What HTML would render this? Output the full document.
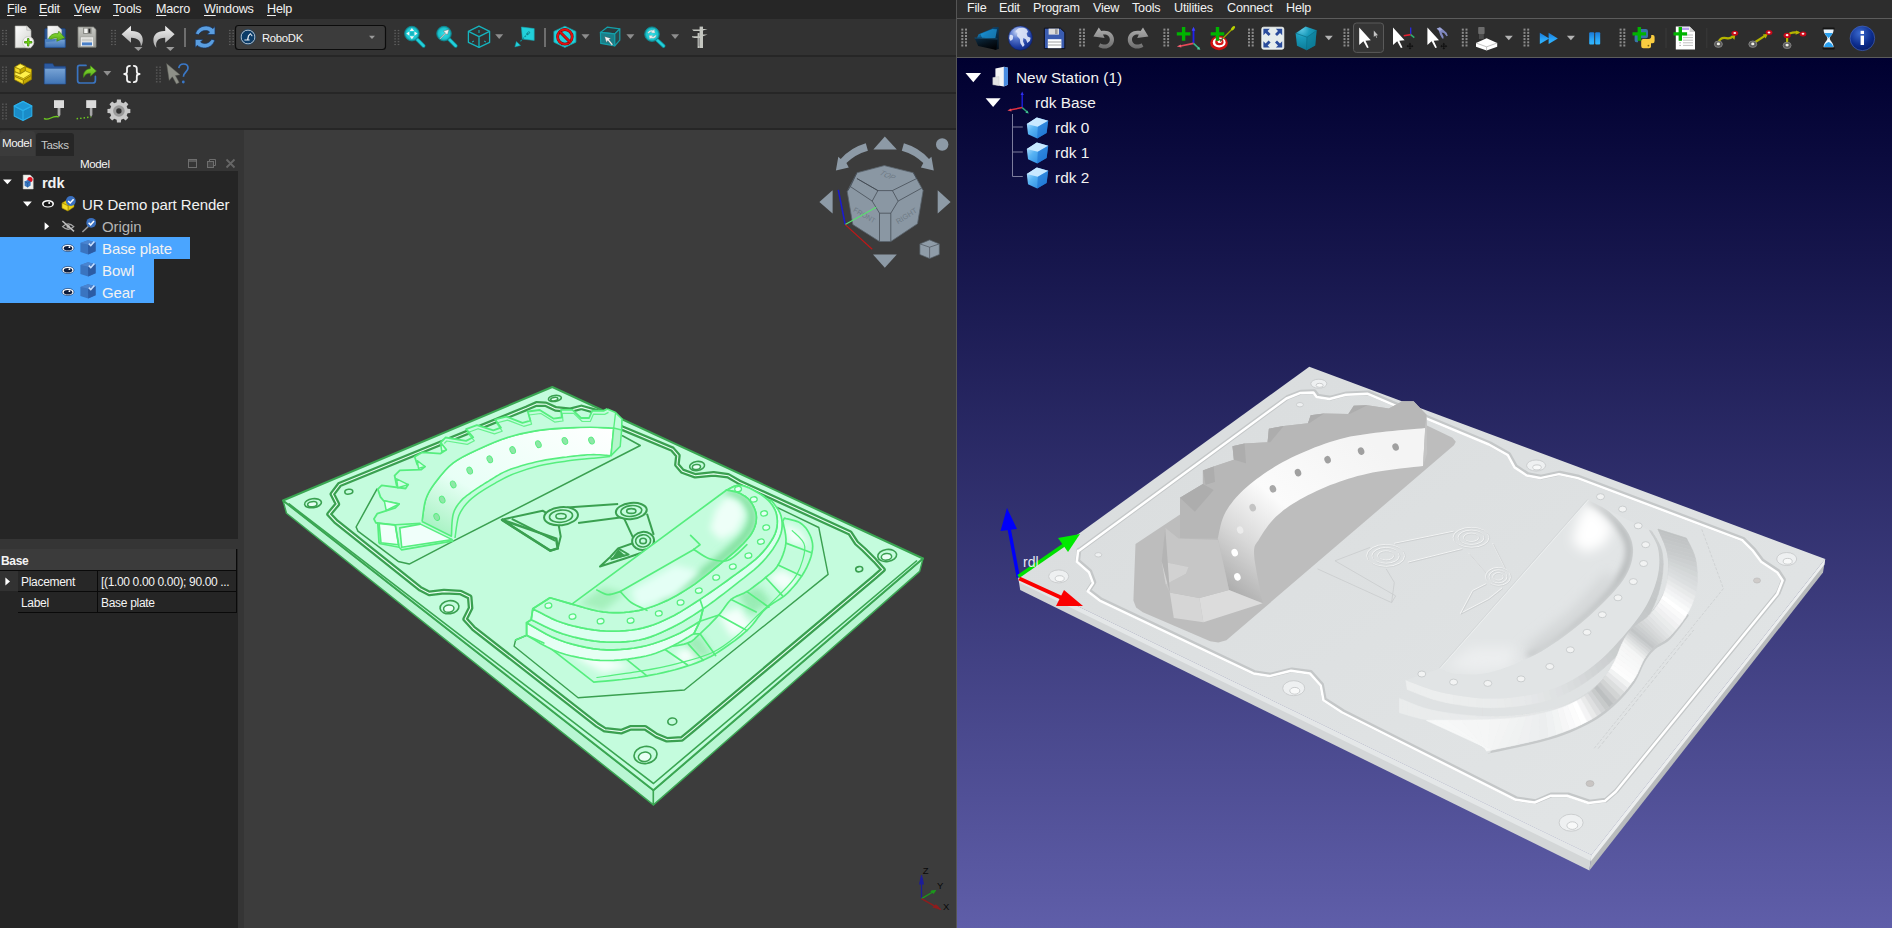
<!DOCTYPE html>
<html>
<head>
<meta charset="utf-8">
<title>FreeCAD / RoboDK</title>
<style>
html,body{margin:0;padding:0;}
body{width:1892px;height:928px;position:relative;overflow:hidden;background:#3c3c3c;font-family:"Liberation Sans",sans-serif;font-size:12.5px;color:#f0f0f0;}
.abs{position:absolute;}
.t{position:absolute;white-space:nowrap;line-height:1;}
svg{position:absolute;overflow:visible;}
/* LEFT WINDOW */
#L{position:absolute;left:0;top:0;width:957px;height:928px;background:#3c3c3c;overflow:hidden;}
#Lmenu{left:0;top:0;width:957px;height:19px;background:#262626;}
#Ltb1{left:0;top:19px;width:957px;height:36px;background:#323232;}
#Ltb2{left:0;top:57px;width:957px;height:35px;background:#323232;}
#Ltb3{left:0;top:94px;width:957px;height:34px;background:#323232;}
.sepd{position:absolute;left:0;width:957px;height:2px;background:#262626;}
#Lpanel{left:0;top:130px;width:244px;height:798px;background:#353535;}
#Ltree{left:0;top:171px;width:238px;height:368px;background:#252525;}
#Lprop{left:0;top:549px;width:238px;height:379px;background:#252525;}
.m{position:absolute;top:3px;letter-spacing:-0.2px;font-size:12.6px;line-height:13px;color:#f2f2f2;white-space:nowrap;}
.m u{text-decoration:underline;text-underline-offset:1.5px;text-decoration-thickness:1px;}
/* RIGHT WINDOW */
#R{position:absolute;left:957px;top:0;width:935px;height:928px;overflow:hidden;background:linear-gradient(#000030 58px,#5f5ea9 928px);}
#Rmenu{left:0;top:0;width:935px;height:18px;background:#2d2d2d;}
#Rtb{left:0;top:19px;width:935px;height:38px;background:#2d2d2d;}
.rm{position:absolute;top:2px;letter-spacing:-0.2px;font-size:12.6px;line-height:13px;color:#f2f2f2;white-space:nowrap;}
.rt{position:absolute;margin-top:1px;font-size:15.4px;line-height:16px;color:#f2f2f2;white-space:nowrap;}
.lt{position:absolute;font-size:15px;letter-spacing:-0.1px;line-height:16px;color:#f2f2f2;white-space:nowrap;}
.grip{position:absolute;width:4px;background-image:radial-gradient(circle,#6a6a6a 0.6px,transparent 0.8px);background-size:2px 2px;}
</style>
</head>
<body>
<div id="L">
  <div class="abs" id="Lmenu"></div>
  <div class="abs" id="Ltb1"></div>
  <div class="sepd" style="top:55px"></div>
  <div class="abs" id="Ltb2"></div>
  <div class="sepd" style="top:92px"></div>
  <div class="abs" id="Ltb3"></div>
  <div class="sepd" style="top:128px"></div>
  <div class="abs" id="Lpanel"></div>
  <div class="abs" id="Ltree"></div>
  <div class="abs" id="Lprop"></div>

  <!-- menu -->
  <div class="m" style="left:7px"><u>F</u>ile</div>
  <div class="m" style="left:39px"><u>E</u>dit</div>
  <div class="m" style="left:74px"><u>V</u>iew</div>
  <div class="m" style="left:113px"><u>T</u>ools</div>
  <div class="m" style="left:156px"><u>M</u>acro</div>
  <div class="m" style="left:204px"><u>W</u>indows</div>
  <div class="m" style="left:267px"><u>H</u>elp</div>
<!-- tabs -->
<div class="abs" style="left:0;top:131px;width:35px;height:25px;background:#3b3b3b;border-radius:3px 3px 0 0"></div>
<div class="abs" style="left:36px;top:133px;width:38px;height:23px;background:#262626;border-radius:3px 3px 0 0"></div>
<div class="t" style="left:2px;top:137px;font-size:11.6px;letter-spacing:-0.4px;color:#f4f4f4">Model</div>
<div class="t" style="left:41px;top:139px;font-size:11.6px;letter-spacing:-0.4px;color:#c8c8c8">Tasks</div>
<div class="t" style="left:80px;top:158px;font-size:11.6px;letter-spacing:-0.4px;color:#f4f4f4">Model</div>
<!-- selection -->
<div class="abs" style="left:0;top:237px;width:190px;height:22px;background:#4aa5ff"></div>
<div class="abs" style="left:0;top:259px;width:154px;height:44px;background:#4aa5ff"></div>
<!-- tree text -->
<div class="lt" style="left:42px;top:175px;font-weight:bold;font-size:14.6px">rdk</div>
<div class="lt" style="left:82px;top:197px">UR Demo part Render</div>
<div class="lt" style="left:102px;top:219px;color:#b4b4b4">Origin</div>
<div class="lt" style="left:102px;top:241px">Base plate</div>
<div class="lt" style="left:102px;top:263px">Bowl</div>
<div class="lt" style="left:102px;top:285px">Gear</div>
<!-- property table -->
<div class="abs" style="left:0;top:549px;width:237px;height:21px;background:#3b3b3b"></div>
<div class="abs" style="left:0;top:570px;width:237px;height:1px;background:#0a0a0a"></div>
<div class="abs" style="left:0;top:571px;width:18px;height:20px;background:#323232"></div>
<div class="abs" style="left:18px;top:571px;width:218px;height:20px;background:#272727"></div>
<div class="abs" style="left:18px;top:591px;width:219px;height:1px;background:#0a0a0a"></div>
<div class="abs" style="left:18px;top:612px;width:219px;height:1px;background:#0a0a0a"></div>
<div class="abs" style="left:97px;top:571px;width:1px;height:41px;background:#0a0a0a"></div>
<div class="abs" style="left:236px;top:549px;width:1px;height:64px;background:#0a0a0a"></div>
<div class="t" style="left:1px;top:555px;font-size:12px;font-weight:bold;letter-spacing:-0.3px;color:#f4f4f4">Base</div>
<div class="t" style="left:21px;top:576px;font-size:12px;letter-spacing:-0.3px;color:#f4f4f4">Placement</div>
<div class="t" style="left:101px;top:576px;font-size:12px;letter-spacing:-0.35px;color:#f4f4f4">[(1.00 0.00 0.00); 90.00 ...</div>
<div class="t" style="left:21px;top:597px;font-size:12px;letter-spacing:-0.3px;color:#f4f4f4">Label</div>
<div class="t" style="left:101px;top:597px;font-size:12px;letter-spacing:-0.3px;color:#f4f4f4">Base plate</div>
<div class="t" style="z-index:9;left:262px;top:32.5px;font-size:11.3px;letter-spacing:-0.3px;color:#f4f4f4">RoboDK</div>

<svg id="Licons" width="957" height="928" viewBox="0 0 957 928" style="left:0;top:0">
<defs>
<linearGradient id="gPaper" x1="0" y1="0" x2="1" y2="1"><stop offset="0" stop-color="#fdfdfd"/><stop offset="1" stop-color="#d2d4d0"/></linearGradient>
<linearGradient id="gBlue" x1="0" y1="0" x2="0" y2="1"><stop offset="0" stop-color="#78a4d6"/><stop offset="1" stop-color="#3f73b4"/></linearGradient>
<linearGradient id="gGreen" x1="0" y1="0" x2="0" y2="1"><stop offset="0" stop-color="#8ae234"/><stop offset="1" stop-color="#58a81c"/></linearGradient>
<linearGradient id="gGray" x1="0" y1="0" x2="0" y2="1"><stop offset="0" stop-color="#f2f2f2"/><stop offset="1" stop-color="#a8a8a8"/></linearGradient>
<linearGradient id="gSave" x1="0" y1="0" x2="0" y2="1"><stop offset="0" stop-color="#c8c9c4"/><stop offset="1" stop-color="#9a9b96"/></linearGradient>
<radialGradient id="gLens" cx="0.5" cy="0.5" r="0.5"><stop offset="0" stop-color="#34e0e8"/><stop offset="0.75" stop-color="#1bc4ce"/><stop offset="1" stop-color="#0e8e98"/></radialGradient>
<linearGradient id="gYel" x1="0" y1="0" x2="1" y2="1"><stop offset="0" stop-color="#fff04a"/><stop offset="1" stop-color="#d8b800"/></linearGradient>
</defs>
<rect x="2.0" y="29.9" width="1.6" height="1.2" fill="#5e5e5e"/><rect x="5.4" y="29.9" width="1.6" height="1.2" fill="#5e5e5e"/><rect x="2.0" y="32.7" width="1.6" height="1.2" fill="#5e5e5e"/><rect x="5.4" y="32.7" width="1.6" height="1.2" fill="#5e5e5e"/><rect x="2.0" y="35.5" width="1.6" height="1.2" fill="#5e5e5e"/><rect x="5.4" y="35.5" width="1.6" height="1.2" fill="#5e5e5e"/><rect x="2.0" y="38.3" width="1.6" height="1.2" fill="#5e5e5e"/><rect x="5.4" y="38.3" width="1.6" height="1.2" fill="#5e5e5e"/><rect x="2.0" y="41.1" width="1.6" height="1.2" fill="#5e5e5e"/><rect x="5.4" y="41.1" width="1.6" height="1.2" fill="#5e5e5e"/><rect x="2.0" y="43.9" width="1.6" height="1.2" fill="#5e5e5e"/><rect x="5.4" y="43.9" width="1.6" height="1.2" fill="#5e5e5e"/>
<rect x="111.0" y="29.9" width="1.6" height="1.2" fill="#5e5e5e"/><rect x="114.4" y="29.9" width="1.6" height="1.2" fill="#5e5e5e"/><rect x="111.0" y="32.7" width="1.6" height="1.2" fill="#5e5e5e"/><rect x="114.4" y="32.7" width="1.6" height="1.2" fill="#5e5e5e"/><rect x="111.0" y="35.5" width="1.6" height="1.2" fill="#5e5e5e"/><rect x="114.4" y="35.5" width="1.6" height="1.2" fill="#5e5e5e"/><rect x="111.0" y="38.3" width="1.6" height="1.2" fill="#5e5e5e"/><rect x="114.4" y="38.3" width="1.6" height="1.2" fill="#5e5e5e"/><rect x="111.0" y="41.1" width="1.6" height="1.2" fill="#5e5e5e"/><rect x="114.4" y="41.1" width="1.6" height="1.2" fill="#5e5e5e"/><rect x="111.0" y="43.9" width="1.6" height="1.2" fill="#5e5e5e"/><rect x="114.4" y="43.9" width="1.6" height="1.2" fill="#5e5e5e"/>
<rect x="229.0" y="29.9" width="1.6" height="1.2" fill="#5e5e5e"/><rect x="232.4" y="29.9" width="1.6" height="1.2" fill="#5e5e5e"/><rect x="229.0" y="32.7" width="1.6" height="1.2" fill="#5e5e5e"/><rect x="232.4" y="32.7" width="1.6" height="1.2" fill="#5e5e5e"/><rect x="229.0" y="35.5" width="1.6" height="1.2" fill="#5e5e5e"/><rect x="232.4" y="35.5" width="1.6" height="1.2" fill="#5e5e5e"/><rect x="229.0" y="38.3" width="1.6" height="1.2" fill="#5e5e5e"/><rect x="232.4" y="38.3" width="1.6" height="1.2" fill="#5e5e5e"/><rect x="229.0" y="41.1" width="1.6" height="1.2" fill="#5e5e5e"/><rect x="232.4" y="41.1" width="1.6" height="1.2" fill="#5e5e5e"/><rect x="229.0" y="43.9" width="1.6" height="1.2" fill="#5e5e5e"/><rect x="232.4" y="43.9" width="1.6" height="1.2" fill="#5e5e5e"/>
<rect x="394.3" y="29.9" width="1.6" height="1.2" fill="#5e5e5e"/><rect x="397.7" y="29.9" width="1.6" height="1.2" fill="#5e5e5e"/><rect x="394.3" y="32.7" width="1.6" height="1.2" fill="#5e5e5e"/><rect x="397.7" y="32.7" width="1.6" height="1.2" fill="#5e5e5e"/><rect x="394.3" y="35.5" width="1.6" height="1.2" fill="#5e5e5e"/><rect x="397.7" y="35.5" width="1.6" height="1.2" fill="#5e5e5e"/><rect x="394.3" y="38.3" width="1.6" height="1.2" fill="#5e5e5e"/><rect x="397.7" y="38.3" width="1.6" height="1.2" fill="#5e5e5e"/><rect x="394.3" y="41.1" width="1.6" height="1.2" fill="#5e5e5e"/><rect x="397.7" y="41.1" width="1.6" height="1.2" fill="#5e5e5e"/><rect x="394.3" y="43.9" width="1.6" height="1.2" fill="#5e5e5e"/><rect x="397.7" y="43.9" width="1.6" height="1.2" fill="#5e5e5e"/>
<path d="M15.2 26h11.6l4.2 4.2V47.8H15.2z" fill="url(#gPaper)" stroke="#b9bab6" stroke-width="0.6"/>
<path d="M26.8 26v4.2h4.2z" fill="#e8e8e6" stroke="#9a9a98" stroke-width="0.5"/>
<circle cx="28.2" cy="42.2" r="5.6" fill="#f4f4f2" stroke="#c4c4c0" stroke-width="0.8"/>
<path d="M28.2 39.2v6M25.2 42.2h6" stroke="#3f8a10" stroke-width="2.4" stroke-linecap="round"/><path d="M28.2 39.4v5.600M25.400 42.2h5.600" stroke="#73d216" stroke-width="1.300" stroke-linecap="round"/>
<rect x="44.8" y="28.6" width="20.6" height="18.9" rx="1" fill="#2c5898" stroke="#1c3c70" stroke-width="0.8"/>
<path d="M47.6 26h10l4 3.8V42H47.6z" fill="url(#gPaper)" stroke="#b9bab6" stroke-width="0.5"/>
<path d="M45 39.4h20.2v8H45z" fill="url(#gBlue)" stroke="#2a5490" stroke-width="0.6"/>
<path transform="translate(0,2.600)" d="M48 38.6c1-6 5.5-8.4 10-7.4l0.8-2.6 6 6.6-8 3.4 0.6-3c-3.6-0.8-6.8 0.6-9.4 3z" fill="url(#gGreen)" stroke="#3f8a10" stroke-width="0.7" stroke-linejoin="round"/>
<path d="M45 39.4c2.5-1.2 5-0.4 6.4 0.4 1.2 0.7 2.6 0 3.6-1.2l0.6 2.6-10.6 1z" fill="#4a80c0"/>
<path d="M78 27h15.4l2.6 2.6V47.2H78z" fill="url(#gSave)" stroke="#80817c" stroke-width="0.8" stroke-linejoin="round"/>
<rect x="83" y="27.6" width="8.6" height="6.4" fill="#8c8d88"/><rect x="84.2" y="28.6" width="3.4" height="4.4" fill="#f4f4f2"/><rect x="88.6" y="28.8" width="1.6" height="4" fill="#2c2c2c"/>
<rect x="80.6" y="37" width="12.8" height="9.4" fill="#f0f0ee" stroke="#a0a19c" stroke-width="0.6"/><path d="M81.6 39.2h10.8M81.6 40.8h10.8" stroke="#b4b5b0" stroke-width="0.8"/><rect x="82" y="42.4" width="10" height="3" fill="#4a80c8"/>
<path d="M121.6 34.2l9.4-8.4v5.2c7.6-0.4 11.8 3.6 11.8 9.2 0 2.6-0.8 4.6-2 6.2 0.4-5.2-3-8.8-9.8-8.6v5z" fill="url(#gGray)"/>
<path d="M134.10000000000002 47.0h8.4l-4.2 4z" fill="#9a9a9a"/>
<path d="M174.6 34.2l-9.4-8.4v5.2c-7.6-0.4-11.8 3.6-11.8 9.2 0 3 1.2 5.6 3 7.6-1.4-6.200 1.800-10.200 8.800-10v5z" fill="url(#gGray)"/>
<path d="M166.10000000000002 47.0h8.4l-4.2 4z" fill="#9a9a9a"/>
<rect x="184" y="28" width="2" height="19" fill="#6e6e6e"/>
<path d="M195.4 33.800c1.600-5.200 6.400-8.200 11.200-7.800 2.600 0.200 4.800 1.200 6.400 2.600l2-2v8h-8l2.600-2.600c-1.200-1-2.400-1.400-4-1.400-3.400 0-5.600 1.600-7 4.200z" fill="#5a9ee0" stroke="#15305a" stroke-width="0.7" stroke-linejoin="round"/>
<path d="M214.800 40.200c-1.600 5.200-6.400 8.200-11.200 7.800-2.600-0.200-4.800-1.200-6.400-2.600l-2 2v-8h8l-2.600 2.600c1.200 1 2.400 1.400 4 1.400 3.400 0 5.600-1.600 7-4.200z" fill="#5a9ee0" stroke="#15305a" stroke-width="0.7" stroke-linejoin="round"/>
<rect x="235.500" y="25.500" width="150" height="24" rx="3" fill="#3c3c3c" stroke="#0c0c0c" stroke-width="1.2"/>
<circle cx="248" cy="37" r="7" fill="#0c3c68" stroke="#e8eef4" stroke-width="0.9"/><circle cx="248" cy="37" r="7.700" fill="none" stroke="#0c3c68" stroke-width="0.6"/>
<path d="M244.400 40.400h5.200v-1h-1.200l0.600-3.200 1.400-1.600 1.600 1.800 0.600-0.600-2.200-2.800-2.400 2.400-1 4h-2.600z" fill="#e8eef4"/>
<path d="M369.0 35.699999999999996h6l-3.0 3.4z" fill="#9a9a9a"/>
<path d="M416.9 39.2L423.6 45.8" stroke="#0e8e98" stroke-width="3.800" stroke-linecap="round"/><path d="M416.9 39.2L423.6 45.8" stroke="#22d0da" stroke-width="2.400" stroke-linecap="round"/><circle cx="411.9" cy="33.6" r="7.300" fill="url(#gLens)" stroke="#0e8e98" stroke-width="0.800"/>
<path d="M411.900 28l2.200 3h-4.400zM411.900 39.200l2.200-3h-4.400zM406.300 33.600l3-2.200v4.400zM417.500 33.600l-3-2.200v4.400z" fill="#f4f4f4"/><rect x="410.100" y="31.800" width="3.600" height="3.600" fill="#16b4be"/>
<path d="M449 39.2L455.7 45.8" stroke="#0e8e98" stroke-width="3.800" stroke-linecap="round"/><path d="M449 39.2L455.7 45.8" stroke="#22d0da" stroke-width="2.400" stroke-linecap="round"/><circle cx="444" cy="33.6" r="7.300" fill="url(#gLens)" stroke="#0e8e98" stroke-width="0.800"/>
<path d="M439.600 38.400l5.600-5.600-1.800-1.800 5.600-1.600-1.600 5.600-1.600-1.600-5.400 5.600z" fill="#f4f4f4" stroke="#555" stroke-width="0.400"/>
<g fill="none" stroke="#16b4be" stroke-width="1.300" stroke-linejoin="round"><path d="M479 26.200l10.600 5.200v11l-10.600 5-10.600-5v-11z"/><path d="M468.400 31.400l10.600 5.200 10.600-5.200M479 36.600v10.800"/></g><path d="M479 30v3M474 41l-2 1M484 41l2 1" stroke="#16b4be" stroke-width="1"/>
<path d="M495.2 34.300000000000004h8l-4.0 4.6z" fill="#8e8e8e"/>
<path d="M521.400 27l12.800 1.600v11.800l-11.800-1.300z" fill="#22d0da" stroke="#14a8b2" stroke-width="0.600"/>
<path d="M528 33.400l-8 8.400" stroke="#0e8e98" stroke-width="1.200" stroke-dasharray="2 1"/><path d="M514.800 47l1.600-5.600 4.200 4z" fill="#22d0da" stroke="#0e8e98" stroke-width="0.500"/><ellipse cx="528.200" cy="33.200" rx="1.800" ry="0.900" transform="rotate(-45 528.200 33.200)" fill="none" stroke="#0e6e78" stroke-width="0.700"/>
<rect x="544" y="28" width="2" height="19" fill="#6e6e6e"/>
<path d="M564.900 26.200l11 5.200v10.800l-11 5.200-11-5.200V31.400z" fill="#22d0da" stroke="#12a0aa" stroke-width="0.800"/>
<circle cx="564.900" cy="36.800" r="7.300" fill="none" stroke="#7a0000" stroke-width="2.800"/><circle cx="564.900" cy="36.800" r="7.300" fill="none" stroke="#e01010" stroke-width="1.900"/><path d="M559.800 31.700l10.200 10.200" stroke="#7a0000" stroke-width="2.800"/><path d="M559.800 31.700l10.200 10.200" stroke="#e01010" stroke-width="1.900"/>
<path d="M581.5 34.300000000000004h8l-4.0 4.6z" fill="#8e8e8e"/>
<g stroke="#14a0aa" stroke-width="1.200" stroke-linejoin="round"><path d="M600.400 32.400l6.800-5.200 12.600 1.600-5 5z" fill="#2a3c3e"/><path d="M600.400 32.400l14.400 1.400v12l-14-2.400z" fill="#1a7e88"/><path d="M614.800 33.800l5-5v11.400l-5 5.600z" fill="#2a4a4e"/></g>
<path d="M604.600 36.400l6.400 2-2 1.200 4 4.800-1.200 1-4-4.800-1.400 1.800z" fill="#f4f4f4" stroke="#444" stroke-width="0.300"/>
<path d="M626.4 34.300000000000004h8l-4.0 4.6z" fill="#8e8e8e"/>
<path d="M657 39.800000000000004L663.6 46" stroke="#0e8e98" stroke-width="3.800" stroke-linecap="round"/><path d="M657 39.800000000000004L663.6 46" stroke="#22d0da" stroke-width="2.400" stroke-linecap="round"/><circle cx="652" cy="34.2" r="7.300" fill="url(#gLens)" stroke="#0e8e98" stroke-width="0.800"/>
<path d="M647.600 33c0.800-2.400 3.400-3.400 5.600-2.600l1-1.200 0.800 3.800-3.800-0.200 0.900-1c-1.400-0.400-2.600 0.200-3.200 1.400zM656.400 35.400c-0.800 2.400-3.400 3.400-5.600 2.600l-1 1.200-0.800-3.800 3.800 0.200-0.900 1c1.400 0.400 2.600-0.200 3.200-1.400z" fill="#f0f0f0" stroke="#999" stroke-width="0.300"/>
<path d="M671.1 34.300000000000004h8l-4.0 4.6z" fill="#8e8e8e"/>
<g fill="#c4c6c0"><rect x="699.600" y="26.600" width="3.400" height="21.400"/><path d="M692 29.400h9v1.600h-7.400zM692 36.200h9v1.800h-6.600l-2.400-0.800z"/><path d="M703 29h4.600l-4.600 1.600zM703 34.600h4.600l-4.600 1.600z"/><rect x="697.600" y="33" width="2" height="15"/></g><path d="M698 39h2M698 41h2M698 43h2M698 45h2" stroke="#666" stroke-width="0.600"/>
<rect x="2.0" y="66.6" width="1.6" height="1.2" fill="#5e5e5e"/><rect x="5.4" y="66.6" width="1.6" height="1.2" fill="#5e5e5e"/><rect x="2.0" y="69.5" width="1.6" height="1.2" fill="#5e5e5e"/><rect x="5.4" y="69.5" width="1.6" height="1.2" fill="#5e5e5e"/><rect x="2.0" y="72.4" width="1.6" height="1.2" fill="#5e5e5e"/><rect x="5.4" y="72.4" width="1.6" height="1.2" fill="#5e5e5e"/><rect x="2.0" y="75.4" width="1.6" height="1.2" fill="#5e5e5e"/><rect x="5.4" y="75.4" width="1.6" height="1.2" fill="#5e5e5e"/><rect x="2.0" y="78.3" width="1.6" height="1.2" fill="#5e5e5e"/><rect x="5.4" y="78.3" width="1.6" height="1.2" fill="#5e5e5e"/><rect x="2.0" y="81.2" width="1.6" height="1.2" fill="#5e5e5e"/><rect x="5.4" y="81.2" width="1.6" height="1.2" fill="#5e5e5e"/>
<rect x="155.9" y="66.6" width="1.6" height="1.2" fill="#5e5e5e"/><rect x="159.3" y="66.6" width="1.6" height="1.2" fill="#5e5e5e"/><rect x="155.9" y="69.5" width="1.6" height="1.2" fill="#5e5e5e"/><rect x="159.3" y="69.5" width="1.6" height="1.2" fill="#5e5e5e"/><rect x="155.9" y="72.4" width="1.6" height="1.2" fill="#5e5e5e"/><rect x="159.3" y="72.4" width="1.6" height="1.2" fill="#5e5e5e"/><rect x="155.9" y="75.4" width="1.6" height="1.2" fill="#5e5e5e"/><rect x="159.3" y="75.4" width="1.6" height="1.2" fill="#5e5e5e"/><rect x="155.9" y="78.3" width="1.6" height="1.2" fill="#5e5e5e"/><rect x="159.3" y="78.3" width="1.6" height="1.2" fill="#5e5e5e"/><rect x="155.9" y="81.2" width="1.6" height="1.2" fill="#5e5e5e"/><rect x="159.3" y="81.2" width="1.6" height="1.2" fill="#5e5e5e"/>
<g stroke="#8a7400" stroke-width="0.700" stroke-linejoin="round"><path d="M14.600 76.400l8.800 4 8.200-5v-6.200l-6-2.400v-0.600l-5.400-2.200-5.400 3.200v4.600l-0.200 0.200z" fill="#e8cc10"/><path d="M14.800 67l5.400 2.400v4.400l-5.400-2.200zM14.600 76.400l8.800 3.800v4l-8.800-4.400z" fill="#f4dc28"/><path d="M20.200 69.400l5.200-3v4.400l-5.200 3zM23.400 80.200l8.200-5v4.200l-8.200 5z" fill="#c4a800"/><path d="M14.800 67l5.400-3.200 5.200 2.600-5.200 3zM15 72l5.200 2 5.200-3.200 6.200 2.800-8.200 5-8.800-3.800z" fill="#fff04a"/></g>
<path d="M44.200 84V64.600q0-1 1-1h7.400l1.800 2.600h10.400q1 0 1 1V84z" fill="#2c5aa0" stroke="#1c3c70" stroke-width="0.600"/><path d="M44.600 68.400h20.800V84H44.600z" fill="url(#gBlue)" stroke="#2a5490" stroke-width="0.500"/>
<path d="M86 65.400h-6.400q-2 0-2 2v13q0 2.600 2.600 2.600h12.600q2.600 0 2.600-2.600v-4" fill="none" stroke="#3a74c0" stroke-width="1.700" stroke-linecap="round"/>
<path d="M83.600 77.400c-0.600-5.200 2.400-8.400 6.800-8.600v-3l6 5.200-6 5.200v-3c-3.200-0.200-5.400 1.400-6.800 4.200z" fill="url(#gGreen)" stroke="#3f8a10" stroke-width="0.600" stroke-linejoin="round"/>
<path d="M103.3 71.10000000000001h8l-4.0 4.6z" fill="#8e8e8e"/>
<g fill="none" stroke="#f4f4f4" stroke-width="1.800" stroke-linecap="round" stroke-linejoin="round"><path d="M130 65.800q-3 0-3 2.600v3.200q0 2.400-2.800 2.400 2.800 0 2.800 2.400v3.200q0 2.600 3 2.600"/><path d="M133.800 65.800q3 0 3 2.600v3.200q0 2.400 2.800 2.400-2.800 0-2.800 2.400v3.200q0 2.600-3 2.600"/></g>
<path d="M166.600 63.600l2.600 16.800 3.200-3.600 4 7.200 2.800-1.600-3.800-6.800 4.600-0.800z" fill="#8e9088" stroke="#5a5c56" stroke-width="0.500" stroke-linejoin="round"/>
<path d="M178.800 68.200c0.400-3 2.600-4.200 4.800-4.200 2.600 0 4.400 1.600 4.400 4 0 3.600-4.600 4.200-4.600 8.800" fill="none" stroke="#3a78c8" stroke-width="1.700"/><circle cx="183.300" cy="82" r="1.400" fill="#3a78c8"/>
<rect x="2.0" y="103.6" width="1.6" height="1.2" fill="#5e5e5e"/><rect x="5.4" y="103.6" width="1.6" height="1.2" fill="#5e5e5e"/><rect x="2.0" y="106.5" width="1.6" height="1.2" fill="#5e5e5e"/><rect x="5.4" y="106.5" width="1.6" height="1.2" fill="#5e5e5e"/><rect x="2.0" y="109.4" width="1.6" height="1.2" fill="#5e5e5e"/><rect x="5.4" y="109.4" width="1.6" height="1.2" fill="#5e5e5e"/><rect x="2.0" y="112.4" width="1.6" height="1.2" fill="#5e5e5e"/><rect x="5.4" y="112.4" width="1.6" height="1.2" fill="#5e5e5e"/><rect x="2.0" y="115.3" width="1.6" height="1.2" fill="#5e5e5e"/><rect x="5.4" y="115.3" width="1.6" height="1.2" fill="#5e5e5e"/><rect x="2.0" y="118.2" width="1.6" height="1.2" fill="#5e5e5e"/><rect x="5.4" y="118.2" width="1.6" height="1.2" fill="#5e5e5e"/>
<g stroke="#2ab0ea" stroke-width="1.100" stroke-linejoin="round"><path d="M23 101.400l8.800 4.600v10l-8.800 4.600-8.800-4.600v-10z" fill="#1a8cc8"/><path d="M14.200 106l8.800 4.600 8.800-4.600M23 110.600v10" fill="none"/><path d="M23 101.400l8.800 4.600-8.800 4.600-8.800-4.600z" fill="#1e98d6"/></g>
<rect x="54" y="100.200" width="10" height="7.800" fill="#dcdcdc"/><path d="M57.600 108h2.800v7l-1.400 2-1.400-2z" fill="#a8a8a8"/><path d="M44 118.400c2 1.400 4.400 0.800 6.800-0.400 2.600-1.300 5-2 8-1.200" fill="none" stroke="#6cc820" stroke-width="1.300"/>
<rect x="86.200" y="100.200" width="10" height="7.800" fill="#dcdcdc"/><path d="M89.800 108h2.600v7l-1.300 2-1.300-2z" fill="#a8a8a8"/><path d="M76.600 118.800l14.600-1.800" fill="none" stroke="#6cc820" stroke-width="1.500" stroke-dasharray="1.500 2"/>
<path d="M116.67 102.28 L116.94 99.57 L120.86 99.57 L121.13 102.28 L123.49 103.26 L125.60 101.53 L128.37 104.30 L126.64 106.41 L127.62 108.77 L130.33 109.04 L130.33 112.96 L127.62 113.23 L126.64 115.59 L128.37 117.70 L125.60 120.47 L123.49 118.74 L121.13 119.72 L120.86 122.43 L116.94 122.43 L116.67 119.72 L114.31 118.74 L112.20 120.47 L109.43 117.70 L111.16 115.59 L110.18 113.23 L107.47 112.96 L107.47 109.04 L110.18 108.77 L111.16 106.41 L109.43 104.30 L112.20 101.53 L114.31 103.26z" fill="#c8c8c8"/><circle cx="118.9" cy="111" r="5.800" fill="#989898"/><circle cx="118.9" cy="111" r="2.700" fill="#323232"/>
</svg>
<svg id="Lmodel" width="957" height="928" viewBox="0 0 957 928" style="left:0;top:0">
<defs>
<linearGradient id="lgBand" x1="0" y1="1" x2="1" y2="0"><stop offset="0" stop-color="#9af0b8"/><stop offset="0.35" stop-color="#e8fff6"/><stop offset="1" stop-color="#ffffff"/></linearGradient>
<radialGradient id="lgBowl" cx="0.55" cy="0.35" r="0.6"><stop offset="0" stop-color="#e4fff4"/><stop offset="0.7" stop-color="#c4fcdd"/><stop offset="1" stop-color="#9ceeb8"/></radialGradient>
<linearGradient id="lgTrough" x1="0" y1="0" x2="1" y2="0.3"><stop offset="0" stop-color="#c4fcdd"/><stop offset="0.4" stop-color="#eafff8"/><stop offset="1" stop-color="#c4fcdd"/></linearGradient>
</defs>
<path d="M283.0 500.5 L653.4 790.2 L653.4 804.9 L286.5 513.3z" fill="#b9f6d3" stroke="#3aa652" stroke-width="1.4" stroke-linejoin="round"/>
<path d="M653.4 790.2 L923.0 558.5 L919.7 571.4 L653.4 804.9z" fill="#b9f6d3" stroke="#3aa652" stroke-width="1.4" stroke-linejoin="round"/>
<path d="M552.3 387.0 L923.0 558.5 L653.4 790.2 L283.0 500.5z" fill="#c4fcdd" stroke="#3aa652" stroke-width="2" stroke-linejoin="round"/>
<path d="M288.5 503.5 L653.4 783.5 L917.0 560.5" fill="none" stroke="#3aa652" stroke-width="1.6"/>
<path d="M339.6 484.5 L526.5 408.3 L536.5 403.9 L545.7 404.3 L555.8 408.9 L570.4 410.2 L581.4 407.4 L597.9 412.0 L622.0 428.1 L672.4 449.2 L677.9 455.6 L676.9 464.8 L682.4 471.2 L695.3 475.8 L713.6 473.9 L728.2 475.8 L739.2 482.2 L850.0 533.0 L856.5 543.0 L863.8 549.5 L874.8 560.5 L883.0 569.6 L874.8 576.9 L691.9 730.7 L681.8 738.9 L667.1 739.8 L656.2 735.3 L645.2 727.9 L630.5 727.9 L621.4 731.6 L604.9 729.8 L597.5 725.2 L473.3 628.2 L465.1 619.1 L470.6 608.1 L469.7 597.1 L460.5 592.5 L444.0 591.6 L429.4 593.4 L420.2 588.8 L335.9 521.5 L329.0 514.2 L337.4 504.1 L332.3 494.1z" fill="none" stroke="#3aa050" stroke-width="5.6" stroke-linejoin="round"/>
<path d="M339.6 484.5 L526.5 408.3 L536.5 403.9 L545.7 404.3 L555.8 408.9 L570.4 410.2 L581.4 407.4 L597.9 412.0 L622.0 428.1 L672.4 449.2 L677.9 455.6 L676.9 464.8 L682.4 471.2 L695.3 475.8 L713.6 473.9 L728.2 475.8 L739.2 482.2 L850.0 533.0 L856.5 543.0 L863.8 549.5 L874.8 560.5 L883.0 569.6 L874.8 576.9 L691.9 730.7 L681.8 738.9 L667.1 739.8 L656.2 735.3 L645.2 727.9 L630.5 727.9 L621.4 731.6 L604.9 729.8 L597.5 725.2 L473.3 628.2 L465.1 619.1 L470.6 608.1 L469.7 597.1 L460.5 592.5 L444.0 591.6 L429.4 593.4 L420.2 588.8 L335.9 521.5 L329.0 514.2 L337.4 504.1 L332.3 494.1z" fill="none" stroke="#e6fff2" stroke-width="1.1" stroke-linejoin="round"/>
<ellipse cx="554.9" cy="398.4" rx="6.5" ry="3" transform="rotate(-8 554.9 398.4)" fill="#c4fcdd" stroke="#3aa050" stroke-width="1.6"/><ellipse cx="554.2" cy="399.0" rx="3.6" ry="1.7" transform="rotate(-8 554.9 398.4)" fill="#e8fff4" stroke="#3aa050" stroke-width="1.5"/>
<ellipse cx="313.0" cy="503.2" rx="8.5" ry="4.5" transform="rotate(-8 313.0 503.2)" fill="#c4fcdd" stroke="#3aa050" stroke-width="1.6"/><ellipse cx="312.2" cy="504.1" rx="4.7" ry="2.5" transform="rotate(-8 313.0 503.2)" fill="#e8fff4" stroke="#3aa050" stroke-width="1.5"/>
<ellipse cx="449.5" cy="607.2" rx="9.5" ry="6.5" transform="rotate(-8 449.5 607.2)" fill="#c4fcdd" stroke="#3aa050" stroke-width="1.6"/><ellipse cx="448.6" cy="608.5" rx="5.2" ry="3.6" transform="rotate(-8 449.5 607.2)" fill="#e8fff4" stroke="#3aa050" stroke-width="1.5"/>
<ellipse cx="645.5" cy="755.0" rx="11.5" ry="8.5" transform="rotate(-8 645.5 755.0)" fill="#c4fcdd" stroke="#3aa050" stroke-width="1.6"/><ellipse cx="644.4" cy="756.7" rx="6.3" ry="4.7" transform="rotate(-8 645.5 755.0)" fill="#e8fff4" stroke="#3aa050" stroke-width="1.5"/>
<ellipse cx="887.2" cy="555.5" rx="9.5" ry="6" transform="rotate(-8 887.2 555.5)" fill="#c4fcdd" stroke="#3aa050" stroke-width="1.6"/><ellipse cx="886.3" cy="556.7" rx="5.2" ry="3.3" transform="rotate(-8 887.2 555.5)" fill="#e8fff4" stroke="#3aa050" stroke-width="1.5"/>
<ellipse cx="697.1" cy="466.0" rx="7.5" ry="4.5" transform="rotate(-8 697.1 466.0)" fill="#c4fcdd" stroke="#3aa050" stroke-width="1.6"/><ellipse cx="696.3" cy="466.9" rx="4.1" ry="2.5" transform="rotate(-8 697.1 466.0)" fill="#e8fff4" stroke="#3aa050" stroke-width="1.5"/>
<ellipse cx="348.8" cy="491.7" rx="4" ry="2.4" transform="rotate(-8 348.8 491.7)" fill="#c4fcdd" stroke="#3aa050" stroke-width="1.6"/>
<ellipse cx="672.3" cy="721.5" rx="4.5" ry="3.5" transform="rotate(-8 672.3 721.5)" fill="#c4fcdd" stroke="#3aa050" stroke-width="1.6"/>
<ellipse cx="859.2" cy="569.2" rx="3.5" ry="2.6" transform="rotate(-8 859.2 569.2)" fill="#c4fcdd" stroke="#3aa050" stroke-width="1.6"/>
<path d="M377.2 488.6 L356.1 527.0 L357.9 531.1 L398.2 561.4 L409.2 564.1 L453.2 541.2 L640.3 445.5 L622.0 435.5" fill="none" stroke="#3aa050" stroke-width="1.5" stroke-linejoin="round"/>
<path d="M422.0 521.5 C422.7 517.9 423.6 506.0 425.7 499.6 C427.8 493.2 430.3 489.2 434.9 483.1 C439.4 477.0 445.6 468.7 453.2 462.9 C460.8 457.1 471.5 452.5 480.7 448.3 C489.8 444.0 499.0 440.2 508.1 437.3 C517.3 434.4 526.5 432.4 535.6 430.9 C544.8 429.3 553.9 428.7 563.1 428.1 C572.3 427.5 582.1 427.2 590.6 427.2 C599.0 427.2 609.9 428.0 613.7 428.1 L611.0 455.6 " fill="none"/>
<path d="M422.0 521.5 L422.3 519.8 L422.6 517.5 L422.9 514.7 L423.3 511.6 L423.8 508.4 L424.3 505.2 L425.0 502.2 L425.7 499.6 L426.5 497.3 L427.4 495.1 L428.3 493.1 L429.4 491.2 L430.5 489.3 L431.8 487.3 L433.2 485.3 L434.9 483.1 L436.7 480.7 L438.6 478.2 L440.7 475.5 L442.9 472.9 L445.2 470.2 L447.7 467.7 L450.4 465.2 L453.2 462.9 L456.2 460.8 L459.4 458.8 L462.8 456.9 L466.4 455.0 L470.0 453.3 L473.6 451.6 L477.2 449.9 L480.7 448.3 L484.1 446.7 L487.5 445.2 L491.0 443.7 L494.4 442.3 L497.8 440.9 L501.3 439.6 L504.7 438.4 L508.1 437.3 L511.6 436.2 L515.0 435.3 L518.4 434.4 L521.9 433.6 L525.3 432.8 L528.7 432.1 L532.2 431.5 L535.6 430.9 L539.1 430.3 L542.5 429.9 L545.9 429.5 L549.4 429.2 L552.8 428.9 L556.2 428.6 L559.7 428.4 L563.1 428.1 L566.6 427.9 L570.1 427.7 L573.6 427.6 L577.1 427.4 L580.6 427.3 L584.0 427.3 L587.3 427.2 L590.6 427.2 L593.8 427.2 L597.2 427.3 L600.6 427.5 L603.9 427.6 L606.9 427.8 L609.7 427.9 L612.0 428.0 L613.7 428.1 L611.0 455.6 L609.5 455.5 L607.5 455.4 L605.1 455.2 L602.5 455.0 L599.6 454.8 L596.7 454.7 L593.6 454.6 L590.6 454.7 L587.5 454.8 L584.2 455.1 L580.8 455.4 L577.3 455.7 L573.7 456.1 L570.1 456.5 L566.6 457.0 L563.1 457.4 L559.7 457.9 L556.2 458.4 L552.8 458.9 L549.4 459.4 L545.9 459.9 L542.5 460.6 L539.1 461.3 L535.6 462.0 L532.1 462.9 L528.5 463.8 L524.9 464.8 L521.3 465.8 L517.8 466.9 L514.4 468.0 L511.1 469.1 L508.1 470.3 L505.4 471.4 L502.9 472.6 L500.6 473.8 L498.4 475.1 L496.3 476.3 L494.2 477.6 L492.0 479.0 L489.8 480.3 L487.5 481.8 L485.1 483.2 L482.6 484.8 L480.2 486.3 L477.8 487.9 L475.6 489.4 L473.4 490.9 L471.5 492.2 L469.8 493.5 L468.2 494.6 L466.7 495.7 L465.3 496.8 L464.0 497.8 L462.8 498.9 L461.7 500.1 L460.5 501.4 L459.4 502.8 L458.3 504.1 L457.3 505.5 L456.3 507.0 L455.4 508.6 L454.5 510.3 L453.8 512.2 L453.2 514.2 L452.7 516.7 L452.3 519.6 L452.0 522.8 L451.8 526.0 L451.7 529.2 L451.6 532.0 L451.5 534.4 L451.4 536.2z" fill="url(#lgBand)" stroke="#56ee7e" stroke-width="1.6" stroke-linejoin="round"/>
<path d="M455.0 538.0 C455.6 534.4 456.7 521.9 458.7 516.1 C460.7 510.3 463.6 507.0 466.9 503.2 C470.3 499.4 474.1 496.5 478.8 493.2 C483.6 489.8 489.5 486.3 495.3 483.1 C501.1 479.9 506.3 476.8 513.6 473.9 C521.0 471.0 530.4 467.8 539.3 465.7 C548.1 463.5 557.9 462.3 566.8 461.1 C575.6 459.9 585.2 459.1 592.4 458.3 C599.6 457.6 607.1 456.8 610.0 456.5" fill="none" stroke="#56ee7e" stroke-width="1.5"/>
<ellipse cx="436.7" cy="517.0" rx="2.6" ry="3.6" transform="rotate(-25 436.7 517.0)" fill="#8fe6a8" stroke="#56ee7e" stroke-width="0.9"/>
<ellipse cx="442.2" cy="499.6" rx="2.6" ry="3.6" transform="rotate(-25 442.2 499.6)" fill="#8fe6a8" stroke="#56ee7e" stroke-width="0.9"/>
<ellipse cx="453.2" cy="484.4" rx="2.6" ry="3.6" transform="rotate(-25 453.2 484.4)" fill="#8fe6a8" stroke="#56ee7e" stroke-width="0.9"/>
<ellipse cx="469.7" cy="470.6" rx="2.6" ry="3.6" transform="rotate(-25 469.7 470.6)" fill="#8fe6a8" stroke="#56ee7e" stroke-width="0.9"/>
<ellipse cx="489.8" cy="459.3" rx="2.6" ry="3.6" transform="rotate(-25 489.8 459.3)" fill="#8fe6a8" stroke="#56ee7e" stroke-width="0.9"/>
<ellipse cx="512.7" cy="450.1" rx="2.6" ry="3.6" transform="rotate(-25 512.7 450.1)" fill="#8fe6a8" stroke="#56ee7e" stroke-width="0.9"/>
<ellipse cx="538.4" cy="444.2" rx="2.6" ry="3.6" transform="rotate(-25 538.4 444.2)" fill="#8fe6a8" stroke="#56ee7e" stroke-width="0.9"/>
<ellipse cx="564.9" cy="440.9" rx="2.6" ry="3.6" transform="rotate(-25 564.9 440.9)" fill="#8fe6a8" stroke="#56ee7e" stroke-width="0.9"/>
<ellipse cx="591.5" cy="440.6" rx="2.6" ry="3.6" transform="rotate(-25 591.5 440.6)" fill="#8fe6a8" stroke="#56ee7e" stroke-width="0.9"/>
<path d="M379.1 543.5 L377.8 522.8 L375.9 522.8 L373.9 518.9 L377.2 513.7 L395.3 507.9 L399.1 504.0 L383.6 500.8 L380.4 496.9 L377.8 489.1 L381.7 485.3 L405.6 488.5 L408.2 484.6 L396.6 485.3 L394.6 475.6 L399.8 470.4 L421.1 469.7 L425.0 466.5 L417.2 464.6 L414.7 456.8 L422.4 452.3 L440.5 453.6 L446.3 449.7 L440.5 442.6 L443.1 440.0 L445.5 437.5 L466.1 440.9 L473.2 437.3 L466.1 429.2 L476.9 425.2 L493.3 430.4 L501.0 427.7 L495.2 419.5 L506.4 416.6 L522.5 422.8 L530.4 420.7 L527.8 411.5 L539.7 410.0 L553.4 418.6 L561.8 417.5 L561.0 409.8 L572.5 409.8 L581.0 418.0 L589.1 418.0 L592.3 410.6 L603.5 410.9 L607.3 408.9 L615.6 412.6 L622.0 419.0 L621.6 430.0 L613.7 428.1 L612.0 428.0 L609.7 427.9 L606.9 427.8 L603.9 427.6 L600.6 427.5 L597.2 427.3 L593.8 427.2 L590.6 427.2 L587.3 427.2 L584.0 427.3 L580.6 427.3 L577.1 427.4 L573.6 427.6 L570.1 427.7 L566.6 427.9 L563.1 428.1 L559.7 428.4 L556.2 428.6 L552.8 428.9 L549.4 429.2 L545.9 429.5 L542.5 429.9 L539.1 430.3 L535.6 430.9 L532.2 431.5 L528.7 432.1 L525.3 432.8 L521.9 433.6 L518.4 434.4 L515.0 435.3 L511.6 436.2 L508.1 437.3 L504.7 438.4 L501.3 439.6 L497.8 440.9 L494.4 442.3 L491.0 443.7 L487.5 445.2 L484.1 446.7 L480.7 448.3 L477.2 449.9 L473.6 451.6 L470.0 453.3 L466.4 455.0 L462.8 456.9 L459.4 458.8 L456.2 460.8 L453.2 462.9 L450.4 465.2 L447.7 467.7 L445.2 470.2 L442.9 472.9 L440.7 475.5 L438.6 478.2 L436.7 480.7 L434.9 483.1 L433.2 485.3 L431.8 487.3 L430.5 489.3 L429.4 491.2 L428.3 493.1 L427.4 495.1 L426.5 497.3 L425.7 499.6 L425.0 502.2 L424.3 505.2 L423.8 508.4 L423.3 511.6 L422.9 514.7 L422.6 517.5 L422.3 519.8 L422.0 521.5z" fill="#c4fcdd"/>
<path d="M422.0 521.5 C422.7 517.9 423.6 506.0 425.7 499.6 C427.8 493.2 430.3 489.2 434.9 483.1 C439.4 477.0 445.6 468.7 453.2 462.9 C460.8 457.1 471.5 452.5 480.7 448.3 C489.8 444.0 499.0 440.2 508.1 437.3 C517.3 434.4 526.5 432.4 535.6 430.9 C544.8 429.3 553.9 428.7 563.1 428.1 C572.3 427.5 582.1 427.2 590.6 427.2 C599.0 427.2 609.9 428.0 613.7 428.1" fill="none" stroke="#56ee7e" stroke-width="1.6"/>
<path d="M379.1 543.5 L377.8 522.8 L375.9 522.8 L373.9 518.9 L377.2 513.7 L395.3 507.9 L399.1 504.0 L383.6 500.8 L380.4 496.9 L377.8 489.1 L381.7 485.3 L405.6 488.5 L408.2 484.6 L396.6 485.3 L394.6 475.6 L399.8 470.4 L421.1 469.7 L425.0 466.5 L417.2 464.6 L414.7 456.8 L422.4 452.3 L440.5 453.6 L446.3 449.7 L440.5 442.6 L443.1 440.0 L445.5 437.5 L466.1 440.9 L473.2 437.3 L466.1 429.2 L476.9 425.2 L493.3 430.4 L501.0 427.7 L495.2 419.5 L506.4 416.6 L522.5 422.8 L530.4 420.7 L527.8 411.5 L539.7 410.0 L553.4 418.6 L561.8 417.5 L561.0 409.8 L572.5 409.8 L581.0 418.0 L589.1 418.0 L592.3 410.6 L603.5 410.9 L607.3 408.9" fill="none" stroke="#56ee7e" stroke-width="1.8" stroke-linejoin="round"/>
<path d="M444.3 443.5 L446.7 441.0 L467.3 444.4 L474.4 440.8 L467.3 432.7 L478.1 428.7 L494.5 433.9 L502.2 431.2 L496.4 423.0 L507.6 420.1 L523.7 426.3 L531.6 424.2 L529.0 415.0 L540.9 413.5 L554.6 422.1 L563.0 421.0 L562.2 413.3 L573.7 413.3 L582.2 421.5 L590.3 421.5 L593.5 414.1 L604.7 414.4 L608.5 412.4" fill="none" stroke="#56ee7e" stroke-width="1.2" stroke-linejoin="round" opacity="0.85"/>
<path d="M440.5 442.6 L446.3 449.7 L441.8 451.6z" fill="#d4fde8" stroke="#56ee7e" stroke-width="1.5" stroke-linejoin="round"/>
<path d="M417.2 460.7 L425.0 466.5 L418.5 468.4z" fill="#d4fde8" stroke="#56ee7e" stroke-width="1.5" stroke-linejoin="round"/>
<path d="M396.6 478.8 L408.2 484.6 L397.8 487.8z" fill="#d4fde8" stroke="#56ee7e" stroke-width="1.5" stroke-linejoin="round"/>
<path d="M384.3 500.8 L399.1 504.0 L386.2 510.5z" fill="#e8fff8" stroke="#56ee7e" stroke-width="1.5" stroke-linejoin="round"/>
<path d="M613.7 428.1 L621.6 430.0 L620.2 446.4 L611.0 455.6z" fill="#b4f6cc" stroke="#56ee7e" stroke-width="1.5" stroke-linejoin="round"/>
<path d="M607.3 408.9 L615.6 412.6 L622.0 419.0 L621.6 430.0" fill="none" stroke="#56ee7e" stroke-width="1.6" stroke-linejoin="round"/>
<path d="M615.6 412.6 L613.7 428.1" fill="none" stroke="#56ee7e" stroke-width="1.3"/>
<path d="M379.1 523.4 L395.3 525.3 L398.5 544.7 L381.0 542.8z" fill="#f0fffa" stroke="#56ee7e" stroke-width="1.6" stroke-linejoin="round"/>
<path d="M399.8 527.9 L420.5 524.1 L452.2 539.6 L401.7 547.3z" fill="#f0fffa" stroke="#56ee7e" stroke-width="1.6" stroke-linejoin="round"/>
<path d="M375.9 522.8 L395.3 524.7 L420.5 523.4" fill="none" stroke="#56ee7e" stroke-width="1.6" stroke-linejoin="round"/>
<path d="M395.3 524.7 L399.1 547.3 L401.7 549.9 L453.5 540.9" fill="none" stroke="#56ee7e" stroke-width="1.6" stroke-linejoin="round"/>
<path d="M379.1 543.5 L399.1 547.3" fill="none" stroke="#56ee7e" stroke-width="1.6"/>
<path d="M501.7 519.7 L542.6 510.7 L557.7 519.8 L560.7 536.4 L557.7 548.4 L550.2 550.7z" fill="none" stroke="#3aa050" stroke-width="2" stroke-linejoin="round"/>
<path d="M511.8 518.8 L555.5 540.9" fill="none" stroke="#3aa050" stroke-width="2" stroke-linejoin="round"/>
<path d="M566.8 507.4 L618.1 504.1" fill="none" stroke="#3aa050" stroke-width="2" stroke-linejoin="round"/>
<path d="M578.1 523.1 L624.1 517.1" fill="none" stroke="#3aa050" stroke-width="2" stroke-linejoin="round"/>
<path d="M624.1 518.3 L632.8 537.1" fill="none" stroke="#3aa050" stroke-width="2" stroke-linejoin="round"/>
<path d="M647.0 513.7 L653.7 534.9" fill="none" stroke="#3aa050" stroke-width="2" stroke-linejoin="round"/>
<path d="M632.8 543.2 L618.1 548.4 L610.5 556.7 L600.0 566.5 L625.6 558.2 L645.2 551.5" fill="none" stroke="#3aa050" stroke-width="2" stroke-linejoin="round"/>
<path d="M618.1 548.4 L628.6 554.5 L610.5 559.0" fill="none" stroke="#3aa050" stroke-width="2" stroke-linejoin="round"/>
<path d="M501.7 519.7 L556.2 538.6 L557.7 548.4 L550.2 550.7z" fill="none" stroke="#3aa050" stroke-width="2.6"/>
<path d="M618.1 549.2 L610.5 560.5 L625.6 556.0z" fill="#3aa050"/>
<ellipse cx="561.0" cy="516.2" rx="17" ry="9" transform="rotate(-6 561.0 516.2)" fill="#c4fcdd" stroke="#3aa050" stroke-width="2"/>
<ellipse cx="561.0" cy="516.2" rx="11.6" ry="6.1" transform="rotate(-6 561.0 516.2)" fill="none" stroke="#3aa050" stroke-width="1.6"/>
<ellipse cx="561.0" cy="516.2" rx="5.1" ry="2.7" fill="none" stroke="#3aa050" stroke-width="1.6"/>
<ellipse cx="631.3" cy="511.0" rx="15.5" ry="8" transform="rotate(-6 631.3 511.0)" fill="#c4fcdd" stroke="#3aa050" stroke-width="2"/>
<ellipse cx="631.3" cy="511.0" rx="10.5" ry="5.4" transform="rotate(-6 631.3 511.0)" fill="none" stroke="#3aa050" stroke-width="1.6"/>
<ellipse cx="631.3" cy="511.0" rx="4.6" ry="2.4" fill="none" stroke="#3aa050" stroke-width="1.6"/>
<ellipse cx="643.1" cy="540.9" rx="11" ry="9" transform="rotate(-6 643.1 540.9)" fill="#c4fcdd" stroke="#3aa050" stroke-width="2"/>
<ellipse cx="643.1" cy="540.9" rx="7.5" ry="6.1" transform="rotate(-6 643.1 540.9)" fill="none" stroke="#3aa050" stroke-width="1.6"/>
<ellipse cx="643.1" cy="540.9" rx="3.3" ry="2.7" fill="none" stroke="#3aa050" stroke-width="1.6"/>
<path d="M776.6 507.2 L818.8 527.5 L828.1 574.4 L684.4 690.0 L578.1 697.8 L514.1 646.2 L515.6 640.0 L526.6 635.3" fill="none" stroke="#3aa050" stroke-width="1.4" stroke-linejoin="round" stroke-linecap="round"/>
<defs><filter id="lb4" x="-30%" y="-30%" width="160%" height="160%"><feGaussianBlur stdDeviation="3.5"/></filter><clipPath id="lbowl"><path d="M571.9 604.1 L575.3 605.0 L580.0 606.4 L585.5 608.0 L591.6 609.6 L597.6 611.0 L603.1 611.9 L608.4 612.4 L613.7 612.6 L618.9 612.6 L624.2 612.4 L629.3 611.9 L634.4 611.2 L639.2 610.3 L644.0 609.2 L648.6 607.8 L653.2 606.2 L657.8 604.5 L662.5 602.5 L667.2 600.4 L671.9 598.0 L676.6 595.5 L681.2 592.8 L685.9 589.9 L690.6 586.9 L695.4 583.6 L700.2 579.9 L705.1 576.1 L709.8 572.3 L714.4 568.5 L718.8 565.0 L722.9 561.7 L726.9 558.4 L730.7 555.2 L734.3 552.2 L737.6 549.2 L740.6 546.2 L743.4 543.5 L745.8 540.8 L748.0 538.2 L750.0 535.7 L751.7 533.2 L753.1 530.6 L754.3 528.0 L755.2 525.4 L755.9 522.7 L756.2 520.1 L756.4 517.5 L756.2 515.0 L755.8 512.5 L755.0 510.0 L754.0 507.5 L752.8 505.1 L751.4 502.9 L750.0 500.9 L748.5 499.2 L746.8 497.7 L744.9 496.3 L743.0 495.2 L741.0 494.1 L739.1 493.1 L736.9 492.3 L734.5 491.6 L732.1 491.1 L729.9 490.6 L727.9 490.3 L726.6 490.0z"/></clipPath><clipPath id="lrib"><path d="M784.4 518.1 L786.1 518.6 L788.7 519.1 L791.6 519.8 L794.7 520.6 L797.6 521.6 L800.0 522.8 L802.0 524.2 L803.8 525.8 L805.5 527.6 L806.9 529.5 L808.2 531.6 L809.4 533.8 L810.4 536.0 L811.3 538.4 L812.0 540.9 L812.5 543.5 L812.7 546.4 L812.5 549.4 L811.9 552.7 L811.1 556.2 L809.9 559.9 L808.4 563.7 L806.7 567.5 L804.7 571.2 L802.4 575.0 L799.8 578.8 L797.0 582.6 L793.9 586.3 L790.7 589.8 L787.5 593.1 L784.1 596.1 L780.3 598.7 L776.5 601.1 L772.6 603.5 L769.0 606.0 L765.6 608.8 L762.7 611.7 L760.1 614.9 L757.6 618.1 L755.2 621.4 L752.7 624.5 L750.0 627.5 L747.1 630.3 L744.2 632.9 L741.2 635.5 L738.1 638.0 L734.8 640.6 L731.2 643.1 L727.5 645.8 L723.6 648.5 L719.5 651.2 L715.3 653.9 L710.9 656.4 L706.2 658.8 L701.5 660.9 L696.5 662.9 L691.4 664.7 L686.1 666.4 L680.6 668.1 L675.0 669.7 L669.2 671.2 L663.2 672.6 L657.0 674.0 L650.7 675.2 L644.2 676.4 L637.5 677.5 L630.1 678.5 L621.8 679.5 L613.3 680.3 L605.3 681.1 L598.6 681.7 L593.8 682.2 L543.8 643.1 L547.3 644.6 L552.2 646.8 L558.0 649.4 L564.5 651.9 L571.3 654.1 L578.1 655.6 L585.3 656.4 L593.2 656.8 L601.4 656.9 L609.6 656.7 L617.6 656.2 L625.0 655.6 L631.9 654.7 L638.7 653.5 L645.1 652.0 L651.3 650.5 L657.1 649.0 L662.5 647.8 L667.5 646.9 L672.2 646.2 L676.6 645.6 L680.6 644.9 L684.2 644.1 L687.5 643.1 L690.2 641.9 L692.4 640.7 L694.1 639.3 L695.8 637.7 L697.7 635.9 L700.0 633.8 L702.8 631.1 L706.0 628.1 L709.4 624.8 L712.7 621.4 L715.9 618.1 L718.8 615.0 L721.2 612.1 L723.3 609.3 L725.2 606.5 L727.1 603.9 L729.1 601.5 L731.2 599.4 L733.6 597.7 L736.1 596.4 L738.7 595.4 L741.3 594.3 L744.1 593.1 L746.9 591.6 L749.9 589.6 L753.1 587.3 L756.4 584.8 L759.7 582.3 L762.8 579.8 L765.6 577.5 L768.1 575.4 L770.4 573.6 L772.6 571.7 L774.5 569.8 L776.4 567.6 L778.1 565.0 L779.8 561.9 L781.5 558.4 L783.0 554.6 L784.3 550.8 L785.3 546.9 L785.9 543.1 L786.0 539.2 L785.6 535.0 L784.9 530.8 L784.0 526.9 L783.3 523.6 L782.8 521.2z"/></clipPath></defs>
<path d="M784.4 518.1 L786.1 518.6 L788.7 519.1 L791.6 519.8 L794.7 520.6 L797.6 521.6 L800.0 522.8 L802.0 524.2 L803.8 525.8 L805.5 527.6 L806.9 529.5 L808.2 531.6 L809.4 533.8 L810.4 536.0 L811.3 538.4 L812.0 540.9 L812.5 543.5 L812.7 546.4 L812.5 549.4 L811.9 552.7 L811.1 556.2 L809.9 559.9 L808.4 563.7 L806.7 567.5 L804.7 571.2 L802.4 575.0 L799.8 578.8 L797.0 582.6 L793.9 586.3 L790.7 589.8 L787.5 593.1 L784.1 596.1 L780.3 598.7 L776.5 601.1 L772.6 603.5 L769.0 606.0 L765.6 608.8 L762.7 611.7 L760.1 614.9 L757.6 618.1 L755.2 621.4 L752.7 624.5 L750.0 627.5 L747.1 630.3 L744.2 632.9 L741.2 635.5 L738.1 638.0 L734.8 640.6 L731.2 643.1 L727.5 645.8 L723.6 648.5 L719.5 651.2 L715.3 653.9 L710.9 656.4 L706.2 658.8 L701.5 660.9 L696.5 662.9 L691.4 664.7 L686.1 666.4 L680.6 668.1 L675.0 669.7 L669.2 671.2 L663.2 672.6 L657.0 674.0 L650.7 675.2 L644.2 676.4 L637.5 677.5 L630.1 678.5 L621.8 679.5 L613.3 680.3 L605.3 681.1 L598.6 681.7 L593.8 682.2 L543.8 643.1 L547.3 644.6 L552.2 646.8 L558.0 649.4 L564.5 651.9 L571.3 654.1 L578.1 655.6 L585.3 656.4 L593.2 656.8 L601.4 656.9 L609.6 656.7 L617.6 656.2 L625.0 655.6 L631.9 654.7 L638.7 653.5 L645.1 652.0 L651.3 650.5 L657.1 649.0 L662.5 647.8 L667.5 646.9 L672.2 646.2 L676.6 645.6 L680.6 644.9 L684.2 644.1 L687.5 643.1 L690.2 641.9 L692.4 640.7 L694.1 639.3 L695.8 637.7 L697.7 635.9 L700.0 633.8 L702.8 631.1 L706.0 628.1 L709.4 624.8 L712.7 621.4 L715.9 618.1 L718.8 615.0 L721.2 612.1 L723.3 609.3 L725.2 606.5 L727.1 603.9 L729.1 601.5 L731.2 599.4 L733.6 597.7 L736.1 596.4 L738.7 595.4 L741.3 594.3 L744.1 593.1 L746.9 591.6 L749.9 589.6 L753.1 587.3 L756.4 584.8 L759.7 582.3 L762.8 579.8 L765.6 577.5 L768.1 575.4 L770.4 573.6 L772.6 571.7 L774.5 569.8 L776.4 567.6 L778.1 565.0 L779.8 561.9 L781.5 558.4 L783.0 554.6 L784.3 550.8 L785.3 546.9 L785.9 543.1 L786.0 539.2 L785.6 535.0 L784.9 530.8 L784.0 526.9 L783.3 523.6 L782.8 521.2z" fill="#c4fcdd"/>
<g clip-path="url(#lrib)">
<path d="M718.8 615.0 L739.1 607.2 L753.1 627.5 L731.2 636.9z" fill="#f4fffb" filter="url(#lb4)"/>
<path d="M767.2 577.5 L782.8 569.7 L798.4 580.6 L784.4 591.6z" fill="#f4fffb" filter="url(#lb4)"/>
<path d="M571.9 655.6 L603.1 672.8 L631.2 666.6 L593.8 652.5z" fill="#f4fffb" filter="url(#lb4)"/>
<path d="M782.8 522.8 L800.0 530.6 L807.8 544.7 L789.1 543.1z" fill="#f4fffb" filter="url(#lb4)"/>
<path d="M675.0 652.5 L700.0 643.1 L706.2 655.6 L681.2 665.0z" fill="#f4fffb" filter="url(#lb4)"/>
<path d="M737.5 593.1 L759.4 586.9 L771.9 602.5 L750.0 615.0z" fill="#8ee8aa" filter="url(#lb4)" opacity="0.8"/>
<path d="M684.4 640.0 L700.0 635.3 L712.5 655.6 L696.9 658.8z" fill="#8ee8aa" filter="url(#lb4)" opacity="0.8"/>
</g>
<path d="M784.4 518.1 L786.1 518.6 L788.7 519.1 L791.6 519.8 L794.7 520.6 L797.6 521.6 L800.0 522.8 L802.0 524.2 L803.8 525.8 L805.5 527.6 L806.9 529.5 L808.2 531.6 L809.4 533.8 L810.4 536.0 L811.3 538.4 L812.0 540.9 L812.5 543.5 L812.7 546.4 L812.5 549.4 L811.9 552.7 L811.1 556.2 L809.9 559.9 L808.4 563.7 L806.7 567.5 L804.7 571.2 L802.4 575.0 L799.8 578.8 L797.0 582.6 L793.9 586.3 L790.7 589.8 L787.5 593.1 L784.1 596.1 L780.3 598.7 L776.5 601.1 L772.6 603.5 L769.0 606.0 L765.6 608.8 L762.7 611.7 L760.1 614.9 L757.6 618.1 L755.2 621.4 L752.7 624.5 L750.0 627.5 L747.1 630.3 L744.2 632.9 L741.2 635.5 L738.1 638.0 L734.8 640.6 L731.2 643.1 L727.5 645.8 L723.6 648.5 L719.5 651.2 L715.3 653.9 L710.9 656.4 L706.2 658.8 L701.5 660.9 L696.5 662.9 L691.4 664.7 L686.1 666.4 L680.6 668.1 L675.0 669.7 L669.2 671.2 L663.2 672.6 L657.0 674.0 L650.7 675.2 L644.2 676.4 L637.5 677.5 L630.1 678.5 L621.8 679.5 L613.3 680.3 L605.3 681.1 L598.6 681.7 L593.8 682.2 L543.8 643.1 L547.3 644.6 L552.2 646.8 L558.0 649.4 L564.5 651.9 L571.3 654.1 L578.1 655.6 L585.3 656.4 L593.2 656.8 L601.4 656.9 L609.6 656.7 L617.6 656.2 L625.0 655.6 L631.9 654.7 L638.7 653.5 L645.1 652.0 L651.3 650.5 L657.1 649.0 L662.5 647.8 L667.5 646.9 L672.2 646.2 L676.6 645.6 L680.6 644.9 L684.2 644.1 L687.5 643.1 L690.2 641.9 L692.4 640.7 L694.1 639.3 L695.8 637.7 L697.7 635.9 L700.0 633.8 L702.8 631.1 L706.0 628.1 L709.4 624.8 L712.7 621.4 L715.9 618.1 L718.8 615.0 L721.2 612.1 L723.3 609.3 L725.2 606.5 L727.1 603.9 L729.1 601.5 L731.2 599.4 L733.6 597.7 L736.1 596.4 L738.7 595.4 L741.3 594.3 L744.1 593.1 L746.9 591.6 L749.9 589.6 L753.1 587.3 L756.4 584.8 L759.7 582.3 L762.8 579.8 L765.6 577.5 L768.1 575.4 L770.4 573.6 L772.6 571.7 L774.5 569.8 L776.4 567.6 L778.1 565.0 L779.8 561.9 L781.5 558.4 L783.0 554.6 L784.3 550.8 L785.3 546.9 L785.9 543.1 L786.0 539.2 L785.6 535.0 L784.9 530.8 L784.0 526.9 L783.3 523.6 L782.8 521.2z" fill="none" stroke="#56ee7e" stroke-width="1.7" stroke-linejoin="round"/>
<path d="M785.9 543.1 L810.9 552.5" fill="none" stroke="#56ee7e" stroke-width="1.7" stroke-linejoin="round" stroke-linecap="round"/>
<path d="M778.1 565.0 L801.6 575.9" fill="none" stroke="#56ee7e" stroke-width="1.7" stroke-linejoin="round" stroke-linecap="round"/>
<path d="M765.6 577.5 L782.8 596.2" fill="none" stroke="#56ee7e" stroke-width="1.7" stroke-linejoin="round" stroke-linecap="round"/>
<path d="M746.9 591.6 L768.8 607.2" fill="none" stroke="#56ee7e" stroke-width="1.7" stroke-linejoin="round" stroke-linecap="round"/>
<path d="M731.2 599.4 L756.2 611.9" fill="none" stroke="#56ee7e" stroke-width="1.7" stroke-linejoin="round" stroke-linecap="round"/>
<path d="M718.8 615.0 L746.9 630.6" fill="none" stroke="#56ee7e" stroke-width="1.7" stroke-linejoin="round" stroke-linecap="round"/>
<path d="M700.0 633.8 L715.6 655.6" fill="none" stroke="#56ee7e" stroke-width="1.7" stroke-linejoin="round" stroke-linecap="round"/>
<path d="M687.5 643.1 L703.1 660.3" fill="none" stroke="#56ee7e" stroke-width="1.7" stroke-linejoin="round" stroke-linecap="round"/>
<path d="M662.5 647.8 L687.5 665.0" fill="none" stroke="#56ee7e" stroke-width="1.7" stroke-linejoin="round" stroke-linecap="round"/>
<path d="M621.9 655.6 L646.9 675.9" fill="none" stroke="#56ee7e" stroke-width="1.7" stroke-linejoin="round" stroke-linecap="round"/>
<path d="M792.2 530.6 C794.3 533.2 803.9 539.0 804.7 546.2 C805.5 553.5 801.3 566.0 796.9 574.4 C792.4 582.7 784.9 589.2 778.1 596.2 C771.4 603.3 763.0 610.1 756.2 616.6 C749.5 623.1 744.8 629.3 737.5 635.3 C730.2 641.3 722.4 647.8 712.5 652.5 C702.6 657.2 690.1 660.3 678.1 663.4 C666.1 666.6 654.2 668.9 640.6 671.2 C627.1 673.6 604.2 676.5 596.9 677.5" fill="none" stroke="#56ee7e" stroke-width="1.2" stroke-linejoin="round" stroke-linecap="round"/>
<path d="M526.6 622.8 L530.0 624.8 L534.8 627.6 L540.4 630.8 L546.6 634.2 L553.1 637.4 L559.4 640.0 L565.7 642.2 L572.3 644.1 L579.2 645.9 L586.2 647.4 L593.1 648.6 L600.0 649.4 L606.8 649.8 L613.8 649.8 L620.7 649.4 L627.5 648.8 L634.2 648.0 L640.6 646.9 L646.8 645.5 L652.9 643.8 L658.8 641.8 L664.5 639.7 L669.9 637.5 L675.0 635.3 L680.0 633.0 L685.0 630.3 L689.6 627.6 L693.9 625.0 L697.4 622.8 L700.0 621.2 L693.8 633.8 L691.1 635.3 L687.4 637.6 L683.0 640.2 L678.2 643.0 L673.4 645.6 L668.8 647.8 L664.4 649.7 L660.1 651.5 L655.7 653.2 L651.0 654.7 L646.1 656.0 L640.6 657.2 L634.6 658.2 L628.0 659.1 L621.1 659.8 L614.0 660.3 L606.9 660.5 L600.0 660.3 L593.1 659.8 L586.2 658.9 L579.2 657.7 L572.3 656.2 L565.7 654.5 L559.4 652.5 L553.1 650.0 L546.6 646.8 L540.4 643.4 L534.8 640.1 L530.0 637.3 L526.6 635.3z" fill="#e6fff4" stroke="#56ee7e" stroke-width="1.7" stroke-linejoin="round"/>
<path d="M531.2 619.7 L534.6 621.3 L539.1 623.6 L544.5 626.2 L550.5 629.0 L556.6 631.6 L562.5 633.8 L568.4 635.5 L574.5 637.2 L580.8 638.6 L587.2 639.9 L593.6 640.9 L600.0 641.6 L606.5 642.0 L613.1 642.1 L619.8 642.1 L626.4 641.7 L632.9 641.0 L639.1 640.0 L644.9 638.6 L650.5 636.9 L656.0 634.8 L661.3 632.5 L666.6 630.1 L671.9 627.5 L677.5 624.5 L683.6 621.0 L689.6 617.3 L695.1 613.8 L699.7 610.9 L703.1 608.8 L700.0 621.2 L697.4 622.8 L693.9 625.0 L689.6 627.6 L685.0 630.3 L680.0 633.0 L675.0 635.3 L669.9 637.5 L664.5 639.7 L658.8 641.8 L652.9 643.8 L646.8 645.5 L640.6 646.9 L634.2 648.0 L627.5 648.8 L620.7 649.4 L613.8 649.8 L606.8 649.8 L600.0 649.4 L593.1 648.6 L586.2 647.4 L579.2 645.9 L572.3 644.1 L565.7 642.2 L559.4 640.0 L553.1 637.4 L546.6 634.2 L540.4 630.8 L534.8 627.6 L530.0 624.8 L526.6 622.8z" fill="#c4fcdd" stroke="#56ee7e" stroke-width="1.7" stroke-linejoin="round"/>
<path d="M532.8 608.8 L536.0 610.4 L540.2 612.6 L545.3 615.3 L550.9 618.1 L556.8 620.7 L562.5 622.8 L568.3 624.6 L574.4 626.2 L580.8 627.7 L587.2 628.9 L593.7 629.9 L600.0 630.6 L606.3 631.0 L612.7 631.1 L619.1 631.0 L625.5 630.6 L631.6 630.0 L637.5 629.1 L643.1 627.9 L648.4 626.4 L653.5 624.7 L658.6 622.7 L663.6 620.5 L668.8 618.1 L674.0 615.5 L679.2 612.6 L684.4 609.4 L689.6 606.1 L694.8 602.8 L700.0 599.4 L705.2 595.9 L710.5 592.3 L715.8 588.6 L721.1 584.9 L726.2 581.2 L731.2 577.5 L736.3 573.9 L741.3 570.2 L746.3 566.6 L751.0 562.9 L755.4 559.3 L759.4 555.6 L762.9 551.9 L766.0 548.2 L768.8 544.5 L771.3 540.8 L773.4 537.2 L775.0 533.8 L776.2 530.4 L776.9 527.1 L777.2 523.9 L777.3 520.8 L777.0 517.8 L776.6 515.0 L775.9 512.3 L774.9 509.8 L773.7 507.5 L772.3 505.2 L770.6 503.0 L768.8 500.9 L766.6 498.9 L764.1 496.8 L761.3 494.9 L758.5 493.1 L755.7 491.4 L753.1 490.0 L750.7 488.7 L748.3 487.6 L745.9 486.7 L743.6 485.9 L741.3 485.5 L739.1 485.3 L736.7 485.6 L734.3 486.4 L731.9 487.4 L729.7 488.4 L727.9 489.4 L726.6 490.0 L771.9 500.9 L773.0 502.6 L774.7 504.8 L776.7 507.5 L778.6 510.4 L780.2 513.5 L781.2 516.6 L781.8 519.6 L782.1 522.8 L782.1 526.1 L781.8 529.6 L781.0 533.2 L779.7 536.9 L777.9 540.8 L775.5 544.9 L772.8 549.2 L769.6 553.5 L766.2 557.7 L762.5 561.9 L758.5 565.9 L754.1 569.8 L749.3 573.7 L744.4 577.6 L739.4 581.4 L734.4 585.3 L729.3 589.3 L724.2 593.3 L718.9 597.3 L713.7 601.3 L708.4 605.1 L703.1 608.8 L697.9 612.2 L692.8 615.6 L687.6 618.8 L682.4 621.9 L677.2 624.8 L671.9 627.5 L666.6 630.1 L661.3 632.5 L656.0 634.8 L650.5 636.9 L644.9 638.6 L639.1 640.0 L632.9 641.0 L626.4 641.7 L619.8 642.1 L613.1 642.1 L606.5 642.0 L600.0 641.6 L593.6 640.9 L587.2 639.9 L580.8 638.6 L574.5 637.2 L568.4 635.5 L562.5 633.8 L556.6 631.6 L550.5 629.0 L544.5 626.2 L539.1 623.6 L534.6 621.3 L531.2 619.7z" fill="#dcfff0" stroke="#56ee7e" stroke-width="1.7" stroke-linejoin="round"/>
<path d="M532.8 608.8 L531.2 619.7 L526.6 622.8 L526.6 635.3 L515.6 640.0" fill="none" stroke="#56ee7e" stroke-width="1.7" stroke-linejoin="round" stroke-linecap="round"/>
<path d="M543.8 643.1 L526.6 635.3" fill="none" stroke="#56ee7e" stroke-width="1.7" stroke-linejoin="round" stroke-linecap="round"/>
<path d="M700.0 621.2 L718.8 615.0" fill="none" stroke="#56ee7e" stroke-width="1.7" stroke-linejoin="round" stroke-linecap="round"/>
<path d="M693.8 633.8 L700.0 633.8" fill="none" stroke="#56ee7e" stroke-width="1.7" stroke-linejoin="round" stroke-linecap="round"/>
<path d="M700.0 599.4 L703.1 608.8 L700.0 621.2 L693.8 633.8" fill="none" stroke="#56ee7e" stroke-width="1.7" stroke-linejoin="round" stroke-linecap="round"/>
<path d="M532.8 608.8 L536.0 610.4 L540.2 612.6 L545.3 615.3 L550.9 618.1 L556.8 620.7 L562.5 622.8 L568.3 624.6 L574.4 626.2 L580.8 627.7 L587.2 628.9 L593.7 629.9 L600.0 630.6 L606.3 631.0 L612.7 631.1 L619.1 631.0 L625.5 630.6 L631.6 630.0 L637.5 629.1 L643.1 627.9 L648.4 626.4 L653.5 624.7 L658.6 622.7 L663.6 620.5 L668.8 618.1 L674.0 615.5 L679.2 612.6 L684.4 609.4 L689.6 606.1 L694.8 602.8 L700.0 599.4 L705.2 595.9 L710.5 592.3 L715.8 588.6 L721.1 584.9 L726.2 581.2 L731.2 577.5 L736.3 573.9 L741.3 570.2 L746.3 566.6 L751.0 562.9 L755.4 559.3 L759.4 555.6 L762.9 551.9 L766.0 548.2 L768.8 544.5 L771.3 540.8 L773.4 537.2 L775.0 533.8 L776.2 530.4 L776.9 527.1 L777.2 523.9 L777.3 520.8 L777.0 517.8 L776.6 515.0 L775.9 512.3 L774.9 509.8 L773.7 507.5 L772.3 505.2 L770.6 503.0 L768.8 500.9 L766.6 498.9 L764.1 496.8 L761.3 494.9 L758.5 493.1 L755.7 491.4 L753.1 490.0 L750.7 488.7 L748.3 487.6 L745.9 486.7 L743.6 485.9 L741.3 485.5 L739.1 485.3 L736.7 485.6 L734.3 486.4 L731.9 487.4 L729.7 488.4 L727.9 489.4 L726.6 490.0 L726.6 490.0 L727.9 490.3 L729.9 490.6 L732.1 491.1 L734.5 491.6 L736.9 492.3 L739.1 493.1 L741.0 494.1 L743.0 495.2 L744.9 496.3 L746.8 497.7 L748.5 499.2 L750.0 500.9 L751.4 502.9 L752.8 505.1 L754.0 507.5 L755.0 510.0 L755.8 512.5 L756.2 515.0 L756.4 517.5 L756.2 520.1 L755.9 522.7 L755.2 525.4 L754.3 528.0 L753.1 530.6 L751.7 533.2 L750.0 535.7 L748.0 538.2 L745.8 540.8 L743.4 543.5 L740.6 546.2 L737.6 549.2 L734.3 552.2 L730.7 555.2 L726.9 558.4 L722.9 561.7 L718.8 565.0 L714.4 568.5 L709.8 572.3 L705.1 576.1 L700.2 579.9 L695.4 583.6 L690.6 586.9 L685.9 589.9 L681.2 592.8 L676.6 595.5 L671.9 598.0 L667.2 600.4 L662.5 602.5 L657.8 604.5 L653.2 606.2 L648.6 607.8 L644.0 609.2 L639.2 610.3 L634.4 611.2 L629.3 611.9 L624.2 612.4 L618.9 612.6 L613.7 612.6 L608.4 612.4 L603.1 611.9 L597.6 611.0 L591.6 609.6 L585.5 608.0 L580.0 606.4 L575.3 605.0 L571.9 604.1 L550.0 597.8z" fill="#c4fcdd" stroke="#56ee7e" stroke-width="1.7" stroke-linejoin="round"/>
<path d="M571.9 604.1 L575.3 605.0 L580.0 606.4 L585.5 608.0 L591.6 609.6 L597.6 611.0 L603.1 611.9 L608.4 612.4 L613.7 612.6 L618.9 612.6 L624.2 612.4 L629.3 611.9 L634.4 611.2 L639.2 610.3 L644.0 609.2 L648.6 607.8 L653.2 606.2 L657.8 604.5 L662.5 602.5 L667.2 600.4 L671.9 598.0 L676.6 595.5 L681.2 592.8 L685.9 589.9 L690.6 586.9 L695.4 583.6 L700.2 579.9 L705.1 576.1 L709.8 572.3 L714.4 568.5 L718.8 565.0 L722.9 561.7 L726.9 558.4 L730.7 555.2 L734.3 552.2 L737.6 549.2 L740.6 546.2 L743.4 543.5 L745.8 540.8 L748.0 538.2 L750.0 535.7 L751.7 533.2 L753.1 530.6 L754.3 528.0 L755.2 525.4 L755.9 522.7 L756.2 520.1 L756.4 517.5 L756.2 515.0 L755.8 512.5 L755.0 510.0 L754.0 507.5 L752.8 505.1 L751.4 502.9 L750.0 500.9 L748.5 499.2 L746.8 497.7 L744.9 496.3 L743.0 495.2 L741.0 494.1 L739.1 493.1 L736.9 492.3 L734.5 491.6 L732.1 491.1 L729.9 490.6 L727.9 490.3 L726.6 490.0z" fill="#c4fcdd"/>
<g clip-path="url(#lbowl)">
<path d="M726.6 490.0 L727.9 490.3 L729.9 490.6 L732.1 491.1 L734.5 491.6 L736.9 492.3 L739.1 493.1 L741.0 494.1 L743.0 495.2 L744.9 496.3 L746.8 497.7 L748.5 499.2 L750.0 500.9 L751.4 502.9 L752.8 505.1 L754.0 507.5 L755.0 510.0 L755.8 512.5 L756.2 515.0 L756.4 517.5 L756.2 520.1 L755.9 522.7 L755.2 525.4 L754.3 528.0 L753.1 530.6 L751.7 533.2 L750.0 535.7 L748.0 538.2 L745.8 540.8 L743.4 543.5 L740.6 546.2 L737.6 549.2 L734.3 552.2 L730.7 555.2 L726.9 558.4 L722.9 561.7 L718.8 565.0 L714.4 568.5 L709.8 572.3 L705.1 576.1 L700.2 579.9 L695.4 583.6 L690.6 586.9 L685.6 590.0 L680.2 593.1 L674.8 596.1 L669.8 598.7 L665.6 600.9 L662.5 602.5 L656.2 597.8 L659.3 596.2 L663.5 594.0 L668.6 591.4 L674.0 588.4 L679.4 585.3 L684.4 582.2 L689.1 578.9 L694.0 575.2 L698.9 571.4 L703.6 567.6 L708.2 563.8 L712.5 560.3 L716.6 557.0 L720.5 553.7 L724.2 550.4 L727.6 547.3 L730.8 544.4 L733.8 541.6 L736.3 538.9 L738.6 536.5 L740.7 534.1 L742.4 531.9 L744.0 529.7 L745.3 527.5 L746.4 525.3 L747.3 523.2 L747.9 521.1 L748.3 519.0 L748.5 517.0 L748.4 515.0 L748.1 513.0 L747.4 511.1 L746.6 509.1 L745.5 507.3 L744.3 505.6 L743.1 504.1 L741.8 502.7 L740.3 501.5 L738.7 500.4 L737.0 499.4 L735.3 498.6 L733.8 497.8 L732.2 497.2 L730.5 496.7 L728.8 496.3 L727.2 496.0 L725.9 495.8 L725.0 495.6z" fill="#7ade98" filter="url(#lb4)"/>
<path d="M726.6 496.2 L739.1 501.9 L744.4 515.0 L735.9 532.2 L720.3 540.0 L710.0 529.1 L715.6 510.3z" fill="#eefff8" filter="url(#lb4)"/>
<path d="M631.2 590.0 L675.0 565.0 L700.0 571.2 L675.0 596.2 L637.5 608.8z" fill="#e4fff5" filter="url(#lb4)"/>
<path d="M578.1 604.1 L603.1 586.9 L625.0 593.1 L603.1 611.2z" fill="#a4f0bc" filter="url(#lb4)"/>
</g>
<path d="M571.9 604.1 L575.3 605.0 L580.0 606.4 L585.5 608.0 L591.6 609.6 L597.6 611.0 L603.1 611.9 L608.4 612.4 L613.7 612.6 L618.9 612.6 L624.2 612.4 L629.3 611.9 L634.4 611.2 L639.2 610.3 L644.0 609.2 L648.6 607.8 L653.2 606.2 L657.8 604.5 L662.5 602.5 L667.2 600.4 L671.9 598.0 L676.6 595.5 L681.2 592.8 L685.9 589.9 L690.6 586.9 L695.4 583.6 L700.2 579.9 L705.1 576.1 L709.8 572.3 L714.4 568.5 L718.8 565.0 L722.9 561.7 L726.9 558.4 L730.7 555.2 L734.3 552.2 L737.6 549.2 L740.6 546.2 L743.4 543.5 L745.8 540.8 L748.0 538.2 L750.0 535.7 L751.7 533.2 L753.1 530.6 L754.3 528.0 L755.2 525.4 L755.9 522.7 L756.2 520.1 L756.4 517.5 L756.2 515.0 L755.8 512.5 L755.0 510.0 L754.0 507.5 L752.8 505.1 L751.4 502.9 L750.0 500.9 L748.5 499.2 L746.8 497.7 L744.9 496.3 L743.0 495.2 L741.0 494.1 L739.1 493.1 L736.9 492.3 L734.5 491.6 L732.1 491.1 L729.9 490.6 L727.9 490.3 L726.6 490.0z" fill="none" stroke="#56ee7e" stroke-width="1.7" stroke-linejoin="round"/>
<path d="M550.0 597.8 L571.9 604.1" fill="none" stroke="#56ee7e" stroke-width="1.7" stroke-linejoin="round" stroke-linecap="round"/>
<path d="M550.0 597.8 L532.8 608.8" fill="none" stroke="#56ee7e" stroke-width="1.7" stroke-linejoin="round" stroke-linecap="round"/>
<path d="M690.6 535.3 L700.0 544.7 L693.8 549.4" fill="none" stroke="#56ee7e" stroke-width="1.7" stroke-linejoin="round" stroke-linecap="round"/>
<path d="M693.8 549.4 C696.4 550.9 703.6 556.9 709.4 558.8 C715.1 560.6 721.9 562.7 728.1 560.3 C734.4 558.0 743.8 547.3 746.9 544.7" fill="none" stroke="#56ee7e" stroke-width="1.7" stroke-linejoin="round" stroke-linecap="round"/>
<path d="M693.8 549.4 L620.3 591.6" fill="none" stroke="#56ee7e" stroke-width="1.7" stroke-linejoin="round" stroke-linecap="round"/>
<path d="M596.9 590.0 C598.7 590.8 603.9 594.4 607.8 594.7 C611.7 594.9 618.2 592.1 620.3 591.6" fill="none" stroke="#56ee7e" stroke-width="1.7" stroke-linejoin="round" stroke-linecap="round"/>
<path d="M620.3 591.6 C622.1 593.4 626.8 599.4 631.2 602.5 C635.7 605.6 644.3 609.0 646.9 610.3" fill="none" stroke="#56ee7e" stroke-width="1.7" stroke-linejoin="round" stroke-linecap="round"/>
<ellipse cx="548.4" cy="605.6" rx="3.4" ry="2.6" transform="rotate(-10 548.4 605.6)" fill="#e4fff4" stroke="#56ee7e" stroke-width="1.3"/>
<ellipse cx="572.5" cy="616.6" rx="3.4" ry="2.6" transform="rotate(-10 572.5 616.6)" fill="#e4fff4" stroke="#56ee7e" stroke-width="1.3"/>
<ellipse cx="600.6" cy="621.2" rx="3.4" ry="2.6" transform="rotate(-10 600.6 621.2)" fill="#e4fff4" stroke="#56ee7e" stroke-width="1.3"/>
<ellipse cx="630.6" cy="620.6" rx="3.4" ry="2.6" transform="rotate(-10 630.6 620.6)" fill="#e4fff4" stroke="#56ee7e" stroke-width="1.3"/>
<ellipse cx="658.8" cy="613.4" rx="3.4" ry="2.6" transform="rotate(-10 658.8 613.4)" fill="#e4fff4" stroke="#56ee7e" stroke-width="1.3"/>
<ellipse cx="680.6" cy="602.5" rx="3.4" ry="2.6" transform="rotate(-10 680.6 602.5)" fill="#e4fff4" stroke="#56ee7e" stroke-width="1.3"/>
<ellipse cx="698.8" cy="590.6" rx="3.4" ry="2.6" transform="rotate(-10 698.8 590.6)" fill="#e4fff4" stroke="#56ee7e" stroke-width="1.3"/>
<ellipse cx="716.2" cy="577.5" rx="3.4" ry="2.6" transform="rotate(-10 716.2 577.5)" fill="#e4fff4" stroke="#56ee7e" stroke-width="1.3"/>
<ellipse cx="732.8" cy="566.6" rx="3.4" ry="2.6" transform="rotate(-10 732.8 566.6)" fill="#e4fff4" stroke="#56ee7e" stroke-width="1.3"/>
<ellipse cx="748.4" cy="555.6" rx="3.4" ry="2.6" transform="rotate(-10 748.4 555.6)" fill="#e4fff4" stroke="#56ee7e" stroke-width="1.3"/>
<ellipse cx="760.9" cy="541.6" rx="3.4" ry="2.6" transform="rotate(-10 760.9 541.6)" fill="#e4fff4" stroke="#56ee7e" stroke-width="1.3"/>
<ellipse cx="766.2" cy="527.5" rx="3.4" ry="2.6" transform="rotate(-10 766.2 527.5)" fill="#e4fff4" stroke="#56ee7e" stroke-width="1.3"/>
<ellipse cx="764.1" cy="513.4" rx="3.4" ry="2.6" transform="rotate(-10 764.1 513.4)" fill="#e4fff4" stroke="#56ee7e" stroke-width="1.3"/>
<ellipse cx="753.8" cy="499.4" rx="3.4" ry="2.6" transform="rotate(-10 753.8 499.4)" fill="#e4fff4" stroke="#56ee7e" stroke-width="1.3"/>
<ellipse cx="738.1" cy="489.1" rx="3.4" ry="2.6" transform="rotate(-10 738.1 489.1)" fill="#e4fff4" stroke="#56ee7e" stroke-width="1.3"/>
</svg>
<svg id="Lnav" width="957" height="928" viewBox="0 0 957 928" style="left:0;top:0">
<path d="M884.8 136.5 L873.4 149.4 L896.8 149.4z" fill="#8d9aa6"/>
<path d="M884.8 267.7 L873.0 254.5 L896.8 254.5z" fill="#8d9aa6"/>
<path d="M819.4 201.9 L832.6 190.3 L832.6 213.6z" fill="#8d9aa6"/>
<path d="M950.6 201.9 L937.7 190.3 L937.7 213.6z" fill="#8d9aa6"/>
<circle cx="942.2" cy="144.5" r="6.2" fill="#8d9aa6"/>
<path d="M865.8 143.3 L867.9 150.7 Q855.3 154.2 846.4 163.1 L848.8 167.5 L835.9 170.4 L838.3 156.7 L840.7 159.1 Q850.4 147.8 865.8 143.3z" fill="#8d9aa6"/>
<path d="M903.9 143.3 L901.8 150.7 Q914.4 154.2 923.3 163.1 L920.9 167.5 L933.8 170.4 L931.4 156.7 L929.0 159.1 Q919.3 147.8 903.9 143.3z" fill="#8d9aa6"/>
<path d="M856.9 172.8 L884.3 165.6 L913.4 172.8 L923.1 190.6 L917.5 223.7 L890.8 241.5 L879.5 241.5 L852.8 224.6 L847.2 191.4z" fill="#8a97a3" stroke="#59636c" stroke-width="0.8" stroke-linejoin="round"/>
<path d="M856.9 172.8 L850.4 186.6 L872.2 201.1 L877.9 190.6 L856.9 178.5" fill="none" stroke="#3c444c" stroke-width="0.7" stroke-linejoin="round"/>
<path d="M913.4 172.8 L916.7 178.5 L892.4 190.6" fill="none" stroke="#3c444c" stroke-width="0.7" stroke-linejoin="round"/>
<path d="M877.9 190.6 L892.4 190.6 L898.1 201.1 L890.8 213.2 L879.5 213.2 L872.2 201.1" fill="none" stroke="#3c444c" stroke-width="0.7" stroke-linejoin="round"/>
<path d="M898.1 201.1 L921.5 188.2" fill="none" stroke="#3c444c" stroke-width="0.7" stroke-linejoin="round"/>
<path d="M850.4 186.6 L847.2 191.4" fill="none" stroke="#3c444c" stroke-width="0.7" stroke-linejoin="round"/>
<path d="M879.5 213.2 L879.5 241.5" fill="none" stroke="#3c444c" stroke-width="0.7" stroke-linejoin="round"/>
<path d="M890.8 213.2 L890.8 241.5" fill="none" stroke="#3c444c" stroke-width="0.7" stroke-linejoin="round"/>
<path d="M856.9 178.5 L877.9 190.6" fill="none" stroke="#3c444c" stroke-width="0.7" stroke-linejoin="round"/>
<text x="0" y="0" font-family="Liberation Sans, sans-serif" font-size="7.5" fill="#6f7b86" text-anchor="middle" transform="translate(885.6 177.2) rotate(22) skewX(-25)">TOP</text>
<text x="863.3" y="217.3" font-family="Liberation Sans, sans-serif" font-size="7" fill="#6f7b86" text-anchor="middle" transform="rotate(30 863.3 217.3)">FRONT</text>
<text x="907.8" y="218.1" font-family="Liberation Sans, sans-serif" font-size="7.5" fill="#6f7b86" text-anchor="middle" transform="rotate(-32 907.8 218.1)">RIGHT</text>
<path d="M838.3 189.8 L845.2 224.6" stroke="#1a1ad0" stroke-width="1.6"/>
<path d="M845.2 224.6 L876.3 207.3" stroke="#5ae070" stroke-width="1.2"/>
<path d="M845.2 224.6 L872.2 249.3" stroke="#c01818" stroke-width="1.2"/>
<path d="M929.6 239.9 L939.3 243.9 L939.3 254.5 L929.6 258.5 L919.9 254.5 L919.9 243.9z" fill="#8f9ca8" stroke="#59636c" stroke-width="0.7"/>
<path d="M919.9 243.9 L929.6 247.2 L939.3 243.9 M929.6 247.2L929.6 258.5" fill="none" stroke="#4a525a" stroke-width="0.7"/>
<path d="M921.5 898.6 L921.5 875.2" stroke="#1c1c98" stroke-width="1.3"/><path d="M919.0 884.5 L924.0 884.5 L922.8 878.2 L921.5 875.2 L920.3 878.2z" fill="#1c1c98"/>
<path d="M921.5 898.6 L935.8 890.3" stroke="#1c981c" stroke-width="1.3"/><path d="M930.3 891.2 L933.7 894.1 L936.1 890.2 L932.0 890.2z" fill="#1c981c"/>
<path d="M921.5 898.6 L940.8 909.7" stroke="#901c1c" stroke-width="1.4"/><path d="M932.4 907.6 L935.8 904.2 L938.3 906.3 L940.8 909.8 L937.1 908.8z" fill="#901c1c"/>
<text x="922.8" y="873.7" font-family="Liberation Sans, sans-serif" font-size="9.5" fill="#0a0a0a">Z</text>
<text x="937.1" y="888.7" font-family="Liberation Sans, sans-serif" font-size="9.5" fill="#0a0a0a">Y</text>
<text x="942.9" y="909.7" font-family="Liberation Sans, sans-serif" font-size="9.5" fill="#0a0a0a">X</text>
</svg>
<svg id="Ltreei" width="244" height="928" viewBox="0 0 244 928" style="left:0;top:0">
<rect x="188.500" y="159.500" width="8" height="8" fill="none" stroke="#6e6e6e" stroke-width="1"/><rect x="189" y="160" width="7" height="2" fill="#5a5a5a"/>
<rect x="207.500" y="161.500" width="6" height="6" fill="#444" stroke="#6e6e6e" stroke-width="1"/><path d="M209.500 161.500v-2h6v6h-2" fill="none" stroke="#6e6e6e" stroke-width="1"/>
<path d="M226.500 159.500l8 8M234.500 159.500l-8 8" stroke="#666" stroke-width="1.800"/>
<path d="M3 179.400h8.800l-4.400 4.800z" fill="#ffffff"/><path d="M23 201.600h8.800l-4.400 4.800z" fill="#ffffff"/><path d="M44.600 222.200l4.600 4-4.600 4z" fill="#ffffff"/>
<path d="M5.400 577.400l4.600 4-4.600 4z" fill="#ffffff"/>
<path d="M23.200 175h7l3 3v11h-10z" fill="#f2f2ee" stroke="#c8c8c4" stroke-width="0.500"/><circle cx="30" cy="179.600" r="2.600" fill="#e01020"/><path d="M24.600 181.600l3-1.600 3 1.400v4.200l-3 1.800-3-1.600z" fill="#3a78c0"/><path d="M24.600 181.600l3 1.400 3-1.600M27.600 183v4.400" fill="none" stroke="#1c4c8c" stroke-width="0.500"/>
<ellipse cx="48" cy="203.800" rx="6" ry="3.800" fill="#ffffff"/><ellipse cx="48" cy="204" rx="4.400" ry="2.500" fill="#141414"/><path d="M47 203.400h2.400v1.200h-2.400z" fill="#141414"/><circle cx="49.200" cy="203" r="1" fill="#fff"/>
<g stroke="#8a7400" stroke-width="0.500" stroke-linejoin="round"><path d="M62 203l5-3 7 2.400v4.600l-6 4-6-3z" fill="#e8cc10"/><path d="M62 203l6 2.800 6-3.400M68 205.800v5.200" fill="none"/><path d="M62 203l6 2.800v5.200l-6-3z" fill="#f4dc28"/></g>
<circle cx="70.800" cy="201" r="4.900" fill="#3a70c0"/><path d="M68.200 201l2 2 3.400-3.800" fill="none" stroke="#ffffff" stroke-width="1.500"/>
<path d="M62.600 226.600q5.600-5.600 11.200 0q-5.600 5.400-11.200 0z" fill="none" stroke="#a8a8a8" stroke-width="1.300"/><circle cx="68.200" cy="226.400" r="1.700" fill="#a8a8a8"/><path d="M62.400 221l11.600 10.400" stroke="#c0c0c0" stroke-width="1.500"/>
<path d="M82.400 232l7-6.600" stroke="#9a9a9a" stroke-width="1.500"/><circle cx="91.200" cy="222.800" r="4.900" fill="#3a70c0"/><path d="M88.600 222.800l2 2 3.400-3.800" fill="none" stroke="#ffffff" stroke-width="1.500"/>
<ellipse cx="68" cy="248" rx="6" ry="3.600" fill="#ffffff" stroke="#0c2c5c" stroke-width="0.600"/><ellipse cx="68" cy="248.2" rx="4.200" ry="2.300" fill="#0c1c3c"/><circle cx="69.400" cy="247.2" r="0.900" fill="#fff"/>
<path d="M80.400 243l7.600-2.800 7.600 2v9l-7.400 3.400-7.800-2.600z" fill="#3a74c0"/><path d="M88 244.6l7.600-2.400v9l-7.400 3.400z" fill="#2c5ca4"/><path d="M80.400 243l7.600-2.800 7.600 2-7.600 2.400z" fill="#4a84d0"/><path d="M88.800 243.6l2 2 3.600-4" fill="none" stroke="#c8e0ff" stroke-width="1.500"/>
<ellipse cx="68" cy="270" rx="6" ry="3.600" fill="#ffffff" stroke="#0c2c5c" stroke-width="0.600"/><ellipse cx="68" cy="270.2" rx="4.200" ry="2.300" fill="#0c1c3c"/><circle cx="69.400" cy="269.2" r="0.900" fill="#fff"/>
<path d="M80.400 265l7.600-2.800 7.600 2v9l-7.400 3.400-7.800-2.600z" fill="#3a74c0"/><path d="M88 266.6l7.600-2.400v9l-7.400 3.400z" fill="#2c5ca4"/><path d="M80.400 265l7.600-2.800 7.600 2-7.600 2.400z" fill="#4a84d0"/><path d="M88.800 265.6l2 2 3.600-4" fill="none" stroke="#c8e0ff" stroke-width="1.500"/>
<ellipse cx="68" cy="292" rx="6" ry="3.600" fill="#ffffff" stroke="#0c2c5c" stroke-width="0.600"/><ellipse cx="68" cy="292.2" rx="4.200" ry="2.300" fill="#0c1c3c"/><circle cx="69.400" cy="291.2" r="0.900" fill="#fff"/>
<path d="M80.400 287l7.600-2.800 7.600 2v9l-7.400 3.400-7.800-2.600z" fill="#3a74c0"/><path d="M88 288.6l7.600-2.400v9l-7.400 3.400z" fill="#2c5ca4"/><path d="M80.400 287l7.600-2.800 7.600 2-7.600 2.400z" fill="#4a84d0"/><path d="M88.800 287.6l2 2 3.600-4" fill="none" stroke="#c8e0ff" stroke-width="1.500"/>
</svg>
</div>

<div class="abs" style="left:956px;top:0;width:1px;height:928px;background:#555555;z-index:5"></div>
<div id="R">
  <div class="abs" id="Rmenu"></div>
  <div class="abs" style="left:0;top:18px;width:935px;height:1px;background:#5c5c5c"></div>
  <div class="abs" id="Rtb"></div>
  <div class="abs" style="left:0;top:57px;width:935px;height:1px;background:#5c5c5c"></div>
  

  <div class="rm" style="left:10px">File</div>
  <div class="rm" style="left:42px">Edit</div>
  <div class="rm" style="left:76px">Program</div>
  <div class="rm" style="left:136px">View</div>
  <div class="rm" style="left:175px">Tools</div>
  <div class="rm" style="left:217px">Utilities</div>
  <div class="rm" style="left:270px">Connect</div>
  <div class="rm" style="left:329px">Help</div>
<div class="rt" style="left:59px;top:69px">New Station (1)</div>
<div class="rt" style="left:78px;top:94px">rdk Base</div>
<div class="rt" style="left:98px;top:119px">rdk 0</div>
<div class="rt" style="left:98px;top:144px">rdk 1</div>
<div class="rt" style="left:98px;top:169px">rdk 2</div>

<svg id="Ricons" width="935" height="928" viewBox="0 0 935 928" style="left:0;top:0">
<defs>
<radialGradient id="rGlobe" cx="0.35" cy="0.25" r="0.9"><stop offset="0" stop-color="#c8d6f4"/><stop offset="0.3" stop-color="#5a7ad0"/><stop offset="0.7" stop-color="#1c3a9c"/><stop offset="1" stop-color="#0c2070"/></radialGradient>
<radialGradient id="rInfo" cx="0.4" cy="0.3" r="0.8"><stop offset="0" stop-color="#3a6ad0"/><stop offset="0.6" stop-color="#0c2c8c"/><stop offset="1" stop-color="#06185c"/></radialGradient>
<linearGradient id="rFold" x1="0" y1="0" x2="1" y2="1"><stop offset="0" stop-color="#1a9ee0"/><stop offset="0.4" stop-color="#0a4470"/><stop offset="1" stop-color="#020a12"/></linearGradient>
<linearGradient id="rFold2" x1="0" y1="0" x2="0.6" y2="1"><stop offset="0" stop-color="#0e3048"/><stop offset="0.6" stop-color="#06121c"/><stop offset="1" stop-color="#010306"/></linearGradient>
<linearGradient id="rUndo" x1="0" y1="0" x2="0" y2="1"><stop offset="0" stop-color="#b0b0b0"/><stop offset="1" stop-color="#6c6c6c"/></linearGradient>
<linearGradient id="rFF" x1="0" y1="0" x2="0" y2="1"><stop offset="0" stop-color="#1a7ad8"/><stop offset="0.6" stop-color="#2aa6f8"/><stop offset="1" stop-color="#30b8ff"/></linearGradient>
<radialGradient id="rCube" cx="0.3" cy="0.1" r="0.9"><stop offset="0" stop-color="#5cc8e4"/><stop offset="0.4" stop-color="#1a9cbc"/><stop offset="1" stop-color="#0c7c98"/></radialGradient>
<linearGradient id="rTcube" x1="0" y1="0" x2="1" y2="1"><stop offset="0" stop-color="#d8f0ff"/><stop offset="0.4" stop-color="#58b4f4"/><stop offset="1" stop-color="#1a78d8"/></linearGradient>
</defs>
<rect x="4.3" y="28.6" width="2" height="2" fill="#8c8c8c"/><rect x="8.0" y="28.6" width="2" height="2" fill="#8c8c8c"/><rect x="4.3" y="31.8" width="2" height="2" fill="#8c8c8c"/><rect x="8.0" y="31.8" width="2" height="2" fill="#8c8c8c"/><rect x="4.3" y="35.0" width="2" height="2" fill="#8c8c8c"/><rect x="8.0" y="35.0" width="2" height="2" fill="#8c8c8c"/><rect x="4.3" y="38.1" width="2" height="2" fill="#8c8c8c"/><rect x="8.0" y="38.1" width="2" height="2" fill="#8c8c8c"/><rect x="4.3" y="41.3" width="2" height="2" fill="#8c8c8c"/><rect x="8.0" y="41.3" width="2" height="2" fill="#8c8c8c"/><rect x="4.3" y="44.5" width="2" height="2" fill="#8c8c8c"/><rect x="8.0" y="44.5" width="2" height="2" fill="#8c8c8c"/>
<rect x="122.2" y="28.6" width="2" height="2" fill="#8c8c8c"/><rect x="125.9" y="28.6" width="2" height="2" fill="#8c8c8c"/><rect x="122.2" y="31.8" width="2" height="2" fill="#8c8c8c"/><rect x="125.9" y="31.8" width="2" height="2" fill="#8c8c8c"/><rect x="122.2" y="35.0" width="2" height="2" fill="#8c8c8c"/><rect x="125.9" y="35.0" width="2" height="2" fill="#8c8c8c"/><rect x="122.2" y="38.1" width="2" height="2" fill="#8c8c8c"/><rect x="125.9" y="38.1" width="2" height="2" fill="#8c8c8c"/><rect x="122.2" y="41.3" width="2" height="2" fill="#8c8c8c"/><rect x="125.9" y="41.3" width="2" height="2" fill="#8c8c8c"/><rect x="122.2" y="44.5" width="2" height="2" fill="#8c8c8c"/><rect x="125.9" y="44.5" width="2" height="2" fill="#8c8c8c"/>
<rect x="206.4" y="28.6" width="2" height="2" fill="#8c8c8c"/><rect x="210.1" y="28.6" width="2" height="2" fill="#8c8c8c"/><rect x="206.4" y="31.8" width="2" height="2" fill="#8c8c8c"/><rect x="210.1" y="31.8" width="2" height="2" fill="#8c8c8c"/><rect x="206.4" y="35.0" width="2" height="2" fill="#8c8c8c"/><rect x="210.1" y="35.0" width="2" height="2" fill="#8c8c8c"/><rect x="206.4" y="38.1" width="2" height="2" fill="#8c8c8c"/><rect x="210.1" y="38.1" width="2" height="2" fill="#8c8c8c"/><rect x="206.4" y="41.3" width="2" height="2" fill="#8c8c8c"/><rect x="210.1" y="41.3" width="2" height="2" fill="#8c8c8c"/><rect x="206.4" y="44.5" width="2" height="2" fill="#8c8c8c"/><rect x="210.1" y="44.5" width="2" height="2" fill="#8c8c8c"/>
<rect x="291.0" y="28.6" width="2" height="2" fill="#8c8c8c"/><rect x="294.7" y="28.6" width="2" height="2" fill="#8c8c8c"/><rect x="291.0" y="31.8" width="2" height="2" fill="#8c8c8c"/><rect x="294.7" y="31.8" width="2" height="2" fill="#8c8c8c"/><rect x="291.0" y="35.0" width="2" height="2" fill="#8c8c8c"/><rect x="294.7" y="35.0" width="2" height="2" fill="#8c8c8c"/><rect x="291.0" y="38.1" width="2" height="2" fill="#8c8c8c"/><rect x="294.7" y="38.1" width="2" height="2" fill="#8c8c8c"/><rect x="291.0" y="41.3" width="2" height="2" fill="#8c8c8c"/><rect x="294.7" y="41.3" width="2" height="2" fill="#8c8c8c"/><rect x="291.0" y="44.5" width="2" height="2" fill="#8c8c8c"/><rect x="294.7" y="44.5" width="2" height="2" fill="#8c8c8c"/>
<rect x="386.5" y="28.6" width="2" height="2" fill="#8c8c8c"/><rect x="390.2" y="28.6" width="2" height="2" fill="#8c8c8c"/><rect x="386.5" y="31.8" width="2" height="2" fill="#8c8c8c"/><rect x="390.2" y="31.8" width="2" height="2" fill="#8c8c8c"/><rect x="386.5" y="35.0" width="2" height="2" fill="#8c8c8c"/><rect x="390.2" y="35.0" width="2" height="2" fill="#8c8c8c"/><rect x="386.5" y="38.1" width="2" height="2" fill="#8c8c8c"/><rect x="390.2" y="38.1" width="2" height="2" fill="#8c8c8c"/><rect x="386.5" y="41.3" width="2" height="2" fill="#8c8c8c"/><rect x="390.2" y="41.3" width="2" height="2" fill="#8c8c8c"/><rect x="386.5" y="44.5" width="2" height="2" fill="#8c8c8c"/><rect x="390.2" y="44.5" width="2" height="2" fill="#8c8c8c"/>
<rect x="504.8" y="28.6" width="2" height="2" fill="#8c8c8c"/><rect x="508.5" y="28.6" width="2" height="2" fill="#8c8c8c"/><rect x="504.8" y="31.8" width="2" height="2" fill="#8c8c8c"/><rect x="508.5" y="31.8" width="2" height="2" fill="#8c8c8c"/><rect x="504.8" y="35.0" width="2" height="2" fill="#8c8c8c"/><rect x="508.5" y="35.0" width="2" height="2" fill="#8c8c8c"/><rect x="504.8" y="38.1" width="2" height="2" fill="#8c8c8c"/><rect x="508.5" y="38.1" width="2" height="2" fill="#8c8c8c"/><rect x="504.8" y="41.3" width="2" height="2" fill="#8c8c8c"/><rect x="508.5" y="41.3" width="2" height="2" fill="#8c8c8c"/><rect x="504.8" y="44.5" width="2" height="2" fill="#8c8c8c"/><rect x="508.5" y="44.5" width="2" height="2" fill="#8c8c8c"/>
<rect x="566.5" y="28.6" width="2" height="2" fill="#8c8c8c"/><rect x="570.2" y="28.6" width="2" height="2" fill="#8c8c8c"/><rect x="566.5" y="31.8" width="2" height="2" fill="#8c8c8c"/><rect x="570.2" y="31.8" width="2" height="2" fill="#8c8c8c"/><rect x="566.5" y="35.0" width="2" height="2" fill="#8c8c8c"/><rect x="570.2" y="35.0" width="2" height="2" fill="#8c8c8c"/><rect x="566.5" y="38.1" width="2" height="2" fill="#8c8c8c"/><rect x="570.2" y="38.1" width="2" height="2" fill="#8c8c8c"/><rect x="566.5" y="41.3" width="2" height="2" fill="#8c8c8c"/><rect x="570.2" y="41.3" width="2" height="2" fill="#8c8c8c"/><rect x="566.5" y="44.5" width="2" height="2" fill="#8c8c8c"/><rect x="570.2" y="44.5" width="2" height="2" fill="#8c8c8c"/>
<rect x="662.6" y="28.6" width="2" height="2" fill="#8c8c8c"/><rect x="666.3" y="28.6" width="2" height="2" fill="#8c8c8c"/><rect x="662.6" y="31.8" width="2" height="2" fill="#8c8c8c"/><rect x="666.3" y="31.8" width="2" height="2" fill="#8c8c8c"/><rect x="662.6" y="35.0" width="2" height="2" fill="#8c8c8c"/><rect x="666.3" y="35.0" width="2" height="2" fill="#8c8c8c"/><rect x="662.6" y="38.1" width="2" height="2" fill="#8c8c8c"/><rect x="666.3" y="38.1" width="2" height="2" fill="#8c8c8c"/><rect x="662.6" y="41.3" width="2" height="2" fill="#8c8c8c"/><rect x="666.3" y="41.3" width="2" height="2" fill="#8c8c8c"/><rect x="662.6" y="44.5" width="2" height="2" fill="#8c8c8c"/><rect x="666.3" y="44.5" width="2" height="2" fill="#8c8c8c"/>
<path d="M21.600 34.200l13-5.400 1.400-1.400 5.600-0.400 0.200 22-3.800 0.800-18-12z" fill="url(#rFold)"/><path d="M23.400 34l12-5 4.600 0.200-1.600 8.800-13 1z" fill="#20a8f0" opacity="0.600"/><path d="M17.400 37.600l23.200 0.800-1.200 11.600-18.200-4z" fill="url(#rFold2)"/><path d="M17.400 37.600l23.200 0.800-0.100 1-22.700-1z" fill="#1c5c84" opacity="0.700"/>
<circle cx="63.400" cy="38.100" r="12.100" fill="url(#rGlobe)" stroke="#0a1a5c" stroke-width="0.5"/>
<path d="M61 28.500c2.800-1.200 6.400-0.800 8.400 0.600l1.600 2.400-1.400 2.200 1 2.800 3 1.200-0.600 3-2.600 2.400-1.400-3.600-2.600-1.600-0.400 3.400 1.600 3.600-1.800 2.200-2.400-3.800-0.600-4.400-2.800-2.800 0.400-3.200-2-1.600zM52.800 35c1.200-0.400 2.600 0 3.400 1.200l-0.400 3-2.200 1.800-1.400-2.400z" fill="#dfe6f8" opacity="0.92"/>
<path d="M87.400 28.200h16l4.400 4.200v16.200h-20.400z" fill="#3a5cb0" stroke="#0a0a14" stroke-width="0.9" stroke-linejoin="round"/><rect x="91.600" y="28.600" width="10.400" height="6" fill="#dcdcdc"/><rect x="98" y="29.200" width="2.600" height="4.800" fill="#9c9c9c"/><rect x="90.800" y="39.200" width="13.600" height="9" fill="#ffffff"/><path d="M90.800 42h13.600M90.800 45h13.600" stroke="#8c8c8c" stroke-width="0.8"/>
<path d="M136.400 36.600l5.400-9.200 2.400 3.600c6.800-1.600 12.400 2.200 12.800 8 0.400 5.400-4 9.600-9.400 9.600-2.400 0-4.600-0.800-6.200-2.200l2-3.200c1.200 1 2.600 1.400 4.200 1.400 3 0 5.400-2.400 5.200-5.400-0.200-3.400-3.400-5.400-6.800-4.600l1.600 3.400z" fill="url(#rUndo)"/>
<path d="M191.400 36.600l-5.400-9.200-2.400 3.600c-6.800-1.600-12.400 2.200-12.800 8-0.400 5.400 4 9.600 9.400 9.600 2.400 0 4.600-0.800 6.200-2.200l-2-3.200c-1.200 1-2.600 1.400-4.200 1.400-3 0-5.400-2.400-5.200-5.400 0.200-3.400 3.400-5.400 6.800-4.600l-1.600 3.400z" fill="url(#rUndo)"/>
<path d="M236.500 28.500v15" stroke="#2020f0" stroke-width="1.800"/><path d="M236.500 26.800l1.800 4h-3.600z" fill="#4040ff"/><path d="M236.500 43.400l-14 2.800" stroke="#e84858" stroke-width="1.600"/><path d="M219.800 46.600l4-2 0.600 2.800z" fill="#f06070"/><path d="M236.500 43.400l5.400 5" stroke="#38b888" stroke-width="1.500"/><path d="M243.400 49.800l-3.600-0.600 2.200-2.400z" fill="#50d0a0"/>
<path d="M224.9 27.099999999999998h3.4v5.1h5.1v3.4h-5.1v5.1h-3.4v-5.1h-5.1v-3.4h5.1z" fill="#00b400"/>
<ellipse cx="262" cy="43" rx="8.800" ry="7.200" fill="#d01010"/><ellipse cx="262.200" cy="42.400" rx="6.400" ry="5" fill="#ffffff"/><ellipse cx="262.400" cy="42" rx="4.200" ry="3.200" fill="#d81818"/><ellipse cx="262.600" cy="41.600" rx="2" ry="1.500" fill="#ffffff"/><path d="M263 41.200l13-13" stroke="#9aa800" stroke-width="1.300"/><ellipse cx="276" cy="28.200" rx="2.600" ry="1.400" transform="rotate(-45 276 28.200)" fill="#b8d000"/><path d="M263 41.200l3-3" stroke="#555" stroke-width="1.300"/>
<path d="M258.8 27.099999999999998h3.4v5.1h5.1v3.4h-5.1v5.1h-3.4v-5.1h-5.1v-3.4h5.1z" fill="#00b400"/>
<rect x="304.800" y="27.200" width="22" height="22" rx="1.800" fill="#e6eded" stroke="#f8fbfb" stroke-width="0.800"/>
<path d="M306.4 28.8h6.4l-2.2 2.2l3 3l-2 2l-3 -3l-2.2 2.2z" fill="#2a4c9c"/>
<path d="M325.2 28.8h-6.4l2.2 2.2l-3 3l2 2l3 -3l2.2 2.2z" fill="#2a4c9c"/>
<path d="M306.4 47.6h6.4l-2.2 -2.2l3 -3l-2 -2l-3 3l-2.2 -2.2z" fill="#2a4c9c"/>
<path d="M325.2 47.6h-6.4l2.2 -2.2l-3 -3l2 -2l3 3l2.2 -2.2z" fill="#2a4c9c"/>
<path d="M338.600 33.200l10-6.600 11 3.600-1.400 15.200-8.600 4.800-9.600-4.400z" fill="url(#rCube)"/><path d="M338.600 33.200l11.400 4 10-7M350 37.200l-0.400 13" fill="none" stroke="#0a6c84" stroke-width="0.700"/><path d="M350 37.200l9.600-6.800-1.400 15-8.600 4.800z" fill="#0c7c98" opacity="0.55"/>
<path d="M367.8 35.65h8l-4.0 4.5z" fill="#b4b4b4"/>
<rect x="396.500" y="23" width="30" height="29.400" rx="3" fill="#353535" stroke="#5a5a5a" stroke-width="1"/>
<path d="M402.2 27.5 L402.2 44.9 L406.4 41.2 L410.1 48.1 L411.7 47.5 L408.5 40.7 L413.8 40.2z" fill="#ffffff"/>
<path d="M416.8 30.6 L416.8 36.9 L418.3 35.5 L419.6 38.0 L420.2 37.8 L419.1 35.4 L421.0 35.2z" fill="#c4c4c4"/>
<path d="M436.0 27.5 L436.0 44.9 L440.2 41.2 L443.9 48.1 L445.5 47.5 L442.3 40.7 L447.6 40.2z" fill="#ffffff"/>
<path d="M453.700 27.600v7" stroke="#2828e8" stroke-width="1.300"/><path d="M453.700 34.600l-7 1.200" stroke="#e02030" stroke-width="1.600"/><path d="M453.700 34.600l3.600 3" stroke="#30b070" stroke-width="1.400"/>
<path d="M453 42.800000000000004l1.4 1.6h-2.800zM453 49.6l1.4-1.6h-2.800zM449.6 46.2l1.6-1.4v2.800zM456.4 46.2l-1.6-1.4v2.800z" fill="#111"/><path d="M453 43.800000000000004v4.800M450.6 46.2h4.800" stroke="#111" stroke-width="1"/>
<path d="M470.4 27.5 L470.4 44.9 L474.6 41.2 L478.3 48.1 L479.9 47.5 L476.7 40.7 L482.0 40.2z" fill="#ffffff"/>
<path d="M479.600 28.400l3.400-1.200 3 2.200 3.600 3.400 1.200 3-1.200 0.400-2.600-3.200-2.400-0.600 1.800 3.800 0.200 2.200-1.400 0.200-2-3.600-1.400-4.200z" fill="#8088c0"/><path d="M480 28.600l3-1 2.400 1.800-2.600 1.600z" fill="#a0a8d8"/>
<path d="M486.8 42.800000000000004l1.4 1.6h-2.800zM486.8 49.6l1.4-1.6h-2.800zM483.40000000000003 46.2l1.6-1.4v2.800zM490.2 46.2l-1.6-1.4v2.800z" fill="#111"/><path d="M486.8 43.800000000000004v4.800M484.40000000000003 46.2h4.800" stroke="#111" stroke-width="1"/>
<rect x="521.200" y="27" width="6.400" height="7" rx="0.800" fill="#6c6c6c"/><rect x="522" y="34" width="4.800" height="5" fill="#4c4c4c"/><path d="M519 43l10.600-4.800 10.600 4.800v3.800l-10.600 3.600-10.600-3.600z" fill="#ffffff"/><path d="M519 43l10.600 3.800 10.600-3.800M529.600 46.800v3.600" fill="none" stroke="#9c9c9c" stroke-width="0.600"/>
<path d="M547.8 35.65h8l-4.0 4.5z" fill="#b4b4b4"/>
<path d="M582.800 32.800l9.400 5.600-9.400 5.600z" fill="url(#rFF)"/><path d="M591.600 32.800l9.200 5.600-9.200 5.600z" fill="url(#rFF)"/>
<path d="M609.9 35.65h8l-4.0 4.5z" fill="#b4b4b4"/>
<rect x="632.200" y="32.300" width="5" height="12.200" rx="1" fill="url(#rFF)"/><rect x="638.200" y="32.300" width="5" height="12.200" rx="1" fill="url(#rFF)"/>
<path d="M681.200 30.800q0-1.800 2-1.800h5.600q2.200 0 2.200 2.200v5q0 2-2 2h-5.400q-2.600 0-2.600 2.400v1.600h-1.600q-1.800 0-1.800-2v-4q0-2.200 2-2.200h1.600z" fill="#3874a8"/><path d="M694 46.400q0 1.800-2 1.800h-5.600q-2.200 0-2.200-2.200v-5q0-2 2-2h5.400q2.600 0 2.600-2.400v-1.600h1.600q1.800 0 1.800 2v4q0 2.200-2 2.200h-1.600z" fill="#f8cc40"/><circle cx="691.400" cy="45.600" r="0.900" fill="#7a6410"/>
<path d="M680.5999999999999 27.099999999999998h3.4v5.1h5.1v3.4h-5.1v5.1h-3.4v-5.1h-5.1v-3.4h5.1z" fill="#00b400"/>
<rect x="708.600" y="28" width="0.800" height="20" fill="#3c3c3c"/><rect x="749.400" y="28" width="0.800" height="20" fill="#3c3c3c"/>
<path d="M718.800 26.600h13.800l5.400 5.400v17.600h-19.200z" fill="#ffffff"/><path d="M732.600 26.600v5.400h5.400z" fill="#d0d0d0"/><rect x="722" y="27.600" width="10" height="2.400" fill="#b8a0f0"/><path d="M726 35h10M726 37.600h10M726 40.200h10M726 42.800h10M726 45.400h10" stroke="#b0b0b0" stroke-width="0.800"/><path d="M722.400 42.800h1.400M722.400 45.400h1.400M722.400 40.200h1.400" stroke="#909090" stroke-width="0.900"/>
<path d="M721.5999999999999 27.099999999999998h3.4v5.1h5.1v3.4h-5.1v5.1h-3.4v-5.1h-5.1v-3.4h5.1z" fill="#00b400"/>
<path d="M761.400 42.400c1.600-4.400 5-4.800 8-4.200 2.600 0.500 4.600 0 6.400-1.800" fill="none" stroke="#b4b400" stroke-width="2.200"/><path d="M778.400 34.600l-1 5.200-3.600-3.600z" fill="#b4b400"/>
<ellipse cx="761.4" cy="44.2" rx="4" ry="3.2" fill="#5c5c5c" stroke="#8a8a8a" stroke-width="0.800"/><ellipse cx="761.4" cy="43.900000000000006" rx="1.6" ry="1.3" fill="#f0f0e8"/><ellipse cx="777.8" cy="33.3" rx="3.4" ry="2.5" fill="#c80818"/><ellipse cx="777.8" cy="33.099999999999994" rx="1.4" ry="1.0" fill="#fff0f0"/>
<path d="M796.800 43l11-7.200" fill="none" stroke="#b4b400" stroke-width="2.200"/><path d="M811 33.800l-2.400 4.800-2.800-4.200z" fill="#b4b400"/>
<ellipse cx="795.8" cy="44.2" rx="4" ry="3.2" fill="#5c5c5c" stroke="#8a8a8a" stroke-width="0.800"/><ellipse cx="795.8" cy="43.900000000000006" rx="1.6" ry="1.3" fill="#f0f0e8"/><ellipse cx="812" cy="32.6" rx="3.4" ry="2.5" fill="#c80818"/><ellipse cx="812" cy="32.4" rx="1.4" ry="1.0" fill="#fff0f0"/>
<path d="M830.100 44v-6c0-4.400 5-6.400 11.400-5.400" fill="none" stroke="#b4b400" stroke-width="2.200"/><path d="M843.400 32.600l-4.800 2.200 0.400-4.400z" fill="#b4b400"/>
<ellipse cx="830.1" cy="45.4" rx="4" ry="3.2" fill="#5c5c5c" stroke="#8a8a8a" stroke-width="0.800"/><ellipse cx="830.1" cy="45.1" rx="1.6" ry="1.3" fill="#f0f0e8"/><ellipse cx="830.1" cy="35.4" rx="3.6" ry="2.7" fill="#c80818"/><ellipse cx="830.1" cy="35.199999999999996" rx="1.4" ry="1.1" fill="#fff0f0"/><ellipse cx="846" cy="33.9" rx="3.4" ry="2.5" fill="#c80818"/><ellipse cx="846" cy="33.699999999999996" rx="1.4" ry="1.0" fill="#fff0f0"/>
<rect x="865.600" y="27.400" width="12" height="2.200" rx="0.600" fill="#141414"/><rect x="865.600" y="47.200" width="12" height="2.200" rx="0.600" fill="#141414"/><path d="M866.600 29.600h10c0 5-3.800 6.400-3.800 8.800s3.800 3.800 3.800 8.800h-10c0-5 3.800-6.400 3.800-8.800s-3.800-3.800-3.800-8.800z" fill="#e8f4fc"/><path d="M867.600 33h8c-0.800 2.600-3 3.600-4 5.200-1-1.600-3.200-2.600-4-5.200zM867 47c0.400-2.800 2.400-4.200 4.600-5 2.200 0.800 4.200 2.200 4.600 5z" fill="#28a0f0"/>
<circle cx="905.400" cy="38.300" r="12.300" fill="url(#rInfo)" stroke="#4a6cc8" stroke-width="0.600"/><rect x="903.600" y="35.600" width="3.400" height="9.400" fill="#ffffff"/><rect x="903.600" y="30.800" width="3.400" height="3.200" fill="#ffffff"/>
<path d="M8.500 73h15.600l-7.800 9.200z" fill="#ffffff"/><path d="M28.600 98.300h15l-7.500 8.800z" fill="#ffffff"/>
<path d="M38.400 68.400l8.600-1.600 4 1v17l-4.200 1.800-8.400-1.600z" fill="#f4f4f4"/><path d="M46.800 66.800l4.200 1v17l-4.200 1.800z" fill="#4a8ce0"/><path d="M35.800 77.600l6.200-1v9l-6.200-0.800z" fill="#e4e4e4" stroke="#c0c0c0" stroke-width="0.400"/>
<path d="M65.200 93.600v14" stroke="#2020e0" stroke-width="1.400"/><path d="M65.200 91.400l1.600 3.600h-3.200z" fill="#3030f0"/><path d="M65.200 107.600l-12.400 2.400" stroke="#e03040" stroke-width="1.500"/><path d="M50.400 110.600l3.600-2 0.600 2.800z" fill="#e84858"/><path d="M65.200 107.600l5 4.400" stroke="#30a878" stroke-width="1.400"/><path d="M71.800 113.400l-3.400-0.600 2-2.400z" fill="#40c090"/>
<path d="M55.500 114v62.500h10.300M55.500 127h10.300M55.500 152h10.300" fill="none" stroke="#7c7c9c" stroke-width="1"/>
<path d="M69.800 124l10-6.400 11.400 3.200-1.600 12.200-9.400 5.600-9.200-4.400z" fill="url(#rTcube)"/><path d="M69.800 124l10-6.400 11.400 3.200-10.400 6z" fill="#c8e8ff"/><path d="M80.800 126.8l10.400-6-1.600 12.200-9.400 5.600z" fill="#1a70d0" opacity="0.600"/>
<path d="M69.800 149l10-6.400 11.400 3.200-1.600 12.200-9.400 5.600-9.200-4.400z" fill="url(#rTcube)"/><path d="M69.800 149l10-6.400 11.400 3.200-10.400 6z" fill="#c8e8ff"/><path d="M80.800 151.8l10.400-6-1.600 12.200-9.400 5.600z" fill="#1a70d0" opacity="0.600"/>
<path d="M69.800 174l10-6.400 11.400 3.200-1.600 12.200-9.400 5.600-9.200-4.400z" fill="url(#rTcube)"/><path d="M69.800 174l10-6.400 11.400 3.200-10.400 6z" fill="#c8e8ff"/><path d="M80.800 176.8l10.400-6-1.600 12.200-9.400 5.600z" fill="#1a70d0" opacity="0.600"/>
</svg>
<svg id="Rmodel" width="935" height="928" viewBox="0 0 935 928" style="left:0;top:0">
<defs>
<linearGradient id="rgTop" x1="0" y1="0" x2="1" y2="1"><stop offset="0" stop-color="#d9dcdd"/><stop offset="1" stop-color="#e3e6e7"/></linearGradient>
<linearGradient id="rgBand" gradientUnits="userSpaceOnUse" x1="265" y1="590" x2="400" y2="430"><stop offset="0" stop-color="#a9a9a9"/><stop offset="0.25" stop-color="#d8d8d8"/><stop offset="0.5" stop-color="#fbfbfb"/><stop offset="1" stop-color="#f4f4f4"/></linearGradient>
<linearGradient id="rgBowl" gradientUnits="userSpaceOnUse" x1="520" y1="640" x2="660" y2="520"><stop offset="0" stop-color="#e4e7e8"/><stop offset="0.55" stop-color="#dcdfe0"/><stop offset="0.8" stop-color="#eceeef"/><stop offset="1" stop-color="#c4c7c8"/></linearGradient>
<radialGradient id="rgBowlHi" gradientUnits="userSpaceOnUse" cx="640" cy="525" r="45"><stop offset="0" stop-color="#ffffff" stop-opacity="0.95"/><stop offset="1" stop-color="#ffffff" stop-opacity="0"/></radialGradient>
<linearGradient id="rgSideL" x1="0" y1="0" x2="0" y2="1"><stop offset="0" stop-color="#e2e5e6"/><stop offset="1" stop-color="#cfd2d3"/></linearGradient>
<linearGradient id="rgTr" x1="0" y1="0" x2="1" y2="0"><stop offset="0" stop-color="#d0d3d4"/><stop offset="0.35" stop-color="#ffffff"/><stop offset="0.7" stop-color="#f4f5f5"/><stop offset="1" stop-color="#b8bbbc"/></linearGradient>
<filter id="bl3" x="-20%" y="-20%" width="140%" height="140%"><feGaussianBlur stdDeviation="3"/></filter><filter id="bl6" x="-30%" y="-30%" width="160%" height="160%"><feGaussianBlur stdDeviation="6"/></filter><clipPath id="bowlclip"><path d="M483.1 668.6 L484.7 669.3 L486.7 670.3 L489.2 671.4 L492.1 672.5 L495.5 673.4 L499.3 674.0 L503.7 674.3 L508.6 674.6 L513.9 674.6 L519.7 674.4 L525.6 673.8 L531.6 672.7 L538.0 671.1 L544.7 669.0 L551.7 666.5 L558.7 663.8 L565.5 660.9 L572.0 657.8 L578.2 654.7 L584.2 651.4 L590.1 647.8 L595.8 644.1 L601.5 640.3 L607.1 636.3 L612.7 632.1 L618.3 627.8 L623.8 623.3 L629.1 618.7 L634.4 614.1 L639.4 609.3 L644.4 604.5 L649.4 599.5 L654.3 594.4 L658.9 589.3 L662.9 584.4 L666.4 579.7 L669.1 575.3 L671.3 571.1 L673.0 567.1 L674.3 563.1 L675.2 559.3 L675.8 555.5 L676.1 551.7 L676.0 548.1 L675.5 544.5 L674.7 541.0 L673.4 537.5 L671.8 533.9 L669.5 530.2 L666.7 526.4 L663.4 522.5 L659.9 518.8 L656.4 515.4 L652.9 512.3 L649.2 509.6 L645.1 507.1 L640.9 504.9 L637.0 503.0 L633.7 501.4 L631.3 500.2z"/></clipPath>
</defs>
<path d="M61.3 577.5 L634.3 855.0 L632.4 870.6 L63.2 590.0z" fill="#d3d6d7"/>
<path d="M61.3 577.5 L634.3 855.0 L633.8 861.0 L62.1 582.5z" fill="#e4e7e8"/>
<path d="M634.3 855.0 L868.2 559.0 L866.0 572.5 L632.4 870.6z" fill="#b9bcbd"/>
<path d="M634.3 855.0 L868.2 559.0 L867.4 564.5 L633.6 861.5z" fill="#eceeef"/>
<path d="M352.3 366.7 L868.2 559.0 L634.3 855.0 L61.3 577.5z" fill="url(#rgTop)"/>
<path d="M121.9 550.8 L329.4 398.5 L342.9 393.1 L356.4 392.6 L359.6 396.9 L372.5 399.0 L388.7 394.7 L410.3 393.7 L437.2 405.2 L531.9 444.5 L550.8 455.2 L557.5 467.4 L569.7 475.5 L583.1 478.1 L602.0 474.1 L620.8 478.1 L785.2 540.1 L796.0 550.9 L804.1 561.7 L820.3 572.5 L825.6 580.5 L820.3 594.0 L658.6 791.7 L647.8 801.1 L631.6 803.0 L610.1 795.7 L593.9 795.7 L577.7 802.5 L558.9 799.8 L385.2 712.5 L366.4 700.3 L363.7 685.5 L352.9 673.4 L334.0 670.7 L312.5 676.1 L296.3 673.4 L142.7 600.6 L130.6 591.2 L136.0 583.1 L131.9 572.3 L119.8 561.6 L121.1 550.8z" fill="none" stroke="#c4c7c8" stroke-width="4.8" stroke-linejoin="round" transform="translate(0.9,-0.9)"/>
<path d="M121.9 550.8 L329.4 398.5 L342.9 393.1 L356.4 392.6 L359.6 396.9 L372.5 399.0 L388.7 394.7 L410.3 393.7 L437.2 405.2 L531.9 444.5 L550.8 455.2 L557.5 467.4 L569.7 475.5 L583.1 478.1 L602.0 474.1 L620.8 478.1 L785.2 540.1 L796.0 550.9 L804.1 561.7 L820.3 572.5 L825.6 580.5 L820.3 594.0 L658.6 791.7 L647.8 801.1 L631.6 803.0 L610.1 795.7 L593.9 795.7 L577.7 802.5 L558.9 799.8 L385.2 712.5 L366.4 700.3 L363.7 685.5 L352.9 673.4 L334.0 670.7 L312.5 676.1 L296.3 673.4 L142.7 600.6 L130.6 591.2 L136.0 583.1 L131.9 572.3 L119.8 561.6 L121.1 550.8z" fill="none" stroke="#ffffff" stroke-width="2.5" stroke-linejoin="round"/>
<ellipse cx="361.8" cy="383.7" rx="8" ry="4.5" fill="#eef0f1" stroke="#c4c7c8" stroke-width="0.8"/><ellipse cx="362.6" cy="385.3" rx="3.6" ry="2.0" fill="#f8f9f9" stroke="#c0c3c4" stroke-width="0.8"/>
<ellipse cx="101.7" cy="576.4" rx="10" ry="6.5" fill="#eef0f1" stroke="#c4c7c8" stroke-width="0.8"/><ellipse cx="102.7" cy="578.6" rx="4.5" ry="2.9" fill="#f8f9f9" stroke="#c0c3c4" stroke-width="0.8"/>
<ellipse cx="336.7" cy="688.2" rx="11" ry="7.5" fill="#eef0f1" stroke="#c4c7c8" stroke-width="0.8"/><ellipse cx="337.8" cy="690.8" rx="5.0" ry="3.4" fill="#f8f9f9" stroke="#c0c3c4" stroke-width="0.8"/>
<ellipse cx="614.1" cy="822.7" rx="12" ry="8.5" fill="#eef0f1" stroke="#c4c7c8" stroke-width="0.8"/><ellipse cx="615.3" cy="825.6" rx="5.4" ry="3.8" fill="#f8f9f9" stroke="#c0c3c4" stroke-width="0.8"/>
<ellipse cx="829.7" cy="559.0" rx="10" ry="6.5" fill="#eef0f1" stroke="#c4c7c8" stroke-width="0.8"/><ellipse cx="830.7" cy="561.3" rx="4.5" ry="2.9" fill="#f8f9f9" stroke="#c0c3c4" stroke-width="0.8"/>
<ellipse cx="579.1" cy="465.5" rx="9.5" ry="5.5" fill="#eef0f1" stroke="#c4c7c8" stroke-width="0.8"/><ellipse cx="580.0" cy="467.4" rx="4.3" ry="2.5" fill="#f8f9f9" stroke="#c0c3c4" stroke-width="0.8"/>
<ellipse cx="342.9" cy="404.7" rx="3.5" ry="2.2" fill="#eef0f1" stroke="#c4c7c8" stroke-width="0.8"/>
<ellipse cx="141.3" cy="554.8" rx="3.5" ry="2.2" fill="#eef0f1" stroke="#c4c7c8" stroke-width="0.8"/>
<ellipse cx="464.7" cy="673.9" rx="3.5" ry="2.2" fill="#eef0f1" stroke="#c4c7c8" stroke-width="0.8"/>
<ellipse cx="633.0" cy="783.6" rx="4" ry="3" fill="#c9c5c3" stroke="#b4b4b4" stroke-width="0.6"/>
<ellipse cx="800.0" cy="580.5" rx="3.5" ry="2.6" fill="#cfcbc9" stroke="#b8b8b8" stroke-width="0.6"/>
<path d="M178.5 544.0 L176.4 600.6 L179.1 607.4 L185.8 612.2 L253.2 641.3 L261.3 642.4 L269.4 640.2 L496.9 445.3 L498.8 441.8 L495.5 437.7 L469.9 425.6 L469.5 414.7 L456.6 401.2 L445.3 401.2 L431.8 408.5 L410.3 405.2 L396.8 405.8 L391.4 414.1 L367.1 413.6 L353.7 415.2 L351.0 423.3 L326.7 426.0 L311.9 428.7 L310.6 442.2 L287.6 443.5 L275.5 446.2 L276.9 459.7 L256.7 466.4 L245.9 470.5 L245.9 483.9 L223.0 497.7 L223.0 514.4z" fill="#bdbdbd"/>
<path d="M223.0 514.4 L223.0 497.7 L245.9 483.9 L245.9 470.5 L256.7 466.4 L276.9 459.7 L275.5 446.2 L287.6 443.5 L310.6 442.2 L311.9 428.7 L326.7 426.0 L351.0 423.3 L353.7 415.2 L367.1 413.6 L391.4 414.1 L396.8 405.8 L410.3 405.2 L431.8 408.5 L445.3 401.2 L456.6 401.2 L469.5 414.7 L468.2 428.1 L464.7 428.4 L460.1 428.8 L454.6 429.2 L448.5 429.7 L442.1 430.3 L435.6 430.9 L429.4 431.5 L423.7 432.2 L418.5 432.8 L413.3 433.5 L408.3 434.2 L403.3 434.9 L398.3 435.7 L393.3 436.6 L388.3 437.7 L383.3 438.9 L378.2 440.4 L373.0 442.0 L367.8 443.8 L362.6 445.7 L357.5 447.6 L352.4 449.7 L347.6 451.7 L342.9 453.7 L338.4 455.8 L334.1 457.8 L329.9 459.9 L325.9 462.1 L321.9 464.3 L318.1 466.5 L314.3 468.9 L310.6 471.3 L306.9 473.8 L303.2 476.4 L299.6 479.0 L296.1 481.8 L292.7 484.6 L289.5 487.3 L286.4 490.1 L283.6 492.8 L281.0 495.5 L278.6 498.1 L276.3 500.8 L274.3 503.4 L272.3 506.1 L270.6 508.8 L268.9 511.6 L267.4 514.4 L266.1 517.4 L264.9 520.8 L263.9 524.3 L263.1 527.8 L262.3 531.2 L261.7 534.2 L261.2 536.7 L260.7 538.6 L223.0 538.6z" fill="#b7b7b7"/>
<path d="M223.0 497.7 L245.9 483.9 L256.7 490.1 L237.8 511.7z" fill="#adadad"/>
<path d="M245.9 470.5 L256.7 466.4 L258.0 482.0 L248.6 484.7z" fill="#adadad"/>
<path d="M275.5 446.2 L287.6 443.5 L289.0 463.2 L276.9 459.7z" fill="#adadad"/>
<path d="M311.9 428.7 L326.7 426.0 L313.2 442.2 L310.6 442.2z" fill="#adadad"/>
<path d="M353.7 415.2 L367.1 413.6 L352.3 423.3 L351.0 423.3z" fill="#adadad"/>
<path d="M396.8 405.8 L410.3 405.2 L392.7 414.1 L391.4 414.1z" fill="#adadad"/>
<path d="M260.7 538.6 L261.2 536.7 L261.7 534.2 L262.3 531.2 L263.1 527.8 L263.9 524.3 L264.9 520.8 L266.1 517.4 L267.4 514.4 L268.9 511.6 L270.6 508.8 L272.3 506.1 L274.3 503.4 L276.3 500.8 L278.6 498.1 L281.0 495.5 L283.6 492.8 L286.4 490.1 L289.5 487.3 L292.7 484.6 L296.1 481.8 L299.6 479.0 L303.2 476.4 L306.9 473.8 L310.6 471.3 L314.3 468.9 L318.1 466.5 L321.9 464.3 L325.9 462.1 L329.9 459.9 L334.1 457.8 L338.4 455.8 L342.9 453.7 L347.6 451.7 L352.4 449.7 L357.5 447.6 L362.6 445.7 L367.8 443.8 L373.0 442.0 L378.2 440.4 L383.3 438.9 L388.3 437.7 L393.3 436.6 L398.3 435.7 L403.3 434.9 L408.3 434.2 L413.3 433.5 L418.5 432.8 L423.7 432.2 L429.4 431.5 L435.6 430.9 L442.1 430.3 L448.5 429.7 L454.6 429.2 L460.1 428.8 L464.7 428.4 L468.2 428.1 L466.0 465.9 L466.0 465.9 L462.1 466.4 L456.7 467.0 L450.3 467.7 L443.2 468.6 L435.8 469.5 L428.5 470.5 L421.7 471.5 L415.6 472.6 L410.3 473.7 L405.3 474.9 L400.5 476.1 L395.8 477.4 L391.3 478.8 L386.9 480.2 L382.4 481.8 L377.9 483.4 L373.3 485.1 L368.7 487.0 L364.1 489.0 L359.6 491.1 L355.1 493.2 L350.8 495.3 L346.7 497.4 L342.9 499.6 L339.3 501.7 L335.9 503.7 L332.7 505.8 L329.6 508.0 L326.7 510.1 L323.9 512.4 L321.2 514.7 L318.6 517.1 L316.2 519.6 L313.8 522.3 L311.5 525.1 L309.4 527.9 L307.4 530.8 L305.6 533.5 L303.9 536.2 L302.5 538.6 L301.2 540.7 L300.0 542.3 L299.0 543.7 L298.2 545.0 L297.6 546.6 L297.2 548.6 L297.0 551.3 L297.1 554.8 L297.5 559.6 L298.5 565.8 L299.7 572.8 L301.1 580.1 L302.5 587.3 L303.8 593.8 L305.0 599.4 L305.7 603.3 L272.0 589.9 L261.3 540.0z" fill="url(#rgBand)"/>
<path d="M468.2 428.1 L469.5 414.7 L470.1 453.7 L466.0 465.9z" fill="#c4c4c4"/>
<ellipse cx="280.4" cy="576.9" rx="3.2" ry="3.8" transform="rotate(-20 280.4 576.9)" fill="#ffffff"/>
<ellipse cx="277.7" cy="552.6" rx="3.2" ry="3.8" transform="rotate(-20 277.7 552.6)" fill="#ffffff"/>
<ellipse cx="283.1" cy="530.0" rx="3.2" ry="3.8" transform="rotate(-20 283.1 530.0)" fill="#ececec"/>
<ellipse cx="295.7" cy="507.6" rx="3.2" ry="3.8" transform="rotate(-20 295.7 507.6)" fill="#c4c4c4"/>
<ellipse cx="315.9" cy="488.8" rx="3.2" ry="3.8" transform="rotate(-20 315.9 488.8)" fill="#a8a8a8"/>
<ellipse cx="341.0" cy="472.6" rx="3.2" ry="3.8" transform="rotate(-20 341.0 472.6)" fill="#a0a0a0"/>
<ellipse cx="370.6" cy="459.7" rx="3.2" ry="3.8" transform="rotate(-20 370.6 459.7)" fill="#a0a0a0"/>
<ellipse cx="404.1" cy="451.1" rx="3.2" ry="3.8" transform="rotate(-20 404.1 451.1)" fill="#a0a0a0"/>
<ellipse cx="438.6" cy="447.0" rx="3.2" ry="3.8" transform="rotate(-20 438.6 447.0)" fill="#a0a0a0"/>
<path d="M212.8 592.5 L242.4 597.9 L246.4 622.2 L216.8 618.1z" fill="#d6d6d6"/>
<path d="M242.4 597.9 L272.0 589.9 L305.7 603.3 L246.4 622.2z" fill="#dcdcdc"/>
<path d="M204.7 561.6 L231.6 566.9 L228.9 573.7 L208.7 584.5 L212.8 592.5 L242.4 597.9 L272.0 589.9 L261.3 540.0 L221.6 538.6 L208.2 527.8 L205.5 561.5z" fill="#c6c6c6"/>
<path d="M204.7 561.6 L231.6 566.9 L228.9 573.7 L208.7 584.5z" fill="#d2d2d2"/>
<path d="M208.2 527.8 L210.8 562.9 L212.8 592.5 L204.7 561.6z" fill="#b4b4b4"/>
<path d="M360.5 568.9 L434.6 602.6 L438.7 595.9 L378.0 560.8" fill="none" stroke="#c9cccd" stroke-width="0.8"/>
<path d="M378.0 560.8 L413.1 547.4" fill="none" stroke="#c9cccd" stroke-width="0.8"/>
<path d="M434.6 602.6 L437.3 582.4 L429.2 568.9" fill="none" stroke="#c9cccd" stroke-width="0.8"/>
<path d="M437.3 543.3 L496.6 531.2" fill="none" stroke="#f3f4f4" stroke-width="1"/>
<path d="M437.3 543.3 L496.6 531.2" fill="none" stroke="#c6c9ca" stroke-width="0.7" transform="translate(0.8,0.8)"/>
<path d="M450.8 562.2 L504.7 548.7" fill="none" stroke="#f3f4f4" stroke-width="1"/>
<path d="M450.8 562.2 L504.7 548.7" fill="none" stroke="#c6c9ca" stroke-width="0.7" transform="translate(0.8,0.8)"/>
<path d="M511.4 552.8 L528.9 573.0" fill="none" stroke="#f3f4f4" stroke-width="1"/>
<path d="M511.4 552.8 L528.9 573.0" fill="none" stroke="#c6c9ca" stroke-width="0.7" transform="translate(0.8,0.8)"/>
<path d="M535.7 543.3 L547.8 567.6" fill="none" stroke="#f3f4f4" stroke-width="1"/>
<path d="M535.7 543.3 L547.8 567.6" fill="none" stroke="#c6c9ca" stroke-width="0.7" transform="translate(0.8,0.8)"/>
<path d="M528.9 583.7 L515.5 590.5 L503.3 613.4 L531.6 598.6 L545.1 587.8" fill="none" stroke="#f3f4f4" stroke-width="1"/>
<path d="M528.9 583.7 L515.5 590.5 L503.3 613.4 L531.6 598.6 L545.1 587.8" fill="none" stroke="#c6c9ca" stroke-width="0.7" transform="translate(0.8,0.8)"/>
<ellipse cx="428.7" cy="555.5" rx="19.0" ry="11.0" fill="none" stroke="#f4f5f5" stroke-width="1"/>
<ellipse cx="429.4" cy="556.2" rx="19.0" ry="11.0" fill="none" stroke="#c8cbcc" stroke-width="0.6"/>
<ellipse cx="428.7" cy="555.5" rx="13.7" ry="7.9" fill="none" stroke="#f4f5f5" stroke-width="1"/>
<ellipse cx="429.4" cy="556.2" rx="13.7" ry="7.9" fill="none" stroke="#c8cbcc" stroke-width="0.6"/>
<ellipse cx="428.7" cy="555.5" rx="8.0" ry="4.6" fill="none" stroke="#f4f5f5" stroke-width="1"/>
<ellipse cx="429.4" cy="556.2" rx="8.0" ry="4.6" fill="none" stroke="#c8cbcc" stroke-width="0.6"/>
<ellipse cx="514.1" cy="537.4" rx="18.0" ry="10.0" fill="none" stroke="#f4f5f5" stroke-width="1"/>
<ellipse cx="514.8" cy="538.1" rx="18.0" ry="10.0" fill="none" stroke="#c8cbcc" stroke-width="0.6"/>
<ellipse cx="514.1" cy="537.4" rx="13.0" ry="7.2" fill="none" stroke="#f4f5f5" stroke-width="1"/>
<ellipse cx="514.8" cy="538.1" rx="13.0" ry="7.2" fill="none" stroke="#c8cbcc" stroke-width="0.6"/>
<ellipse cx="514.1" cy="537.4" rx="7.6" ry="4.2" fill="none" stroke="#f4f5f5" stroke-width="1"/>
<ellipse cx="514.8" cy="538.1" rx="7.6" ry="4.2" fill="none" stroke="#c8cbcc" stroke-width="0.6"/>
<ellipse cx="541.1" cy="576.5" rx="12.5" ry="9.0" fill="none" stroke="#f4f5f5" stroke-width="1"/>
<ellipse cx="541.8" cy="577.2" rx="12.5" ry="9.0" fill="none" stroke="#c8cbcc" stroke-width="0.6"/>
<ellipse cx="541.1" cy="576.5" rx="9.0" ry="6.5" fill="none" stroke="#f4f5f5" stroke-width="1"/>
<ellipse cx="541.8" cy="577.2" rx="9.0" ry="6.5" fill="none" stroke="#c8cbcc" stroke-width="0.6"/>
<ellipse cx="541.1" cy="576.5" rx="5.2" ry="3.8" fill="none" stroke="#f4f5f5" stroke-width="1"/>
<ellipse cx="541.8" cy="577.2" rx="5.2" ry="3.8" fill="none" stroke="#c8cbcc" stroke-width="0.6"/>
<path d="M744.8 529.3 L766.4 588.6 L637.0 748.6" fill="none" stroke="#c9cccd" stroke-width="0.7" stroke-dasharray="3 1.5"/>
<path d="M450.2 689.4 L453.5 690.7 L445.7 699.8 L442.4 698.4z" fill="#dfe2e3" stroke="#dfe2e3" stroke-width="0.6"/><path d="M453.5 690.7 L458.1 692.6 L450.1 701.6 L445.7 699.8z" fill="#dfe2e3" stroke="#dfe2e3" stroke-width="0.6"/><path d="M458.1 692.6 L463.6 694.8 L455.3 703.8 L450.1 701.6z" fill="#dfe2e3" stroke="#dfe2e3" stroke-width="0.6"/><path d="M463.6 694.8 L469.6 697.1 L461.3 706.1 L455.3 703.8z" fill="#dfe2e3" stroke="#dfe2e3" stroke-width="0.6"/><path d="M469.6 697.1 L476.0 699.2 L467.8 708.3 L461.3 706.1z" fill="#dfe2e3" stroke="#dfe2e3" stroke-width="0.6"/><path d="M476.0 699.2 L482.5 701.0 L474.7 710.1 L467.8 708.3z" fill="#dfe2e3" stroke="#dfe2e3" stroke-width="0.6"/><path d="M482.5 701.0 L489.1 702.5 L482.3 711.6 L474.7 710.1z" fill="#dfe2e3" stroke="#dfe2e3" stroke-width="0.6"/><path d="M489.1 702.5 L496.3 703.9 L490.7 712.9 L482.3 711.6z" fill="#dfe2e3" stroke="#dfe2e3" stroke-width="0.6"/><path d="M496.3 703.9 L503.8 705.1 L499.7 714.2 L490.7 712.9z" fill="#dfe2e3" stroke="#dfe2e3" stroke-width="0.6"/><path d="M503.8 705.1 L511.5 706.2 L508.9 715.2 L499.7 714.2z" fill="#dfe2e3" stroke="#dfe2e3" stroke-width="0.6"/><path d="M511.5 706.2 L519.1 707.0 L517.9 716.0 L508.9 715.2z" fill="#dfe2e3" stroke="#dfe2e3" stroke-width="0.6"/><path d="M519.1 707.0 L526.4 707.5 L526.4 716.5 L517.9 716.0z" fill="#dfe2e3" stroke="#dfe2e3" stroke-width="0.6"/><path d="M526.4 707.5 L533.7 707.7 L534.6 716.7 L526.4 716.5z" fill="#dfe2e3" stroke="#dfe2e3" stroke-width="0.6"/><path d="M533.7 707.7 L540.9 707.6 L542.5 716.7 L534.6 716.7z" fill="#dfe2e3" stroke="#dfe2e3" stroke-width="0.6"/><path d="M540.9 707.6 L548.2 707.2 L550.4 716.4 L542.5 716.7z" fill="#dfe2e3" stroke="#dfe2e3" stroke-width="0.6"/><path d="M548.2 707.2 L555.3 706.7 L558.0 715.8 L550.4 716.4z" fill="#dfe2e3" stroke="#dfe2e3" stroke-width="0.6"/><path d="M555.3 706.7 L562.3 705.9 L565.6 715.0 L558.0 715.8z" fill="#dfe2e3" stroke="#dfe2e3" stroke-width="0.6"/><path d="M562.3 705.9 L569.1 704.9 L573.0 713.9 L565.6 715.0z" fill="#dfe2e3" stroke="#dfe2e3" stroke-width="0.6"/><path d="M569.1 704.9 L575.7 703.8 L580.2 712.7 L573.0 713.9z" fill="#dfe2e3" stroke="#dfe2e3" stroke-width="0.6"/><path d="M575.7 703.8 L582.1 702.5 L587.4 711.2 L580.2 712.7z" fill="#dfe2e3" stroke="#dfe2e3" stroke-width="0.6"/><path d="M582.1 702.5 L588.3 700.9 L594.3 709.4 L587.4 711.2z" fill="#dfe2e3" stroke="#dfe2e3" stroke-width="0.6"/><path d="M588.3 700.9 L594.5 699.2 L601.1 707.4 L594.3 709.4z" fill="#dfe2e3" stroke="#dfe2e3" stroke-width="0.6"/><path d="M594.5 699.2 L600.6 697.0 L607.8 705.0 L601.1 707.4z" fill="#dfe2e3" stroke="#dfe2e3" stroke-width="0.6"/><path d="M600.6 697.0 L606.6 694.6 L614.4 702.3 L607.8 705.0z" fill="#dfe2e3" stroke="#dfe2e3" stroke-width="0.6"/><path d="M606.6 694.6 L612.6 691.7 L620.8 699.2 L614.4 702.3z" fill="#dfe2e3" stroke="#dfe2e3" stroke-width="0.6"/><path d="M612.6 691.7 L618.6 688.4 L627.1 695.7 L620.8 699.2z" fill="#dfe2e3" stroke="#dfe2e3" stroke-width="0.6"/><path d="M618.6 688.4 L624.5 684.8 L633.3 691.8 L627.1 695.7z" fill="#dfe2e3" stroke="#dfe2e3" stroke-width="0.6"/><path d="M624.5 684.8 L630.4 680.9 L639.3 687.7 L633.3 691.8z" fill="#dfe2e3" stroke="#dfe2e3" stroke-width="0.6"/><path d="M630.4 680.9 L636.0 676.8 L645.0 683.4 L639.3 687.7z" fill="#dfe2e3" stroke="#dfe2e3" stroke-width="0.6"/><path d="M636.0 676.8 L641.5 672.6 L650.6 679.0 L645.0 683.4z" fill="#dfe2e3" stroke="#dfe2e3" stroke-width="0.6"/><path d="M641.5 672.6 L646.8 668.1 L655.8 674.5 L650.6 679.0z" fill="#dfe2e3" stroke="#dfe2e3" stroke-width="0.6"/><path d="M646.8 668.1 L652.1 663.3 L660.9 669.7 L655.8 674.5z" fill="#dfe2e3" stroke="#dfe2e3" stroke-width="0.6"/><path d="M652.1 663.3 L657.1 658.4 L665.7 664.7 L660.9 669.7z" fill="#dfe2e3" stroke="#dfe2e3" stroke-width="0.6"/><path d="M657.1 658.4 L662.0 653.2 L670.3 659.6 L665.7 664.7z" fill="#dfe2e3" stroke="#dfe2e3" stroke-width="0.6"/><path d="M662.0 653.2 L666.7 648.0 L674.7 654.5 L670.3 659.6z" fill="#dfe2e3" stroke="#dfe2e3" stroke-width="0.6"/><path d="M666.7 648.0 L671.3 642.8 L679.0 649.3 L674.7 654.5z" fill="#dfe2e3" stroke="#dfe2e3" stroke-width="0.6"/><path d="M671.3 642.8 L675.7 637.6 L683.2 644.1 L679.0 649.3z" fill="#dfe2e3" stroke="#dfe2e3" stroke-width="0.6"/><path d="M675.7 637.6 L680.0 632.3 L687.2 638.7 L683.2 644.1z" fill="#dfe2e3" stroke="#dfe2e3" stroke-width="0.6"/><path d="M680.0 632.3 L684.1 626.8 L691.1 633.3 L687.2 638.7z" fill="#dfe2e3" stroke="#dfe2e3" stroke-width="0.6"/><path d="M684.1 626.8 L688.0 621.4 L694.8 627.8 L691.1 633.3z" fill="#dfe2e3" stroke="#dfe2e3" stroke-width="0.6"/><path d="M688.0 621.4 L691.5 615.9 L698.1 622.4 L694.8 627.8z" fill="#dfe2e3" stroke="#dfe2e3" stroke-width="0.6"/><path d="M691.5 615.9 L694.5 610.5 L701.0 617.0 L698.1 622.4z" fill="#dfe2e3" stroke="#dfe2e3" stroke-width="0.6"/><path d="M694.5 610.5 L697.1 605.1 L703.5 611.6 L701.0 617.0z" fill="#dfe2e3" stroke="#dfe2e3" stroke-width="0.6"/><path d="M697.1 605.1 L699.3 599.5 L705.7 606.2 L703.5 611.6z" fill="#dfe2e3" stroke="#dfe2e3" stroke-width="0.6"/><path d="M699.3 599.5 L701.2 594.0 L707.5 600.7 L705.7 606.2z" fill="#dfe2e3" stroke="#dfe2e3" stroke-width="0.6"/><path d="M701.2 594.0 L702.7 588.6 L709.1 595.3 L707.5 600.7z" fill="#dfe2e3" stroke="#dfe2e3" stroke-width="0.6"/><path d="M702.7 588.6 L703.9 583.3 L710.3 590.0 L709.1 595.3z" fill="#dfe2e3" stroke="#dfe2e3" stroke-width="0.6"/><path d="M703.9 583.3 L704.9 578.2 L711.3 584.6 L710.3 590.0z" fill="#dfe2e3" stroke="#dfe2e3" stroke-width="0.6"/><path d="M704.9 578.2 L705.6 573.3 L712.1 579.3 L711.3 584.6z" fill="#dfe2e3" stroke="#dfe2e3" stroke-width="0.6"/><path d="M705.6 573.3 L706.0 568.5 L712.5 574.0 L712.1 579.3z" fill="#dfe2e3" stroke="#dfe2e3" stroke-width="0.6"/><path d="M706.0 568.5 L706.2 563.8 L712.6 568.6 L712.5 574.0z" fill="#dfe2e3" stroke="#dfe2e3" stroke-width="0.6"/><path d="M706.2 563.8 L706.0 559.4 L712.5 563.4 L712.6 568.6z" fill="#dfe2e3" stroke="#dfe2e3" stroke-width="0.6"/><path d="M706.0 559.4 L705.6 555.1 L712.1 558.4 L712.5 563.4z" fill="#dfe2e3" stroke="#dfe2e3" stroke-width="0.6"/><path d="M705.6 555.1 L704.9 551.0 L711.3 553.6 L712.1 558.4z" fill="#dfe2e3" stroke="#dfe2e3" stroke-width="0.6"/><path d="M704.9 551.0 L703.6 547.0 L710.1 548.9 L711.3 553.6z" fill="#dfe2e3" stroke="#dfe2e3" stroke-width="0.6"/><path d="M703.6 547.0 L701.8 543.0 L708.3 544.0 L710.1 548.9z" fill="#dfe2e3" stroke="#dfe2e3" stroke-width="0.6"/><path d="M701.8 543.0 L699.7 539.2 L706.2 539.4 L708.3 544.0z" fill="#dfe2e3" stroke="#dfe2e3" stroke-width="0.6"/><path d="M699.7 539.2 L697.6 535.8 L704.1 535.2 L706.2 539.4z" fill="#dfe2e3" stroke="#dfe2e3" stroke-width="0.6"/><path d="M697.6 535.8 L695.8 533.0 L702.2 531.6 L704.1 535.2z" fill="#dfe2e3" stroke="#dfe2e3" stroke-width="0.6"/><path d="M695.8 533.0 L694.5 530.9 L701.0 529.1 L702.2 531.6z" fill="#dfe2e3" stroke="#dfe2e3" stroke-width="0.6"/>
<path d="M442.4 698.4 L445.7 699.8 L446.1 713.7 L442.4 712.7z" fill="#eaecec" stroke="#eaecec" stroke-width="0.6"/><path d="M445.7 699.8 L450.1 701.6 L451.1 715.2 L446.1 713.7z" fill="#eaecec" stroke="#eaecec" stroke-width="0.6"/><path d="M450.1 701.6 L455.3 703.8 L457.1 716.9 L451.1 715.2z" fill="#eaecec" stroke="#eaecec" stroke-width="0.6"/><path d="M455.3 703.8 L461.3 706.1 L464.0 718.7 L457.1 716.9z" fill="#eaecec" stroke="#eaecec" stroke-width="0.6"/><path d="M461.3 706.1 L467.8 708.3 L471.4 720.1 L464.0 718.7z" fill="#eaecec" stroke="#eaecec" stroke-width="0.6"/><path d="M467.8 708.3 L474.7 710.1 L479.1 721.0 L471.4 720.1z" fill="#eaecec" stroke="#eaecec" stroke-width="0.6"/><path d="M474.7 710.1 L482.3 711.6 L487.6 721.5 L479.1 721.0z" fill="#eaecec" stroke="#eaecec" stroke-width="0.6"/><path d="M482.3 711.6 L490.7 712.9 L496.9 721.6 L487.6 721.5z" fill="#eaecec" stroke="#eaecec" stroke-width="0.6"/><path d="M490.7 712.9 L499.7 714.2 L506.8 721.4 L496.9 721.6z" fill="#e9ebec" stroke="#e9ebec" stroke-width="0.6"/><path d="M499.7 714.2 L508.9 715.2 L517.0 721.0 L506.8 721.4z" fill="#e9ebec" stroke="#e9ebec" stroke-width="0.6"/><path d="M508.9 715.2 L517.9 716.0 L527.2 720.4 L517.0 721.0z" fill="#e9ebeb" stroke="#e9ebeb" stroke-width="0.6"/><path d="M517.9 716.0 L526.4 716.5 L537.1 719.7 L527.2 720.4z" fill="#e8eaeb" stroke="#e8eaeb" stroke-width="0.6"/><path d="M526.4 716.5 L534.6 716.7 L546.9 718.8 L537.1 719.7z" fill="#e8eaeb" stroke="#e8eaeb" stroke-width="0.6"/><path d="M534.6 716.7 L542.5 716.7 L556.9 717.7 L546.9 718.8z" fill="#e7e9ea" stroke="#e7e9ea" stroke-width="0.6"/><path d="M542.5 716.7 L550.4 716.4 L567.0 716.5 L556.9 717.7z" fill="#e7e9ea" stroke="#e7e9ea" stroke-width="0.6"/><path d="M550.4 716.4 L558.0 715.8 L576.7 715.0 L567.0 716.5z" fill="#e6e8e9" stroke="#e6e8e9" stroke-width="0.6"/><path d="M558.0 715.8 L565.6 715.0 L586.0 713.2 L576.7 715.0z" fill="#e5e7e8" stroke="#e5e7e8" stroke-width="0.6"/><path d="M565.6 715.0 L573.0 713.9 L594.5 711.1 L586.0 713.2z" fill="#e5e7e8" stroke="#e5e7e8" stroke-width="0.6"/><path d="M573.0 713.9 L580.2 712.7 L602.4 708.5 L594.5 711.1z" fill="#e4e6e7" stroke="#e4e6e7" stroke-width="0.6"/><path d="M580.2 712.7 L587.4 711.2 L609.7 705.5 L602.4 708.5z" fill="#e3e5e6" stroke="#e3e5e6" stroke-width="0.6"/><path d="M587.4 711.2 L594.3 709.4 L616.6 702.2 L609.7 705.5z" fill="#e1e4e5" stroke="#e1e4e5" stroke-width="0.6"/><path d="M594.3 709.4 L601.1 707.4 L622.9 698.7 L616.6 702.2z" fill="#e0e2e4" stroke="#e0e2e4" stroke-width="0.6"/><path d="M601.1 707.4 L607.8 705.0 L628.7 695.0 L622.9 698.7z" fill="#dfe1e2" stroke="#dfe1e2" stroke-width="0.6"/><path d="M607.8 705.0 L614.4 702.3 L634.1 691.2 L628.7 695.0z" fill="#dde0e1" stroke="#dde0e1" stroke-width="0.6"/><path d="M614.4 702.3 L620.8 699.2 L638.8 687.2 L634.1 691.2z" fill="#dcdfe0" stroke="#dcdfe0" stroke-width="0.6"/><path d="M620.8 699.2 L627.1 695.7 L642.9 683.0 L638.8 687.2z" fill="#daddde" stroke="#daddde" stroke-width="0.6"/><path d="M627.1 695.7 L633.3 691.8 L646.6 678.5 L642.9 683.0z" fill="#d8dbdc" stroke="#d8dbdc" stroke-width="0.6"/><path d="M633.3 691.8 L639.3 687.7 L649.8 674.0 L646.6 678.5z" fill="#d6d9da" stroke="#d6d9da" stroke-width="0.6"/><path d="M639.3 687.7 L645.0 683.4 L652.8 669.4 L649.8 674.0z" fill="#d4d7d8" stroke="#d4d7d8" stroke-width="0.6"/><path d="M645.0 683.4 L650.6 679.0 L655.7 664.8 L652.8 669.4z" fill="#d2d5d6" stroke="#d2d5d6" stroke-width="0.6"/><path d="M650.6 679.0 L655.8 674.5 L658.3 660.1 L655.7 664.8z" fill="#d0d3d4" stroke="#d0d3d4" stroke-width="0.6"/><path d="M655.8 674.5 L660.9 669.7 L660.5 655.1 L658.3 660.1z" fill="#cfd2d3" stroke="#cfd2d3" stroke-width="0.6"/><path d="M660.9 669.7 L665.7 664.7 L662.4 650.1 L660.5 655.1z" fill="#cdd0d1" stroke="#cdd0d1" stroke-width="0.6"/><path d="M665.7 664.7 L670.3 659.6 L664.3 645.2 L662.4 650.1z" fill="#cccfd0" stroke="#cccfd0" stroke-width="0.6"/><path d="M670.3 659.6 L674.7 654.5 L666.4 640.6 L664.3 645.2z" fill="#cbcecf" stroke="#cbcecf" stroke-width="0.6"/><path d="M674.7 654.5 L679.0 649.3 L668.9 636.5 L666.4 640.6z" fill="#c9cccd" stroke="#c9cccd" stroke-width="0.6"/><path d="M679.0 649.3 L683.2 644.1 L671.9 632.9 L668.9 636.5z" fill="#c8cbcc" stroke="#c8cbcc" stroke-width="0.6"/><path d="M683.2 644.1 L687.2 638.7 L675.2 630.0 L671.9 632.9z" fill="#c8cbcc" stroke="#c8cbcc" stroke-width="0.6"/><path d="M687.2 638.7 L691.1 633.3 L678.7 627.3 L675.2 630.0z" fill="#c7cacb" stroke="#c7cacb" stroke-width="0.6"/><path d="M691.1 633.3 L694.8 627.8 L682.3 624.6 L678.7 627.3z" fill="#c7cacb" stroke="#c7cacb" stroke-width="0.6"/><path d="M694.8 627.8 L698.1 622.4 L685.8 621.7 L682.3 624.6z" fill="#c7cacb" stroke="#c7cacb" stroke-width="0.6"/><path d="M698.1 622.4 L701.0 617.0 L689.2 618.3 L685.8 621.7z" fill="#c6c9ca" stroke="#c6c9ca" stroke-width="0.6"/><path d="M701.0 617.0 L703.5 611.6 L692.6 614.4 L689.2 618.3z" fill="#c6c9ca" stroke="#c6c9ca" stroke-width="0.6"/><path d="M703.5 611.6 L705.7 606.2 L696.0 610.2 L692.6 614.4z" fill="#c6c9ca" stroke="#c6c9ca" stroke-width="0.6"/><path d="M705.7 606.2 L707.5 600.7 L699.5 605.7 L696.0 610.2z" fill="#c7cacb" stroke="#c7cacb" stroke-width="0.6"/><path d="M707.5 600.7 L709.1 595.3 L702.6 601.0 L699.5 605.7z" fill="#c7cacb" stroke="#c7cacb" stroke-width="0.6"/><path d="M709.1 595.3 L710.3 590.0 L705.4 596.2 L702.6 601.0z" fill="#c7cacb" stroke="#c7cacb" stroke-width="0.6"/><path d="M710.3 590.0 L711.3 584.6 L707.6 591.2 L705.4 596.2z" fill="#c8cbcc" stroke="#c8cbcc" stroke-width="0.6"/><path d="M711.3 584.6 L712.1 579.3 L709.3 586.0 L707.6 591.2z" fill="#c8cbcc" stroke="#c8cbcc" stroke-width="0.6"/><path d="M712.1 579.3 L712.5 574.0 L710.5 580.4 L709.3 586.0z" fill="#c9cccd" stroke="#c9cccd" stroke-width="0.6"/><path d="M712.5 574.0 L712.6 568.6 L711.3 574.7 L710.5 580.4z" fill="#c9cccd" stroke="#c9cccd" stroke-width="0.6"/><path d="M712.6 568.6 L712.5 563.4 L711.6 568.9 L711.3 574.7z" fill="#cacdce" stroke="#cacdce" stroke-width="0.6"/><path d="M712.5 563.4 L712.1 558.4 L711.7 563.3 L711.6 568.9z" fill="#cbcecf" stroke="#cbcecf" stroke-width="0.6"/><path d="M712.1 558.4 L711.3 553.6 L711.3 557.9 L711.7 563.3z" fill="#cbcecf" stroke="#cbcecf" stroke-width="0.6"/><path d="M711.3 553.6 L710.1 548.9 L710.3 552.5 L711.3 557.9z" fill="#cccfd0" stroke="#cccfd0" stroke-width="0.6"/><path d="M710.1 548.9 L708.3 544.0 L708.5 546.9 L710.3 552.5z" fill="#cccfd0" stroke="#cccfd0" stroke-width="0.6"/><path d="M708.3 544.0 L706.2 539.4 L706.4 541.4 L708.5 546.9z" fill="#cccfd0" stroke="#cccfd0" stroke-width="0.6"/><path d="M706.2 539.4 L704.1 535.2 L704.2 536.4 L706.4 541.4z" fill="#cccfd0" stroke="#cccfd0" stroke-width="0.6"/><path d="M704.1 535.2 L702.2 531.6 L702.3 532.1 L704.2 536.4z" fill="#cccfd0" stroke="#cccfd0" stroke-width="0.6"/><path d="M702.2 531.6 L701.0 529.1 L701.0 529.1 L702.3 532.1z" fill="#cccfd0" stroke="#cccfd0" stroke-width="0.6"/>
<path d="M448.9 680.3 L452.4 681.7 L453.5 690.7 L450.2 689.4z" fill="#eceeee" stroke="#eceeee" stroke-width="0.6"/><path d="M452.4 681.7 L457.2 683.5 L458.1 692.6 L453.5 690.7z" fill="#eceeee" stroke="#eceeee" stroke-width="0.6"/><path d="M457.2 683.5 L462.9 685.7 L463.6 694.8 L458.1 692.6z" fill="#eceeee" stroke="#eceeee" stroke-width="0.6"/><path d="M462.9 685.7 L469.3 688.0 L469.6 697.1 L463.6 694.8z" fill="#eceeee" stroke="#eceeee" stroke-width="0.6"/><path d="M469.3 688.0 L475.9 690.2 L476.0 699.2 L469.6 697.1z" fill="#eceeee" stroke="#eceeee" stroke-width="0.6"/><path d="M475.9 690.2 L482.5 692.0 L482.5 701.0 L476.0 699.2z" fill="#eceeee" stroke="#eceeee" stroke-width="0.6"/><path d="M482.5 692.0 L489.2 693.4 L489.1 702.5 L482.5 701.0z" fill="#eceeee" stroke="#eceeee" stroke-width="0.6"/><path d="M489.2 693.4 L496.5 694.8 L496.3 703.9 L489.1 702.5z" fill="#eceeee" stroke="#eceeee" stroke-width="0.6"/><path d="M496.5 694.8 L504.0 696.1 L503.8 705.1 L496.3 703.9z" fill="#ebeded" stroke="#ebeded" stroke-width="0.6"/><path d="M504.0 696.1 L511.6 697.1 L511.5 706.2 L503.8 705.1z" fill="#ebeded" stroke="#ebeded" stroke-width="0.6"/><path d="M511.6 697.1 L519.1 697.9 L519.1 707.0 L511.5 706.2z" fill="#ebeded" stroke="#ebeded" stroke-width="0.6"/><path d="M519.1 697.9 L526.4 698.4 L526.4 707.5 L519.1 707.0z" fill="#eaecec" stroke="#eaecec" stroke-width="0.6"/><path d="M526.4 698.4 L533.5 698.6 L533.7 707.7 L526.4 707.5z" fill="#eaecec" stroke="#eaecec" stroke-width="0.6"/><path d="M533.5 698.6 L540.6 698.5 L540.9 707.6 L533.7 707.7z" fill="#e9ebec" stroke="#e9ebec" stroke-width="0.6"/><path d="M540.6 698.5 L547.6 698.2 L548.2 707.2 L540.9 707.6z" fill="#e9ebeb" stroke="#e9ebeb" stroke-width="0.6"/><path d="M547.6 698.2 L554.5 697.6 L555.3 706.7 L548.2 707.2z" fill="#e8eaea" stroke="#e8eaea" stroke-width="0.6"/><path d="M554.5 697.6 L561.2 696.8 L562.3 705.9 L555.3 706.7z" fill="#e7e9ea" stroke="#e7e9ea" stroke-width="0.6"/><path d="M561.2 696.8 L567.8 695.8 L569.1 704.9 L562.3 705.9z" fill="#e7e9ea" stroke="#e7e9ea" stroke-width="0.6"/><path d="M567.8 695.8 L574.2 694.7 L575.7 703.8 L569.1 704.9z" fill="#e6e8e9" stroke="#e6e8e9" stroke-width="0.6"/><path d="M574.2 694.7 L580.4 693.4 L582.1 702.5 L575.7 703.8z" fill="#e4e6e8" stroke="#e4e6e8" stroke-width="0.6"/><path d="M580.4 693.4 L586.4 691.8 L588.3 700.9 L582.1 702.5z" fill="#e3e5e6" stroke="#e3e5e6" stroke-width="0.6"/><path d="M586.4 691.8 L592.3 690.0 L594.5 699.2 L588.3 700.9z" fill="#e1e4e4" stroke="#e1e4e4" stroke-width="0.6"/><path d="M592.3 690.0 L598.2 687.9 L600.6 697.0 L594.5 699.2z" fill="#dfe2e3" stroke="#dfe2e3" stroke-width="0.6"/><path d="M598.2 687.9 L604.0 685.5 L606.6 694.6 L600.6 697.0z" fill="#dee0e2" stroke="#dee0e2" stroke-width="0.6"/><path d="M604.0 685.5 L609.8 682.7 L612.6 691.7 L606.6 694.6z" fill="#dcdfe0" stroke="#dcdfe0" stroke-width="0.6"/><path d="M609.8 682.7 L615.6 679.7 L618.6 688.4 L612.6 691.7z" fill="#daddde" stroke="#daddde" stroke-width="0.6"/><path d="M615.6 679.7 L621.3 676.3 L624.5 684.8 L618.6 688.4z" fill="#d8dbdc" stroke="#d8dbdc" stroke-width="0.6"/><path d="M621.3 676.3 L626.9 672.7 L630.4 680.9 L624.5 684.8z" fill="#d6d8da" stroke="#d6d8da" stroke-width="0.6"/><path d="M626.9 672.7 L632.4 668.8 L636.0 676.8 L630.4 680.9z" fill="#d3d6d7" stroke="#d3d6d7" stroke-width="0.6"/><path d="M632.4 668.8 L637.6 664.8 L641.5 672.6 L636.0 676.8z" fill="#d1d4d5" stroke="#d1d4d5" stroke-width="0.6"/><path d="M637.6 664.8 L642.7 660.6 L646.8 668.1 L641.5 672.6z" fill="#cfd2d3" stroke="#cfd2d3" stroke-width="0.6"/><path d="M642.7 660.6 L647.7 656.0 L652.1 663.3 L646.8 668.1z" fill="#ced0d2" stroke="#ced0d2" stroke-width="0.6"/><path d="M647.7 656.0 L652.5 651.2 L657.1 658.4 L652.1 663.3z" fill="#cccfd0" stroke="#cccfd0" stroke-width="0.6"/><path d="M652.5 651.2 L657.2 646.3 L662.0 653.2 L657.1 658.4z" fill="#cacece" stroke="#cacece" stroke-width="0.6"/><path d="M657.2 646.3 L661.7 641.3 L666.7 648.0 L662.0 653.2z" fill="#c9cccd" stroke="#c9cccd" stroke-width="0.6"/><path d="M661.7 641.3 L666.1 636.4 L671.3 642.8 L666.7 648.0z" fill="#c8cacc" stroke="#c8cacc" stroke-width="0.6"/><path d="M666.1 636.4 L670.4 631.3 L675.7 637.6 L671.3 642.8z" fill="#c6c9ca" stroke="#c6c9ca" stroke-width="0.6"/><path d="M670.4 631.3 L674.7 626.2 L680.0 632.3 L675.7 637.6z" fill="#c6c9ca" stroke="#c6c9ca" stroke-width="0.6"/><path d="M674.7 626.2 L678.8 621.0 L684.1 626.8 L680.0 632.3z" fill="#c5c8c9" stroke="#c5c8c9" stroke-width="0.6"/><path d="M678.8 621.0 L682.7 615.8 L688.0 621.4 L684.1 626.8z" fill="#c5c8c9" stroke="#c5c8c9" stroke-width="0.6"/><path d="M682.7 615.8 L686.2 610.5 L691.5 615.9 L688.0 621.4z" fill="#c5c8c9" stroke="#c5c8c9" stroke-width="0.6"/><path d="M686.2 610.5 L689.4 605.3 L694.5 610.5 L691.5 615.9z" fill="#c4c7c8" stroke="#c4c7c8" stroke-width="0.6"/><path d="M689.4 605.3 L692.1 600.1 L697.1 605.1 L694.5 610.5z" fill="#c4c7c8" stroke="#c4c7c8" stroke-width="0.6"/><path d="M692.1 600.1 L694.5 594.8 L699.3 599.5 L697.1 605.1z" fill="#c4c7c8" stroke="#c4c7c8" stroke-width="0.6"/><path d="M694.5 594.8 L696.6 589.5 L701.2 594.0 L699.3 599.5z" fill="#c5c8c9" stroke="#c5c8c9" stroke-width="0.6"/><path d="M696.6 589.5 L698.4 584.3 L702.7 588.6 L701.2 594.0z" fill="#c5c8c9" stroke="#c5c8c9" stroke-width="0.6"/><path d="M698.4 584.3 L699.9 579.2 L703.9 583.3 L702.7 588.6z" fill="#c5c8c9" stroke="#c5c8c9" stroke-width="0.6"/><path d="M699.9 579.2 L701.0 574.3 L704.9 578.2 L703.9 583.3z" fill="#c6c9ca" stroke="#c6c9ca" stroke-width="0.6"/><path d="M701.0 574.3 L701.8 569.6 L705.6 573.3 L704.9 578.2z" fill="#c6c9ca" stroke="#c6c9ca" stroke-width="0.6"/><path d="M701.8 569.6 L702.2 565.0 L706.0 568.5 L705.6 573.3z" fill="#c7cacb" stroke="#c7cacb" stroke-width="0.6"/><path d="M702.2 565.0 L702.3 560.6 L706.2 563.8 L706.0 568.5z" fill="#c7cacb" stroke="#c7cacb" stroke-width="0.6"/><path d="M702.3 560.6 L702.1 556.3 L706.0 559.4 L706.2 563.8z" fill="#c8cbcc" stroke="#c8cbcc" stroke-width="0.6"/><path d="M702.1 556.3 L701.7 552.2 L705.6 555.1 L706.0 559.4z" fill="#c9cccd" stroke="#c9cccd" stroke-width="0.6"/><path d="M701.7 552.2 L701.0 548.4 L704.9 551.0 L705.6 555.1z" fill="#c9cccd" stroke="#c9cccd" stroke-width="0.6"/><path d="M701.0 548.4 L699.9 544.8 L703.6 547.0 L704.9 551.0z" fill="#cacdce" stroke="#cacdce" stroke-width="0.6"/><path d="M699.9 544.8 L698.3 541.2 L701.8 543.0 L703.6 547.0z" fill="#cacdce" stroke="#cacdce" stroke-width="0.6"/><path d="M698.3 541.2 L696.5 537.8 L699.7 539.2 L701.8 543.0z" fill="#cbcecf" stroke="#cbcecf" stroke-width="0.6"/><path d="M696.5 537.8 L694.6 534.7 L697.6 535.8 L699.7 539.2z" fill="#cbcecf" stroke="#cbcecf" stroke-width="0.6"/><path d="M694.6 534.7 L693.0 532.2 L695.8 533.0 L697.6 535.8z" fill="#cbcecf" stroke="#cbcecf" stroke-width="0.6"/><path d="M693.0 532.2 L691.9 530.3 L694.5 530.9 L695.8 533.0z" fill="#cccfd0" stroke="#cccfd0" stroke-width="0.6"/>
<path d="M730.7 613.1 L728.7 615.8 L725.9 619.6 L722.7 624.1 L719.1 628.7 L715.7 633.0 L712.6 636.4 L709.8 638.8 L707.1 640.7 L704.4 642.2 L701.8 643.6 L699.4 645.0 L697.1 646.7 L695.1 648.6 L693.3 650.5 L691.6 652.5 L690.0 654.7 L688.4 657.0 L686.8 659.6 L685.2 662.6 L683.7 665.9 L682.2 669.3 L680.6 673.0 L678.7 676.6 L676.4 680.3 L673.6 684.1 L670.5 688.1 L667.1 692.1 L663.4 696.1 L659.6 700.0 L655.7 703.6 L651.9 707.0 L648.0 710.1 L643.9 713.1 L639.6 716.1 L635.0 718.9 L629.9 721.7 L624.4 724.5 L618.6 727.2 L612.4 729.8 L605.8 732.3 L598.8 734.8 L591.1 737.2 L582.0 739.7 L571.4 742.2 L560.3 744.7 L549.7 746.9 L540.7 748.8 L534.2 750.2 L530.7 750.8 L529.6 751.0 L530.0 750.7 L531.2 750.3 L532.4 749.8 L532.9 749.6 L533.9 752.2 L533.4 752.4 L532.2 752.9 L531.0 753.3 L530.6 753.6 L531.7 753.4 L535.2 752.8 L541.7 751.4 L550.7 749.5 L561.3 747.3 L572.4 744.8 L583.0 742.3 L592.1 739.8 L599.8 737.4 L606.8 734.9 L613.4 732.4 L619.6 729.8 L625.4 727.1 L630.9 724.3 L636.0 721.5 L640.6 718.7 L644.9 715.7 L649.0 712.7 L652.9 709.6 L656.7 706.2 L660.6 702.6 L664.4 698.7 L668.1 694.7 L671.5 690.7 L674.6 686.7 L677.4 682.9 L679.7 679.2 L681.6 675.6 L683.2 671.9 L684.7 668.5 L686.2 665.2 L687.8 662.2 L689.4 659.6 L691.0 657.3 L692.6 655.1 L694.3 653.1 L696.1 651.2 L698.1 649.3 L700.4 647.6 L702.8 646.2 L705.4 644.8 L708.1 643.3 L710.8 641.4 L713.6 639.0 L716.7 635.6 L720.1 631.3 L723.7 626.7 L726.9 622.2 L729.7 618.4 L731.7 615.7z" fill="#c6c9ca"/>
<path d="M701.0 529.1 L702.1 531.5 L730.5 540.3 L729.4 538.1z" fill="#bfc2c3" stroke="#bfc2c3" stroke-width="0.6"/><path d="M702.1 531.5 L703.6 534.8 L732.1 543.2 L730.5 540.3z" fill="#c1c4c5" stroke="#c1c4c5" stroke-width="0.6"/><path d="M703.6 534.8 L705.4 538.7 L733.9 546.7 L732.1 543.2z" fill="#c2c5c6" stroke="#c2c5c6" stroke-width="0.6"/><path d="M705.4 538.7 L707.3 543.0 L735.7 550.6 L733.9 546.7z" fill="#c4c7c8" stroke="#c4c7c8" stroke-width="0.6"/><path d="M707.3 543.0 L708.9 547.2 L737.3 554.7 L735.7 550.6z" fill="#c6c9ca" stroke="#c6c9ca" stroke-width="0.6"/><path d="M708.9 547.2 L710.0 551.0 L738.5 558.8 L737.3 554.7z" fill="#c7cacb" stroke="#c7cacb" stroke-width="0.6"/><path d="M710.0 551.0 L710.8 554.5 L739.3 563.1 L738.5 558.8z" fill="#c9cccd" stroke="#c9cccd" stroke-width="0.6"/><path d="M710.8 554.5 L711.3 557.9 L739.9 567.8 L739.3 563.1z" fill="#cccfd0" stroke="#cccfd0" stroke-width="0.6"/><path d="M711.3 557.9 L711.6 561.3 L740.3 572.7 L739.9 567.8z" fill="#cfd2d3" stroke="#cfd2d3" stroke-width="0.6"/><path d="M711.6 561.3 L711.7 564.7 L740.4 577.7 L740.3 572.7z" fill="#d2d6d6" stroke="#d2d6d6" stroke-width="0.6"/><path d="M711.7 564.7 L711.6 568.1 L740.3 582.6 L740.4 577.7z" fill="#d6d9da" stroke="#d6d9da" stroke-width="0.6"/><path d="M711.6 568.1 L711.3 571.7 L739.8 587.2 L740.3 582.6z" fill="#d9dcdd" stroke="#d9dcdd" stroke-width="0.6"/><path d="M711.3 571.7 L711.0 575.5 L739.0 591.7 L739.8 587.2z" fill="#dcdfe0" stroke="#dcdfe0" stroke-width="0.6"/><path d="M711.0 575.5 L710.4 579.4 L737.9 596.1 L739.0 591.7z" fill="#e2e4e5" stroke="#e2e4e5" stroke-width="0.6"/><path d="M710.4 579.4 L709.7 583.4 L736.5 600.5 L737.9 596.1z" fill="#e8eaea" stroke="#e8eaea" stroke-width="0.6"/><path d="M709.7 583.4 L708.8 587.3 L734.8 604.8 L736.5 600.5z" fill="#eeeff0" stroke="#eeeff0" stroke-width="0.6"/><path d="M708.8 587.3 L707.6 591.2 L732.9 609.0 L734.8 604.8z" fill="#f3f4f5" stroke="#f3f4f5" stroke-width="0.6"/><path d="M707.6 591.2 L706.2 595.0 L730.7 613.1 L732.9 609.0z" fill="#f9fafa" stroke="#f9fafa" stroke-width="0.6"/><path d="M706.2 595.0 L704.3 598.7 L728.2 617.3 L730.7 613.1z" fill="#ffffff" stroke="#ffffff" stroke-width="0.6"/><path d="M704.3 598.7 L702.2 602.4 L725.3 621.5 L728.2 617.3z" fill="#fafafa" stroke="#fafafa" stroke-width="0.6"/><path d="M702.2 602.4 L699.8 606.0 L722.1 625.7 L725.3 621.5z" fill="#f5f5f6" stroke="#f5f5f6" stroke-width="0.6"/><path d="M699.8 606.0 L697.2 609.5 L718.8 629.7 L722.1 625.7z" fill="#f0f0f1" stroke="#f0f0f1" stroke-width="0.6"/><path d="M697.2 609.5 L694.6 612.7 L715.6 633.3 L718.8 629.7z" fill="#eaecec" stroke="#eaecec" stroke-width="0.6"/><path d="M694.6 612.7 L691.9 615.7 L712.6 636.4 L715.6 633.3z" fill="#e5e7e8" stroke="#e5e7e8" stroke-width="0.6"/><path d="M691.9 615.7 L689.2 618.3 L709.8 638.8 L712.6 636.4z" fill="#e0e2e3" stroke="#e0e2e3" stroke-width="0.6"/><path d="M689.2 618.3 L686.2 620.6 L707.1 640.7 L709.8 638.8z" fill="#dbddde" stroke="#dbddde" stroke-width="0.6"/><path d="M686.2 620.6 L683.2 622.6 L704.4 642.2 L707.1 640.7z" fill="#d6d8d9" stroke="#d6d8d9" stroke-width="0.6"/><path d="M683.2 622.6 L680.3 624.6 L701.8 643.6 L704.4 642.2z" fill="#d1d4d4" stroke="#d1d4d4" stroke-width="0.6"/><path d="M680.3 624.6 L677.5 626.5 L699.4 645.0 L701.8 643.6z" fill="#cccfd0" stroke="#cccfd0" stroke-width="0.6"/><path d="M677.5 626.5 L675.1 628.6 L697.1 646.7 L699.4 645.0z" fill="#c7cacb" stroke="#c7cacb" stroke-width="0.6"/><path d="M675.1 628.6 L673.2 630.6 L695.1 648.6 L697.1 646.7z" fill="#c2c5c6" stroke="#c2c5c6" stroke-width="0.6"/><path d="M673.2 630.6 L671.6 632.5 L693.3 650.5 L695.1 648.6z" fill="#cacdce" stroke="#cacdce" stroke-width="0.6"/><path d="M671.6 632.5 L670.2 634.4 L691.6 652.5 L693.3 650.5z" fill="#d3d5d6" stroke="#d3d5d6" stroke-width="0.6"/><path d="M670.2 634.4 L668.9 636.5 L690.0 654.7 L691.6 652.5z" fill="#dbddde" stroke="#dbddde" stroke-width="0.6"/><path d="M668.9 636.5 L667.6 638.8 L688.4 657.0 L690.0 654.7z" fill="#e3e5e5" stroke="#e3e5e5" stroke-width="0.6"/><path d="M667.6 638.8 L666.1 641.5 L686.8 659.6 L688.4 657.0z" fill="#eceded" stroke="#eceded" stroke-width="0.6"/><path d="M666.1 641.5 L664.5 644.9 L685.2 662.6 L686.8 659.6z" fill="#f4f5f5" stroke="#f4f5f5" stroke-width="0.6"/><path d="M664.5 644.9 L662.9 648.6 L683.7 665.9 L685.2 662.6z" fill="#f6f6f6" stroke="#f6f6f6" stroke-width="0.6"/><path d="M662.9 648.6 L661.3 652.7 L682.2 669.3 L683.7 665.9z" fill="#f7f8f8" stroke="#f7f8f8" stroke-width="0.6"/><path d="M661.3 652.7 L659.6 656.9 L680.6 673.0 L682.2 669.3z" fill="#f8f9f9" stroke="#f8f9f9" stroke-width="0.6"/><path d="M659.6 656.9 L657.8 661.0 L678.7 676.6 L680.6 673.0z" fill="#fafafa" stroke="#fafafa" stroke-width="0.6"/><path d="M657.8 661.0 L655.7 664.8 L676.4 680.3 L678.7 676.6z" fill="#fcfcfc" stroke="#fcfcfc" stroke-width="0.6"/><path d="M655.7 664.8 L653.5 668.5 L673.6 684.1 L676.4 680.3z" fill="#fdfdfd" stroke="#fdfdfd" stroke-width="0.6"/><path d="M653.5 668.5 L651.1 672.1 L670.5 688.1 L673.6 684.1z" fill="#f2f3f3" stroke="#f2f3f3" stroke-width="0.6"/><path d="M651.1 672.1 L648.6 675.6 L667.1 692.1 L670.5 688.1z" fill="#e7e8e9" stroke="#e7e8e9" stroke-width="0.6"/><path d="M648.6 675.6 L646.0 679.1 L663.4 696.1 L667.1 692.1z" fill="#dcdede" stroke="#dcdede" stroke-width="0.6"/><path d="M646.0 679.1 L643.2 682.4 L659.6 700.0 L663.4 696.1z" fill="#d2d4d4" stroke="#d2d4d4" stroke-width="0.6"/><path d="M643.2 682.4 L640.2 685.5 L655.7 703.6 L659.6 700.0z" fill="#c7c9ca" stroke="#c7c9ca" stroke-width="0.6"/><path d="M640.2 685.5 L637.2 688.4 L651.9 707.0 L655.7 703.6z" fill="#bcbfc0" stroke="#bcbfc0" stroke-width="0.6"/><path d="M637.2 688.4 L634.1 691.2 L648.0 710.1 L651.9 707.0z" fill="#c7caca" stroke="#c7caca" stroke-width="0.6"/><path d="M634.1 691.2 L630.8 693.8 L643.9 713.1 L648.0 710.1z" fill="#d2d4d5" stroke="#d2d4d5" stroke-width="0.6"/><path d="M630.8 693.8 L627.4 696.3 L639.6 716.1 L643.9 713.1z" fill="#dedfe0" stroke="#dedfe0" stroke-width="0.6"/><path d="M627.4 696.3 L623.6 698.7 L635.0 718.9 L639.6 716.1z" fill="#e9eaea" stroke="#e9eaea" stroke-width="0.6"/><path d="M623.6 698.7 L619.5 701.0 L629.9 721.7 L635.0 718.9z" fill="#f4f4f5" stroke="#f4f4f5" stroke-width="0.6"/><path d="M619.5 701.0 L615.1 703.2 L624.4 724.5 L629.9 721.7z" fill="#ffffff" stroke="#ffffff" stroke-width="0.6"/><path d="M615.1 703.2 L610.4 705.4 L618.6 727.2 L624.4 724.5z" fill="#fcfcfc" stroke="#fcfcfc" stroke-width="0.6"/><path d="M610.4 705.4 L605.5 707.4 L612.4 729.8 L618.6 727.2z" fill="#f9f9fa" stroke="#f9f9fa" stroke-width="0.6"/><path d="M605.5 707.4 L600.2 709.3 L605.8 732.3 L612.4 729.8z" fill="#f6f6f7" stroke="#f6f6f7" stroke-width="0.6"/><path d="M600.2 709.3 L594.5 711.1 L598.8 734.8 L605.8 732.3z" fill="#f2f4f4" stroke="#f2f4f4" stroke-width="0.6"/><path d="M594.5 711.1 L588.5 712.7 L591.1 737.2 L598.8 734.8z" fill="#eff1f2" stroke="#eff1f2" stroke-width="0.6"/><path d="M588.5 712.7 L582.3 714.1 L582.0 739.7 L591.1 737.2z" fill="#eceeef" stroke="#eceeef" stroke-width="0.6"/><path d="M582.3 714.1 L576.0 715.4 L571.4 742.2 L582.0 739.7z" fill="#edeff0" stroke="#edeff0" stroke-width="0.6"/><path d="M576.0 715.4 L569.3 716.5 L560.3 744.7 L571.4 742.2z" fill="#eff0f1" stroke="#eff0f1" stroke-width="0.6"/><path d="M569.3 716.5 L562.0 717.5 L549.7 746.9 L560.3 744.7z" fill="#f0f2f2" stroke="#f0f2f2" stroke-width="0.6"/><path d="M562.0 717.5 L553.8 718.4 L540.7 748.8 L549.7 746.9z" fill="#f1f3f3" stroke="#f1f3f3" stroke-width="0.6"/><path d="M553.8 718.4 L544.5 719.1 L534.2 750.2 L540.7 748.8z" fill="#f3f4f4" stroke="#f3f4f4" stroke-width="0.6"/><path d="M544.5 719.1 L533.0 719.7 L530.7 750.8 L534.2 750.2z" fill="#f4f5f5" stroke="#f4f5f5" stroke-width="0.6"/><path d="M533.0 719.7 L519.1 720.0 L529.6 751.0 L530.7 750.8z" fill="#f5f6f6" stroke="#f5f6f6" stroke-width="0.6"/><path d="M519.1 720.0 L504.3 720.2 L530.0 750.7 L529.6 751.0z" fill="#f5f6f6" stroke="#f5f6f6" stroke-width="0.6"/><path d="M504.3 720.2 L490.1 720.3 L531.2 750.3 L530.0 750.7z" fill="#f6f7f7" stroke="#f6f7f7" stroke-width="0.6"/><path d="M490.1 720.3 L478.1 720.3 L532.4 749.8 L531.2 750.3z" fill="#f7f8f8" stroke="#f7f8f8" stroke-width="0.6"/><path d="M478.1 720.3 L469.5 720.4 L532.9 749.6 L532.4 749.8z" fill="#f7f8f8" stroke="#f7f8f8" stroke-width="0.6"/>
<path d="M448.9 680.3 L452.4 681.7 L457.2 683.5 L462.9 685.7 L469.3 688.0 L475.9 690.2 L482.5 692.0 L489.2 693.4 L496.5 694.8 L504.0 696.1 L511.6 697.1 L519.1 697.9 L526.4 698.4 L533.5 698.6 L540.6 698.5 L547.6 698.2 L554.5 697.6 L561.2 696.8 L567.8 695.8 L574.2 694.7 L580.4 693.4 L586.4 691.8 L592.3 690.0 L598.2 687.9 L604.0 685.5 L609.8 682.7 L615.6 679.7 L621.3 676.3 L626.9 672.7 L632.4 668.8 L637.6 664.8 L642.7 660.6 L647.7 656.0 L652.5 651.2 L657.2 646.3 L661.7 641.3 L666.1 636.4 L670.4 631.3 L674.7 626.2 L678.8 621.0 L682.7 615.8 L686.2 610.5 L689.4 605.3 L692.1 600.1 L694.5 594.8 L696.6 589.5 L698.4 584.3 L699.9 579.2 L701.0 574.3 L701.8 569.6 L702.2 565.0 L702.3 560.6 L702.1 556.3 L701.7 552.2 L701.0 548.4 L699.9 544.8 L698.3 541.2 L696.5 537.8 L694.6 534.7 L693.0 532.2 L691.9 530.3 L631.3 500.2 L633.7 501.4 L637.0 503.0 L640.9 504.9 L645.1 507.1 L649.2 509.6 L652.9 512.3 L656.4 515.4 L659.9 518.8 L663.4 522.5 L666.7 526.4 L669.5 530.2 L671.8 533.9 L673.4 537.5 L674.7 541.0 L675.5 544.5 L676.0 548.1 L676.1 551.7 L675.8 555.5 L675.2 559.3 L674.3 563.1 L673.0 567.1 L671.3 571.1 L669.1 575.3 L666.4 579.7 L662.9 584.4 L658.9 589.3 L654.3 594.4 L649.4 599.5 L644.4 604.5 L639.4 609.3 L634.4 614.1 L629.1 618.7 L623.8 623.3 L618.3 627.8 L612.7 632.1 L607.1 636.3 L601.5 640.3 L595.8 644.1 L590.1 647.8 L584.2 651.4 L578.2 654.7 L572.0 657.8 L565.5 660.9 L558.7 663.8 L551.7 666.5 L544.7 669.0 L538.0 671.1 L531.6 672.7 L525.6 673.8 L519.7 674.4 L513.9 674.6 L508.6 674.6 L503.7 674.3 L499.3 674.0 L495.5 673.4 L492.1 672.5 L489.2 671.4 L486.7 670.3 L484.7 669.3 L483.1 668.6z" fill="#e1e4e5"/>
<ellipse cx="464.8" cy="674.0" rx="4" ry="3" fill="#f2f3f3" stroke="#c2c5c6" stroke-width="0.8"/>
<ellipse cx="496.6" cy="682.1" rx="4" ry="3" fill="#f2f3f3" stroke="#c2c5c6" stroke-width="0.8"/>
<ellipse cx="530.8" cy="683.4" rx="4" ry="3" fill="#f2f3f3" stroke="#c2c5c6" stroke-width="0.8"/>
<ellipse cx="564.0" cy="678.9" rx="4" ry="3" fill="#f2f3f3" stroke="#c2c5c6" stroke-width="0.8"/>
<ellipse cx="592.8" cy="666.5" rx="4" ry="3" fill="#f2f3f3" stroke="#c2c5c6" stroke-width="0.8"/>
<ellipse cx="613.3" cy="649.8" rx="4" ry="3" fill="#f2f3f3" stroke="#c2c5c6" stroke-width="0.8"/>
<ellipse cx="630.0" cy="632.3" rx="4" ry="3" fill="#f2f3f3" stroke="#c2c5c6" stroke-width="0.8"/>
<ellipse cx="645.3" cy="614.7" rx="4" ry="3" fill="#f2f3f3" stroke="#c2c5c6" stroke-width="0.8"/>
<ellipse cx="661.0" cy="597.8" rx="4" ry="3" fill="#f2f3f3" stroke="#c2c5c6" stroke-width="0.8"/>
<ellipse cx="676.3" cy="581.6" rx="4" ry="3" fill="#f2f3f3" stroke="#c2c5c6" stroke-width="0.8"/>
<ellipse cx="686.6" cy="563.5" rx="4" ry="3" fill="#f2f3f3" stroke="#c2c5c6" stroke-width="0.8"/>
<ellipse cx="688.7" cy="544.7" rx="4" ry="3" fill="#f2f3f3" stroke="#c2c5c6" stroke-width="0.8"/>
<ellipse cx="681.2" cy="525.8" rx="4" ry="3" fill="#f2f3f3" stroke="#c2c5c6" stroke-width="0.8"/>
<ellipse cx="665.6" cy="509.1" rx="4" ry="3" fill="#f2f3f3" stroke="#c2c5c6" stroke-width="0.8"/>
<ellipse cx="643.5" cy="496.7" rx="4" ry="3" fill="#f2f3f3" stroke="#c2c5c6" stroke-width="0.8"/>
<path d="M483.1 668.6 L484.7 669.3 L486.7 670.3 L489.2 671.4 L492.1 672.5 L495.5 673.4 L499.3 674.0 L503.7 674.3 L508.6 674.6 L513.9 674.6 L519.7 674.4 L525.6 673.8 L531.6 672.7 L538.0 671.1 L544.7 669.0 L551.7 666.5 L558.7 663.8 L565.5 660.9 L572.0 657.8 L578.2 654.7 L584.2 651.4 L590.1 647.8 L595.8 644.1 L601.5 640.3 L607.1 636.3 L612.7 632.1 L618.3 627.8 L623.8 623.3 L629.1 618.7 L634.4 614.1 L639.4 609.3 L644.4 604.5 L649.4 599.5 L654.3 594.4 L658.9 589.3 L662.9 584.4 L666.4 579.7 L669.1 575.3 L671.3 571.1 L673.0 567.1 L674.3 563.1 L675.2 559.3 L675.8 555.5 L676.1 551.7 L676.0 548.1 L675.5 544.5 L674.7 541.0 L673.4 537.5 L671.8 533.9 L669.5 530.2 L666.7 526.4 L663.4 522.5 L659.9 518.8 L656.4 515.4 L652.9 512.3 L649.2 509.6 L645.1 507.1 L640.9 504.9 L637.0 503.0 L633.7 501.4 L631.3 500.2z" fill="#e2e5e6"/>
<g clip-path="url(#bowlclip)">
<path d="M631.3 500.2 L633.7 501.4 L637.0 503.0 L640.9 504.9 L645.1 507.1 L649.2 509.6 L652.9 512.3 L656.4 515.4 L659.9 518.8 L663.4 522.5 L666.7 526.4 L669.5 530.2 L671.8 533.9 L673.4 537.5 L674.7 541.0 L675.5 544.5 L676.0 548.1 L676.1 551.7 L675.8 555.5 L675.2 559.3 L674.3 563.1 L673.0 567.1 L671.3 571.1 L669.1 575.3 L666.4 579.7 L662.9 584.4 L658.9 589.3 L654.3 594.4 L649.4 599.5 L644.4 604.5 L639.4 609.3 L634.4 614.1 L629.1 618.7 L623.8 623.3 L618.3 627.8 L612.7 632.1 L607.1 636.3 L601.0 640.4 L594.3 644.7 L587.5 648.8 L581.2 652.5 L575.9 655.6 L572.0 657.8 L569.4 653.8 L573.0 651.5 L578.0 648.4 L583.9 644.7 L590.2 640.6 L596.5 636.4 L602.2 632.3 L607.5 628.2 L612.7 624.0 L617.9 619.6 L622.9 615.2 L627.9 610.7 L632.7 606.1 L637.5 601.4 L642.3 596.5 L647.0 591.6 L651.5 586.7 L655.5 582.0 L658.8 577.5 L661.5 573.5 L663.8 569.6 L665.5 565.9 L666.9 562.3 L667.9 558.9 L668.5 555.5 L668.8 552.1 L668.8 548.9 L668.4 545.8 L667.6 542.8 L666.5 539.7 L665.0 536.6 L663.1 533.4 L660.6 530.1 L657.7 526.7 L654.7 523.5 L651.7 520.5 L648.8 517.7 L646.0 515.2 L642.9 512.7 L639.8 510.5 L636.9 508.5 L634.4 506.8 L632.7 505.6z" fill="#b4b7b8" filter="url(#bl3)"/>
<path d="M585.5 652.5 L634.0 609.3 L658.3 579.7 L650.2 571.6 L615.2 609.3 L564.0 649.8z" fill="#d4d7d8" filter="url(#bl6)"/>
<path d="M630.0 502.9 L644.8 513.7 L655.6 528.5 L647.5 544.7 L628.6 552.8 L615.2 542.0 L620.6 520.4z" fill="#ffffff" filter="url(#bl6)"/>
<path d="M488.5 665.9 L515.5 647.1 L558.6 647.1 L553.2 668.6 L518.2 672.7z" fill="#eceeef" filter="url(#bl6)"/>
</g>
<path d="M483.1 668.6 L631.3 500.2" fill="none" stroke="#f0f2f2" stroke-width="0.8"/>
<path d="M483.1 668.6 L631.3 500.2" fill="none" stroke="#cfd2d3" stroke-width="0.6" transform="translate(-0.8,-0.6)"/>
<path d="M641.1 748.6 L736.7 630.0" fill="none" stroke="#c6c9ca" stroke-width="0.7" stroke-dasharray="4 2"/>
<path d="M61.3 577.5L52 528" stroke="#0000fa" stroke-width="3.4"/><path d="M43.5 531.0 L60.0 529.0 L50.0 508.0z" fill="#0000fa"/>
<path d="M61.3 576.5L107 545" stroke="#00e000" stroke-width="3.4"/><path d="M101.0 538.0 L111.0 552.0 L123.0 534.0z" fill="#00ea00"/>
<path d="M62.3 578.5L105 598" stroke="#fa0000" stroke-width="4"/><path d="M107.0 590.0 L99.0 606.0 L126.0 606.0z" fill="#fa0000"/>
<text x="66" y="567" font-family="Liberation Sans, sans-serif" font-size="14" fill="#e8e8f4">rdl</text>
</svg>
</div>
</body>
</html>
